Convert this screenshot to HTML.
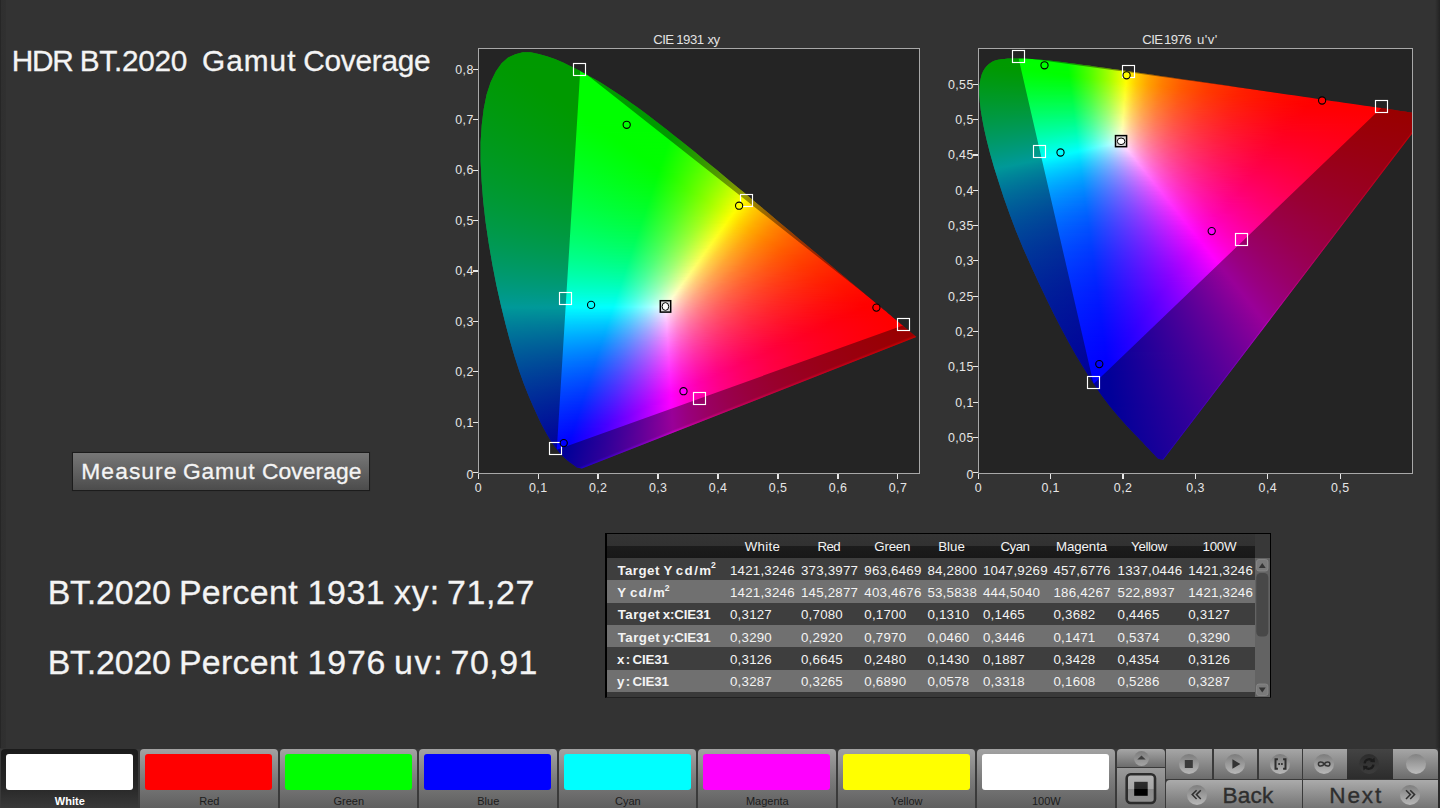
<!DOCTYPE html>
<html lang="en"><head><meta charset="utf-8"><title>HDR BT.2020 Gamut Coverage</title>
<style>
*{box-sizing:border-box;margin:0;padding:0}
html,body{width:1440px;height:808px;overflow:hidden;background:#333;font-family:"Liberation Sans",sans-serif;color:#f2f2f2}
.abs{position:absolute}
#edge{left:0;top:0;width:6.5px;height:748.5px;background:linear-gradient(90deg,#262626 1px,#2f2f2f 1px,#303030 6px,#333 6.5px)}
.w{line-height:1;white-space:nowrap;color:#f4f4f4;-webkit-text-stroke:.3px #f4f4f4}
#btn{left:72px;top:452px;width:298px;height:39px;border:1px solid #1c1c1c;background:linear-gradient(#777,#4c4c4c);box-shadow:0 0 1px #2a2a2a}
/* charts */
.plot{background:#242424;border:1px solid #a8a8a8;overflow:hidden}
.ct{font-size:12px;line-height:14px;color:#ddd;text-align:center;white-space:nowrap}
.tl{font-size:12.4px;line-height:14px;color:#e6e6e6;white-space:nowrap;letter-spacing:.45px}
.yl{text-align:right;width:40px}
.xl{text-align:center;width:40px}
.tk{background:#e8e8e8}
.cie{position:absolute;left:0;top:0}
.cie i{display:block;height:1px}
.dk{position:absolute;left:0;top:0;background:rgba(0,0,0,.4)}
svg.mk{position:absolute;left:0;top:0;overflow:visible}
/* table */
#tbl{left:605px;top:533px;width:666px;height:165px;border:1px solid #000;border-left-width:2px;border-bottom-color:#212121;background:#3a3a3a}
#tbl .hd{position:absolute;left:0;top:0;width:648px;height:24px;background:linear-gradient(#343434 0,#313131 50%,#1c1c1c 52%,#181818 100%)}
#tbl .r{position:absolute;left:0;width:648px}
#tbl .r.d{background:#3e3e3e}
#tbl .r.l{background:#707070}
#tbl span,#tbl b{position:absolute;font-size:13.3px;line-height:1;white-space:nowrap;color:#f3f3f3}
#sb{position:absolute;left:648px;top:0;width:15px;height:163px;background:#383838}
/* bottom bar */
#bar{left:0;top:748px;width:1440px;height:60px;background:linear-gradient(#333 0,#333 1px,#3a3a3a 1px)}
.tab{position:absolute;top:1px;width:137.6px;height:60px;border-radius:4px 4px 0 0;background:linear-gradient(#a2a2a2,#7c7c7c 50%,#5e5e5e);font-size:11px;text-align:center;color:#1c1c1c}
.tab.sel{background:linear-gradient(#1b1b1b,#262626 60%,#3a3a3a);color:#fff;font-weight:bold}
.tab u{position:absolute;left:5px;top:5px;width:127.2px;height:36px;border-radius:3px;text-decoration:none}
.tab s{position:absolute;left:0;width:138px;top:45px;line-height:14px;text-decoration:none}

.cb{position:absolute;background:linear-gradient(#a6a6a6,#6c6c6c)}
.cb .c{position:absolute;width:20px;height:20px;border-radius:10px;background:linear-gradient(#7c7c7c,#9a9a9a 50%,#b8b8b8)}
.nav{position:absolute;top:32px;height:28px;background:linear-gradient(#ababab,#747474);font-size:22.6px;line-height:26px;color:#2e2e2e;-webkit-text-stroke:.35px #2e2e2e}
.nav .c{position:absolute;top:5px;width:20px;height:20px;border-radius:10px;background:linear-gradient(#7e7e7e,#9c9c9c 50%,#b8b8b8)}

</style></head><body>
<div class="abs" id="edge"></div><div class="abs" style="left:1435px;top:0;width:5px;height:748px;background:linear-gradient(90deg,#333,#2b2b2b 50%,#222)"></div>
<div class="abs" id="title"><span class="abs w" style="left:11.8px;top:46.3px;font-size:29.8px;letter-spacing:-1.34px;">HDR</span> <span class="abs w" style="left:79.7px;top:46.3px;font-size:29.8px;letter-spacing:-0.27px;">BT.2020</span> <span class="abs w" style="left:202.1px;top:46.3px;font-size:29.8px;letter-spacing:0.98px;">Gamut</span> <span class="abs w" style="left:303.3px;top:46.3px;font-size:29.8px;letter-spacing:-0.28px;">Coverage</span></div>
<div class="abs" id="btn"></div>
<div><span class="abs w" style="left:81.3px;top:460.3px;font-size:22.8px;letter-spacing:1.08px;">Measure</span> <span class="abs w" style="left:183.1px;top:460.3px;font-size:22.8px;letter-spacing:0.75px;">Gamut</span> <span class="abs w" style="left:261.9px;top:460.3px;font-size:22.8px;letter-spacing:0.11px;">Coverage</span></div>
<div><span class="abs w" style="left:47.7px;top:575.6px;font-size:33.9px;letter-spacing:-0.19px;">BT.2020</span> <span class="abs w" style="left:178.9px;top:575.6px;font-size:33.9px;letter-spacing:0.31px;">Percent</span> <span class="abs w" style="left:307.5px;top:575.6px;font-size:33.9px;letter-spacing:0.60px;">1931</span> <span class="abs w" style="left:394.0px;top:575.6px;font-size:33.9px;letter-spacing:0.88px;">xy:</span> <span class="abs w" style="left:446.9px;top:575.6px;font-size:33.9px;letter-spacing:0.69px;">71,27</span></div>
<div><span class="abs w" style="left:47.7px;top:645.6px;font-size:33.9px;letter-spacing:-0.19px;">BT.2020</span> <span class="abs w" style="left:178.9px;top:645.6px;font-size:33.9px;letter-spacing:0.31px;">Percent</span> <span class="abs w" style="left:307.5px;top:645.6px;font-size:33.9px;letter-spacing:0.85px;">1976</span> <span class="abs w" style="left:394.0px;top:645.6px;font-size:33.9px;letter-spacing:1.69px;">uv:</span> <span class="abs w" style="left:450.5px;top:645.6px;font-size:33.9px;letter-spacing:0.54px;">70,91</span></div>

<div class="abs plot" style="left:478px;top:48px;width:442px;height:426px">
<div class="cie" style="padding-top:3px;width:440px;height:424px;clip-path:polygon(102.9px 419.6px,97.9px 418.4px,97.3px 418px,96.6px 417.5px,95.9px 416.9px,95.1px 416.3px,94.2px 415.7px,93.2px 415px,92.2px 414.2px,91px 413.4px,89.8px 412.5px,88.5px 411.4px,87.1px 410.3px,85.6px 408.9px,84.1px 407.5px,82.4px 405.8px,80.5px 403.8px,78.5px 401.3px,76.2px 398.3px,73.7px 394.7px,71px 390.6px,68.2px 385.8px,65px 380.1px,61.6px 373.4px,58px 365.8px,54px 357px,49.7px 346.9px,45.1px 335.5px,40.5px 322.7px,35.8px 308.2px,31.1px 292.3px,26.5px 275.1px,21.9px 256.3px,17.4px 236.3px,13.4px 215.7px,9.8px 194.7px,6.6px 173.3px,4.2px 152.3px,2.6px 132px,1.6px 112.2px,1.6px 93.6px,2.7px 76.2px,4.7px 59.9px,7.6px 45.5px,11.7px 33.1px,16.8px 22.6px,22.6px 14.3px,29.1px 8.6px,36.3px 5.2px,43.9px 3.3px,51.6px 3.3px,59.7px 4.9px,67.8px 7.2px,75.9px 10px,84.1px 13.6px,92.1px 17.4px,99.8px 21.3px,107.4px 25.4px,115px 29.7px,122.4px 34.1px,129.7px 38.7px,137px 43.4px,144.2px 48.3px,151.5px 53.4px,158.7px 58.6px,165.8px 63.8px,173px 69.2px,180.1px 74.7px,187.3px 80.2px,194.4px 85.9px,201.5px 91.6px,208.7px 97.3px,215.9px 103.1px,223px 108.9px,230.1px 114.8px,237.3px 120.6px,244.4px 126.5px,251.5px 132.4px,258.5px 138.3px,265.6px 144.1px,272.6px 149.9px,279.5px 155.8px,286.4px 161.5px,293.2px 167.2px,299.9px 172.9px,306.6px 178.5px,313.2px 184px,319.6px 189.4px,326px 194.7px,332.2px 199.9px,338.3px 205px,344.2px 209.9px,349.9px 214.8px,355.5px 219.4px,360.8px 223.9px,365.8px 228.1px,370.6px 232.2px,375.2px 236px,379.7px 239.7px,383.9px 243.3px,388px 246.7px,391.7px 249.8px,395.2px 252.7px,398.5px 255.4px,401.6px 258px,404.4px 260.4px,407.1px 262.6px,409.5px 264.7px,411.8px 266.6px,413.9px 268.4px,415.9px 270px,417.7px 271.5px,419.4px 272.9px,420.9px 274.2px,422.4px 275.5px,423.8px 276.6px,425.1px 277.7px,426.3px 278.7px,427.4px 279.7px,428.5px 280.6px,429.5px 281.4px,430.4px 282.2px,431.3px 282.9px,432.1px 283.6px,432.8px 284.2px,433.5px 284.7px,434.1px 285.2px,434.6px 285.7px,435.1px 286.1px,435.6px 286.5px,436px 286.9px,436.4px 287.2px,436.7px 287.5px,437px 287.7px,437.3px 287.9px,437.9px 287.8px)">
<i style="background:linear-gradient(90deg,#0f0 40px,#0f0 57px)"></i>
<i style="background:linear-gradient(90deg,#0f0 35px,#0f0 62px)"></i>
<i style="background:linear-gradient(90deg,#0f0 33px,#0f0 65px)"></i>
<i style="background:linear-gradient(90deg,#0f0 31px,#0f0 69px)"></i>
<i style="background:linear-gradient(90deg,#0f0 29px,#0f0 72px)"></i>
<i style="background:linear-gradient(90deg,#0f0 27px,#0f0 74px)"></i>
<i style="background:linear-gradient(90deg,#0f0 26px,#0f0 77px)"></i>
<i style="background:linear-gradient(90deg,#0f0 25px,#0f0 80px)"></i>
<i style="background:linear-gradient(90deg,#0f0 24px,#0f0 82px)"></i>
<i style="background:linear-gradient(90deg,#0f0 23px,#0f0 84px)"></i>
<i style="background:linear-gradient(90deg,#0f0 21px,#0f0 86px)"></i>
<i style="background:linear-gradient(90deg,#0f0 21px,#0f0 88px)"></i>
<i style="background:linear-gradient(90deg,#0f0 20px,#0f0 91px)"></i>
<i style="background:linear-gradient(90deg,#00ff01 19px,#0f0 93px)"></i>
<i style="background:linear-gradient(90deg,#00ff01 19px,#0f0 95px)"></i>
<i style="background:linear-gradient(90deg,#00ff02 18px,#0f0 97px)"></i>
<i style="background:linear-gradient(90deg,#00ff03 17px,#0f0 44px,#0f0 99px)"></i>
<i style="background:linear-gradient(90deg,#00ff04 16px,#0f0 38px,#0f0 101px)"></i>
<i style="background:linear-gradient(90deg,#00ff04 16px,#0f0 42px,#0f0 103px)"></i>
<i style="background:linear-gradient(90deg,#00ff05 15px,#0f0 40px,#0f0 105px)"></i>
<i style="background:linear-gradient(90deg,#00ff05 15px,#0f0 43px,#0f0 106px)"></i>
<i style="background:linear-gradient(90deg,#00ff06 14px,#0f0 42px,#0f0 108px)"></i>
<i style="background:linear-gradient(90deg,#00ff06 14px,#0f0 45px,#0f0 110px)"></i>
<i style="background:linear-gradient(90deg,#00ff07 13px,#0f0 45px,#0f0 112px)"></i>
<i style="background:linear-gradient(90deg,#00ff08 13px,#0f0 46px,#0f0 114px)"></i>
<i style="background:linear-gradient(90deg,#00ff08 12px,#0f0 48px,#0f0 115px)"></i>
<i style="background:linear-gradient(90deg,#00ff09 12px,#0f0 49px,#0f0 117px)"></i>
<i style="background:linear-gradient(90deg,#00ff09 11px,#0f0 50px,#0f0 119px)"></i>
<i style="background:linear-gradient(90deg,#00ff0a 11px,#0f0 52px,#0f0 120px)"></i>
<i style="background:linear-gradient(90deg,#00ff0b 10px,#0f0 52px,#0f0 122px)"></i>
<i style="background:linear-gradient(90deg,#00ff0b 10px,#0f0 55px,#0f0 124px)"></i>
<i style="background:linear-gradient(90deg,#00ff0c 10px,#0f0 55px,#0f0 125px)"></i>
<i style="background:linear-gradient(90deg,#00ff0c 9px,#0f0 58px,#0f0 127px)"></i>
<i style="background:linear-gradient(90deg,#00ff0d 9px,#0f0 58px,#0f0 129px)"></i>
<i style="background:linear-gradient(90deg,#00ff0d 9px,#0f0 61px,#0f0 130px)"></i>
<i style="background:linear-gradient(90deg,#00ff0e 8px,#0f0 61px,#0f0 132px)"></i>
<i style="background:linear-gradient(90deg,#00ff0f 8px,#0f0 63px,#0f0 133px)"></i>
<i style="background:linear-gradient(90deg,#00ff0f 8px,#0f0 64px,#0f0 135px)"></i>
<i style="background:linear-gradient(90deg,#00ff10 7px,#0f0 66px,#0f0 136px)"></i>
<i style="background:linear-gradient(90deg,#00ff10 7px,#0f0 67px,#0f0 138px)"></i>
<i style="background:linear-gradient(90deg,#0f1 7px,#0f0 69px,#0f0 139px)"></i>
<i style="background:linear-gradient(90deg,#00ff12 6px,#0f0 70px,#0f0 141px)"></i>
<i style="background:linear-gradient(90deg,#00ff12 6px,#0f0 72px,#0f0 142px)"></i>
<i style="background:linear-gradient(90deg,#00ff13 6px,#0f0 73px,#0f0 144px)"></i>
<i style="background:linear-gradient(90deg,#00ff13 6px,#0f0 75px,#0f0 145px)"></i>
<i style="background:linear-gradient(90deg,#00ff14 5px,#0f0 76px,#0f0 147px)"></i>
<i style="background:linear-gradient(90deg,#00ff14 5px,#0f0 78px,#0f0 148px)"></i>
<i style="background:linear-gradient(90deg,#00ff15 5px,#0f0 79px,#0f0 150px)"></i>
<i style="background:linear-gradient(90deg,#00ff15 5px,#0f0 81px,#0f0 151px)"></i>
<i style="background:linear-gradient(90deg,#00ff16 5px,#0f0 81px,#0f0 152px)"></i>
<i style="background:linear-gradient(90deg,#00ff17 4px,#0f0 83px,#0f0 154px)"></i>
<i style="background:linear-gradient(90deg,#00ff17 4px,#0f0 85px,#0f0 155px)"></i>
<i style="background:linear-gradient(90deg,#00ff18 4px,#0f0 86px,#0f0 157px)"></i>
<i style="background:linear-gradient(90deg,#00ff18 4px,#0f0 87px,#0f0 158px)"></i>
<i style="background:linear-gradient(90deg,#00ff19 4px,#0f0 89px,#0f0 159px)"></i>
<i style="background:linear-gradient(90deg,#00ff1a 3px,#0f0 90px,#0f0 161px)"></i>
<i style="background:linear-gradient(90deg,#00ff1a 3px,#0f0 92px,#0f0 162px)"></i>
<i style="background:linear-gradient(90deg,#00ff1b 3px,#0f0 93px,#0f0 163px)"></i>
<i style="background:linear-gradient(90deg,#00ff1b 3px,#0f0 95px,#0f0 165px)"></i>
<i style="background:linear-gradient(90deg,#00ff1c 3px,#0f0 96px,#0f0 166px)"></i>
<i style="background:linear-gradient(90deg,#00ff1c 3px,#0f0 98px,#0f0 168px)"></i>
<i style="background:linear-gradient(90deg,#00ff1d 3px,#0f0 99px,#0f0 169px)"></i>
<i style="background:linear-gradient(90deg,#00ff1e 2px,#0f0 101px,#0f0 170px)"></i>
<i style="background:linear-gradient(90deg,#00ff1e 2px,#0f0 102px,#0f0 172px)"></i>
<i style="background:linear-gradient(90deg,#00ff1f 2px,#0f0 104px,#0f0 173px)"></i>
<i style="background:linear-gradient(90deg,#00ff1f 2px,#0f0 105px,#0f0 174px)"></i>
<i style="background:linear-gradient(90deg,#00ff20 2px,#0f0 107px,#0f0 175px)"></i>
<i style="background:linear-gradient(90deg,#00ff21 2px,#0f0 108px,#0f0 177px)"></i>
<i style="background:linear-gradient(90deg,#00ff21 2px,#0f0 110px,#0f0 178px)"></i>
<i style="background:linear-gradient(90deg,#0f2 2px,#0f0 111px,#0f0 179px)"></i>
<i style="background:linear-gradient(90deg,#00ff23 1px,#0f0 113px,#0f0 181px)"></i>
<i style="background:linear-gradient(90deg,#00ff23 1px,#00ff01 107px,#0f0 182px)"></i>
<i style="background:linear-gradient(90deg,#00ff24 1px,#0f0 116px,#0f0 183px)"></i>
<i style="background:linear-gradient(90deg,#00ff24 1px,#00ff01 110px,#0f0 185px)"></i>
<i style="background:linear-gradient(90deg,#00ff25 1px,#0f0 119px,#0f0 186px)"></i>
<i style="background:linear-gradient(90deg,#00ff26 1px,#0f0 120px,#0f0 187px)"></i>
<i style="background:linear-gradient(90deg,#00ff26 1px,#00ff04 107px,#0f0 125px,#0f0 188px)"></i>
<i style="background:linear-gradient(90deg,#00ff27 1px,#00ff03 111px,#0f0 129px,#0f0 190px)"></i>
<i style="background:linear-gradient(90deg,#00ff27 1px,#00ff04 110px,#0f0 128px,#0f0 191px)"></i>
<i style="background:linear-gradient(90deg,#00ff28 1px,#00ff03 114px,#0f0 132px,#0f0 192px)"></i>
<i style="background:linear-gradient(90deg,#00ff29 1px,#00ff02 118px,#02ff00 193px,#04ff00 194px)"></i>
<i style="background:linear-gradient(90deg,#00ff29 1px,#00ff08 104px,#0f0 129px,#01ff00 192px,#06ff00 195px)"></i>
<i style="background:linear-gradient(90deg,#00ff2a 1px,#00ff06 111px,#0f0 132px,#02ff00 192px,#08ff00 196px)"></i>
<i style="background:linear-gradient(90deg,#00ff2a 1px,#00ff0a 102px,#0f0 132px,#02ff00 192px,#0bff00 197px)"></i>
<i style="background:linear-gradient(90deg,#00ff2b 0px,#00ff08 109px,#0f0 134px,#01ff00 191px,#0fff00 199px)"></i>
<i style="background:linear-gradient(90deg,#00ff2c 0px,#00ff07 113px,#0f0 135px,#02ff00 191px,#1f0 200px)"></i>
<i style="background:linear-gradient(90deg,#00ff2d 0px,#00ff06 117px,#0f0 138px,#02ff00 191px,#14ff00 201px)"></i>
<i style="background:linear-gradient(90deg,#00ff2d 0px,#00ff0b 106px,#0f0 137px,#01ff00 190px,#16ff00 202px)"></i>
<i style="background:linear-gradient(90deg,#00ff2e 0px,#00ff0a 110px,#0f0 140px,#02ff00 190px,#1aff00 204px)"></i>
<i style="background:linear-gradient(90deg,#00ff2f 0px,#00ff08 117px,#0f0 141px,#02ff00 190px,#1dff00 205px)"></i>
<i style="background:linear-gradient(90deg,#00ff2f 0px,#00ff0e 103px,#0f0 142px,#01ff00 189px,#1fff00 206px)"></i>
<i style="background:linear-gradient(90deg,#00ff30 0px,#00ff0c 110px,#0f0 143px,#02ff00 189px,#2f0 207px)"></i>
<i style="background:linear-gradient(90deg,#00ff31 0px,#00ff0b 114px,#0f0 145px,#02ff00 189px,#26ff00 209px)"></i>
<i style="background:linear-gradient(90deg,#00ff31 0px,#00ff10 103px,#0f0 146px,#01ff00 188px,#29ff00 210px)"></i>
<i style="background:linear-gradient(90deg,#00ff32 0px,#00ff0d 113px,#0f0 148px,#02ff00 188px,#2cff00 211px)"></i>
<i style="background:linear-gradient(90deg,#0f3 0px,#00ff0d 114px,#0f0 149px,#02ff00 188px,#2eff00 212px)"></i>
<i style="background:linear-gradient(90deg,#0f3 0px,#00ff12 103px,#0f0 151px,#01ff00 187px,#3f0 214px)"></i>
<i style="background:linear-gradient(90deg,#00ff34 0px,#00ff10 110px,#0f0 152px,#02ff00 187px,#36ff00 215px)"></i>
<i style="background:linear-gradient(90deg,#00ff35 0px,#00ff0f 114px,#0f0 154px,#02ff00 187px,#39ff00 216px)"></i>
<i style="background:linear-gradient(90deg,#00ff35 0px,#00ff14 103px,#0f0 155px,#01ff00 186px,#3cff00 217px)"></i>
<i style="background:linear-gradient(90deg,#00ff36 0px,#0f1 113px,#0f0 157px,#02ff00 186px,#3fff00 218px)"></i>
<i style="background:linear-gradient(90deg,#00ff37 0px,#00ff10 117px,#0f0 158px,#02ff00 186px,#4f0 220px)"></i>
<i style="background:linear-gradient(90deg,#00ff37 0px,#00ff16 103px,#0f0 160px,#01ff00 185px,#47ff00 221px)"></i>
<i style="background:linear-gradient(90deg,#00ff38 0px,#00ff14 110px,#0f0 161px,#02ff00 185px,#47ff00 221px,#4aff00 222px)"></i>
<i style="background:linear-gradient(90deg,#00ff39 0px,#00ff14 112px,#0f0 163px,#02ff00 185px,#4dff00 223px)"></i>
<i style="background:linear-gradient(90deg,#00ff39 0px,#00ff1a 98px,#0f0 164px,#01ff00 184px,#52ff00 225px)"></i>
<i style="background:linear-gradient(90deg,#00ff3a 0px,#00ff1a 100px,#0f0 166px,#02ff00 184px,#5f0 226px)"></i>
<i style="background:linear-gradient(90deg,#00ff3b 0px,#00ff17 110px,#0f0 167px,#02ff00 184px,#4dff00 222px,#58ff00 227px)"></i>
<i style="background:linear-gradient(90deg,#00ff3c 0px,#00ff16 114px,#0f0 168px,#01ff00 183px,#4eff00 222px,#5cff00 228px)"></i>
<i style="background:linear-gradient(90deg,#00ff3c 0px,#00ff1a 106px,#0f0 170px,#02ff00 183px,#4fff00 222px,#61ff00 230px)"></i>
<i style="background:linear-gradient(90deg,#00ff3d 0px,#00ff1b 105px,#0f0 171px,#02ff00 183px,#5bff00 227px,#64ff00 231px)"></i>
<i style="background:linear-gradient(90deg,#00ff3e 0px,#00ff19 112px,#0f0 173px,#01ff00 182px,#5aff00 226px,#68ff00 232px)"></i>
<i style="background:linear-gradient(90deg,#00ff3f 0px,#00ff19 114px,#0f0 174px,#02ff00 182px,#4aff00 218px,#6bff00 233px)"></i>
<i style="background:linear-gradient(90deg,#00ff3f 0px,#00ff1e 103px,#0f0 176px,#02ff00 182px,#51ff00 221px,#6fff00 234px)"></i>
<i style="background:linear-gradient(90deg,#00ff40 0px,#00ff1e 105px,#0f0 177px,#03ff00 182px,#52ff00 221px,#75ff00 236px)"></i>
<i style="background:linear-gradient(90deg,#00ff41 0px,#00ff1b 115px,#0f0 179px,#15ff00 191px,#63ff00 228px,#78ff00 237px)"></i>
<i style="background:linear-gradient(90deg,#00ff42 0px,#00ff1c 114px,#0f0 180px,#52ff00 220px,#7cff00 238px)"></i>
<i style="background:linear-gradient(90deg,#00ff42 0px,#00ff23 98px,#01ff00 180px,#48ff00 215px,#80ff00 239px)"></i>
<i style="background:linear-gradient(90deg,#00ff43 1px,#00ff1f 111px,#02ff00 180px,#49ff00 215px,#84ff00 240px)"></i>
<i style="background:linear-gradient(90deg,#0f4 1px,#00ff1e 115px,#02ff01 180px,#53ff00 219px,#8aff00 242px)"></i>
<i style="background:linear-gradient(90deg,#0f4 1px,#00ff25 99px,#01ff02 179px,#54ff00 219px,#8eff00 243px)"></i>
<i style="background:linear-gradient(90deg,#00ff45 1px,#00ff25 101px,#02ff03 179px,#1fff00 194px,#6fff00 230px,#92ff00 244px)"></i>
<i style="background:linear-gradient(90deg,#00ff46 1px,#00ff24 106px,#02ff03 179px,#27ff00 197px,#6eff00 229px,#96ff00 245px)"></i>
<i style="background:linear-gradient(90deg,#00ff47 1px,#00ff23 111px,#01ff05 178px,#1fff00 193px,#6fff00 229px,#9aff00 246px)"></i>
<i style="background:linear-gradient(90deg,#00ff48 1px,#0f2 115px,#02ff05 178px,#2f0 194px,#6eff00 228px,#a1ff00 248px)"></i>
<i style="background:linear-gradient(90deg,#00ff48 1px,#00ff2a 97px,#02ff06 178px,#27ff00 196px,#74ff00 230px,#a5ff00 249px)"></i>
<i style="background:linear-gradient(90deg,#00ff49 1px,#00ff28 104px,#01ff08 177px,#26ff00 195px,#6eff00 227px,#af0 250px)"></i>
<i style="background:linear-gradient(90deg,#00ff4a 1px,#00ff2a 101px,#02ff08 177px,#2dff00 198px,#7cff00 232px,#aeff00 251px)"></i>
<i style="background:linear-gradient(90deg,#00ff4b 1px,#00ff26 114px,#02ff09 177px,#2eff00 198px,#7dff00 232px,#b2ff00 252px)"></i>
<i style="background:linear-gradient(90deg,#00ff4c 1px,#00ff27 113px,#01ff0b 176px,#3f0 200px,#89ff00 236px,#baff00 254px)"></i>
<i style="background:linear-gradient(90deg,#00ff4c 1px,#00ff2d 100px,#02ff0b 176px,#36ff00 201px,#8f0 235px,#beff00 255px)"></i>
<i style="background:linear-gradient(90deg,#00ff4d 1px,#00ff2f 97px,#02ff0c 176px,#3cff00 203px,#84ff00 233px,#c3ff00 256px)"></i>
<i style="background:linear-gradient(90deg,#00ff4e 1px,#00ff2f 99px,#01ff0e 175px,#3fff00 204px,#90ff00 237px,#c8ff00 257px)"></i>
<i style="background:linear-gradient(90deg,#00ff4f 1px,#00ff2e 104px,#02ff0f 175px,#45ff00 206px,#8fff00 236px,#d0ff00 259px)"></i>
<i style="background:linear-gradient(90deg,#00ff50 1px,#00ff2f 104px,#02ff0f 175px,#48ff00 207px,#96ff00 238px,#d5ff00 260px)"></i>
<i style="background:linear-gradient(90deg,#00ff50 2px,#00ff32 99px,#01ff11 174px,#4eff00 209px,#9dff00 240px,#daff00 261px)"></i>
<i style="background:linear-gradient(90deg,#00ff51 2px,#0f3 98px,#02ff12 174px,#4aff00 207px,#9cff00 239px,#dfff00 262px)"></i>
<i style="background:linear-gradient(90deg,#00ff52 2px,#00ff34 98px,#02ff13 174px,#52ff00 210px,#a6ff00 242px,#e4ff00 263px)"></i>
<i style="background:linear-gradient(90deg,#00ff53 2px,#0f3 103px,#01ff14 173px,#4cff01 207px,#a2ff00 240px,#edff00 265px)"></i>
<i style="background:linear-gradient(90deg,#00ff54 2px,#00ff32 108px,#02ff15 173px,#4dff02 207px,#a1ff00 239px,#f2ff00 266px)"></i>
<i style="background:linear-gradient(90deg,#0f5 2px,#00ff34 105px,#02ff16 173px,#58ff01 211px,#aeff00 243px,#f8ff00 267px)"></i>
<i style="background:linear-gradient(90deg,#00ff56 2px,#00ff35 105px,#01ff17 172px,#4dff05 206px,#6eff00 219px,#bcff00 247px,#feff00 268px)"></i>
<i style="background:linear-gradient(90deg,#00ff57 2px,#00ff35 108px,#02ff18 172px,#4eff06 206px,#6fff00 219px,#c3ff00 249px,#fffe00 268px,#fffb00 269px)"></i>
<i style="background:linear-gradient(90deg,#00ff58 2px,#00ff35 110px,#02ff19 172px,#52ff06 207px,#79ff00 222px,#c8ff00 250px,#ff0 267px,#fff200 271px)"></i>
<i style="background:linear-gradient(90deg,#00ff58 2px,#00ff3c 94px,#01ff1b 171px,#4eff08 205px,#7aff00 222px,#caff00 250px,#feff00 266px,#ffed00 272px)"></i>
<i style="background:linear-gradient(90deg,#00ff59 2px,#00ff3d 94px,#02ff1c 171px,#48ff0b 202px,#81ff00 224px,#c9ff00 249px,#fffd00 266px,#ffe700 273px)"></i>
<i style="background:linear-gradient(90deg,#00ff5a 2px,#00ff3c 99px,#02ff1d 171px,#53ff0a 206px,#82ff00 224px,#e2ff00 256px,#fffe00 265px,#ffe200 274px)"></i>
<i style="background:linear-gradient(90deg,#00ff5b 3px,#00ff3d 99px,#01ff1e 170px,#4fff0c 204px,#89ff00 226px,#e7ff00 257px,#ff0 264px,#fd0 275px)"></i>
<i style="background:linear-gradient(90deg,#00ff5c 3px,#00ff3c 105px,#02ff1f 170px,#49ff0e 201px,#8eff00 227px,#e6ff00 256px,#feff00 263px,#ffd600 277px)"></i>
<i style="background:linear-gradient(90deg,#00ff5d 3px,#00ff3d 105px,#02ff20 170px,#54ff0d 205px,#95ff00 229px,#efff00 258px,#fffe00 263px,#ffd100 278px)"></i>
<i style="background:linear-gradient(90deg,#00ff5e 3px,#00ff3e 105px,#01ff22 169px,#50ff0f 203px,#9aff00 230px,#e4ff00 254px,#ff0 262px,#ffd500 276px,#ffcd00 279px)"></i>
<i style="background:linear-gradient(90deg,#00ff5f 3px,#00ff3f 105px,#02ff23 169px,#4aff12 200px,#9eff00 231px,#f7ff00 259px,#fffc00 262px,#ffcd00 278px,#ffc800 280px)"></i>
<i style="background:linear-gradient(90deg,#00ff60 3px,#00ff40 105px,#02ff24 169px,#58ff10 205px,#a6ff00 233px,#fffd00 261px,#ffcb00 278px,#ffc400 281px)"></i>
<i style="background:linear-gradient(90deg,#00ff61 3px,#00ff41 105px,#01ff25 168px,#51ff13 202px,#a8ff00 233px,#fffe00 260px,#ffce00 276px,#ffbe00 283px)"></i>
<i style="background:linear-gradient(90deg,#00ff62 3px,#00ff42 105px,#02ff26 168px,#4bff16 199px,#98ff04 227px,#bcff00 239px,#ff0 259px,#ffd400 273px,#ffba00 284px)"></i>
<i style="background:linear-gradient(90deg,#00ff63 3px,#00ff43 105px,#02ff27 168px,#54ff15 202px,#a5ff03 231px,#cbff00 243px,#feff00 258px,#ffca00 276px,#ffb600 285px)"></i>
<i style="background:linear-gradient(90deg,#00ff64 3px,#0f4 105px,#01ff29 167px,#50ff17 200px,#a4ff04 230px,#caff00 242px,#fffe00 258px,#ffcb00 275px,#ffb200 286px)"></i>
<i style="background:linear-gradient(90deg,#00ff64 4px,#00ff48 98px,#02ff2a 167px,#4cff1a 198px,#a0ff07 228px,#cf0 242px,#ff0 257px,#ffd900 269px,#ffb000 286px,#ffae00 287px)"></i>
<i style="background:linear-gradient(90deg,#00ff65 4px,#00ff4b 92px,#02ff2b 167px,#55ff19 201px,#abff06 231px,#d2ff00 243px,#feff00 256px,#fc0 273px,#ffab00 288px)"></i>
<i style="background:linear-gradient(90deg,#00ff67 4px,#00ff45 111px,#01ff2d 166px,#51ff1b 199px,#a1ff0a 227px,#d7ff00 244px,#fffd00 256px,#ffca00 273px,#ffa500 290px)"></i>
<i style="background:linear-gradient(90deg,#00ff68 4px,#00ff48 106px,#02ff2e 166px,#4dff1e 197px,#a2ff0b 227px,#df0 245px,#fffe00 255px,#ffc800 273px,#ffa300 290px,#ffa200 291px)"></i>
<i style="background:linear-gradient(90deg,#00ff69 4px,#00ff48 109px,#02ff2f 166px,#59ff1c 201px,#a7ff0b 228px,#e6ff00 247px,#ff0 254px,#ffd300 268px,#ffa700 287px,#ff9e00 292px)"></i>
<i style="background:linear-gradient(90deg,#00ff6a 4px,#00ff4b 104px,#01ff31 165px,#4dff20 196px,#9dff0f 224px,#ecff00 248px,#feff00 253px,#fc0 270px,#ffa800 286px,#ff9b00 293px)"></i>
<i style="background:linear-gradient(90deg,#00ff6b 4px,#00ff4b 107px,#02ff32 165px,#49ff23 194px,#98ff12 222px,#f2ff00 249px,#fffd00 253px,#ffc700 271px,#ffa000 289px,#ff9800 294px)"></i>
<i style="background:linear-gradient(90deg,#00ff6c 4px,#00ff4e 102px,#02ff33 165px,#5f2 198px,#9dff12 223px,#f1ff00 248px,#fffe00 252px,#ffcf00 267px,#ffa200 287px,#ff9300 296px)"></i>
<i style="background:linear-gradient(90deg,#00ff6d 5px,#00ff4d 108px,#01ff35 164px,#53ff23 197px,#bcff0d 232px,#ff0 251px,#ffd300 265px,#ffad00 281px,#ff9000 297px)"></i>
<i style="background:linear-gradient(90deg,#00ff6e 5px,#00ff4f 106px,#02ff36 164px,#4aff27 193px,#98ff16 220px,#ebff05 245px,#feff01 250px,#ffcb00 267px,#ffa300 285px,#ff8d00 298px)"></i>
<i style="background:linear-gradient(90deg,#00ff6f 5px,#00ff50 107px,#00ff38 163px,#4eff28 194px,#96ff18 219px,#f1ff05 246px,#fffe02 250px,#ffce00 265px,#ffa100 285px,#ff8a00 299px)"></i>
<i style="background:linear-gradient(90deg,#00ff70 5px,#00ff52 104px,#01ff39 163px,#4fff29 194px,#b5ff14 228px,#ffff04 249px,#fd0 259px,#ffb000 277px,#ff8b00 297px,#ff8700 300px)"></i>
<i style="background:linear-gradient(90deg,#00ff71 5px,#0f5 99px,#02ff3a 163px,#4bff2b 192px,#a0ff1a 221px,#feff06 248px,#ffd800 260px,#ffb000 276px,#ff8b00 296px,#ff8200 302px)"></i>
<i style="background:linear-gradient(90deg,#00ff72 5px,#00ff56 100px,#00ff3c 162px,#4fff2c 193px,#afff18 225px,#fffd07 248px,#ffd600 260px,#ffae00 276px,#f80 297px,#ff8000 303px)"></i>
<i style="background:linear-gradient(90deg,#00ff73 5px,#00ff56 103px,#01ff3d 162px,#4bff2e 191px,#b1ff19 225px,#fffe09 247px,#ffd400 260px,#ffac00 276px,#ff8500 298px,#ff7d00 304px)"></i>
<i style="background:linear-gradient(90deg,#00ff74 5px,#00ff59 98px,#02ff3e 162px,#4cff30 191px,#a6ff1d 221px,#ffff0c 246px,#ffd100 260px,#ffa600 278px,#ff7e00 302px,#ff7a00 305px)"></i>
<i style="background:linear-gradient(90deg,#00ff75 6px,#00ff59 102px,#00ff40 161px,#50ff30 192px,#a8ff1f 221px,#faff0e 244px,#fffd0d 246px,#ffd503 258px,#ffb600 270px,#ff8d00 291px,#ff7800 306px)"></i>
<i style="background:linear-gradient(90deg,#00ff76 6px,#00ff5c 97px,#01ff42 161px,#4cff33 190px,#a0ff22 218px,#fffe0f 245px,#ffd605 257px,#fb0 267px,#ff8d00 290px,#ff7400 308px)"></i>
<i style="background:linear-gradient(90deg,#0f7 6px,#00ff5e 95px,#02ff43 161px,#50ff34 191px,#a2ff23 218px,#ff1 244px,#ffd606 256px,#ffb400 269px,#ff8f00 288px,#ff7100 309px)"></i>
<i style="background:linear-gradient(90deg,#00ff79 6px,#00ff5b 107px,#00ff45 160px,#54ff34 192px,#aeff23 221px,#feff13 243px,#ffcb05 259px,#ffb000 270px,#ff8700 292px,#ff6f00 310px)"></i>
<i style="background:linear-gradient(90deg,#00ff7a 6px,#00ff5c 108px,#01ff46 160px,#4dff37 189px,#9cff28 215px,#f5ff17 240px,#fffd14 243px,#ffd509 255px,#ffae00 270px,#ff8700 291px,#ff6c00 311px)"></i>
<i style="background:linear-gradient(90deg,#00ff7b 6px,#00ff60 100px,#02ff47 160px,#51ff38 190px,#a8ff27 218px,#fffe17 242px,#ffcf09 256px,#ffa800 272px,#ff8100 294px,#ff6a00 312px)"></i>
<i style="background:linear-gradient(90deg,#00ff7c 6px,#00ff62 98px,#00ff49 159px,#50ff3a 189px,#96ff2d 212px,#efff1c 237px,#ffff19 241px,#ffd30c 254px,#ffa600 272px,#ff8000 294px,#ff6700 314px)"></i>
<i style="background:linear-gradient(90deg,#00ff7d 7px,#00ff62 102px,#01ff4b 159px,#51ff3c 189px,#a2ff2c 215px,#faff1c 239px,#fffc1a 241px,#ffce0c 255px,#ffa901 270px,#ff8600 289px,#ff6400 315px)"></i>
<i style="background:linear-gradient(90deg,#00ff7e 7px,#00ff64 100px,#02ff4c 159px,#4aff3f 186px,#90ff31 209px,#e9ff21 234px,#fffd1c 240px,#ffcb0d 255px,#ffa101 273px,#ff7d00 294px,#ff6200 316px)"></i>
<i style="background:linear-gradient(90deg,#00ff80 7px,#00ff61 112px,#00ff4e 158px,#4eff40 187px,#9cff31 212px,#ffff1f 239px,#ffd813 250px,#ffb007 265px,#ff9400 279px,#ff7000 303px,#ff6000 317px)"></i>
<i style="background:linear-gradient(90deg,#00ff81 7px,#00ff65 105px,#01ff4f 158px,#52ff40 188px,#a5ff31 214px,#feff21 238px,#ffd313 251px,#ffae08 265px,#ff9200 279px,#ff7000 302px,#ff5e00 318px)"></i>
<i style="background:linear-gradient(90deg,#00ff82 7px,#00ff68 100px,#02ff51 158px,#4bff44 185px,#99ff35 210px,#f5ff25 235px,#fffd22 238px,#ffcd13 252px,#ffa807 267px,#ff8b00 282px,#ff6a00 306px,#ff5c00 319px)"></i>
<i style="background:linear-gradient(90deg,#00ff83 7px,#00ff6a 99px,#00ff53 157px,#52ff44 187px,#a9ff34 214px,#fffe25 237px,#ffd417 249px,#ffaa09 265px,#f80 283px,#ff6400 310px,#ff5900 321px)"></i>
<i style="background:linear-gradient(90deg,#00ff85 7px,#00ff68 109px,#01ff54 157px,#48ff48 183px,#93ff3a 207px,#ebff2b 231px,#ffff27 236px,#ffce17 250px,#ffa409 267px,#ff8500 284px,#ff6400 309px,#ff5700 322px)"></i>
<i style="background:linear-gradient(90deg,#00ff86 8px,#00ff69 110px,#02ff56 157px,#4fff48 185px,#a6ff39 212px,#feff29 235px,#ffc917 251px,#ffa009 268px,#ff8000 286px,#ff5c00 315px,#f50 323px)"></i>
<i style="background:linear-gradient(90deg,#00ff87 8px,#00ff6d 102px,#00ff58 156px,#53ff49 186px,#acff3a 213px,#fffd2b 235px,#ffd01b 248px,#ffa90e 263px,#ff8501 282px,#ff6400 307px,#ff5300 324px)"></i>
<i style="background:linear-gradient(90deg,#0f8 8px,#00ff6e 104px,#01ff59 156px,#4fff4c 184px,#a0ff3e 209px,#fffe2d 234px,#ffcd1c 248px,#ffa30d 265px,#ff7d00 286px,#ff5900 316px,#ff5100 325px)"></i>
<i style="background:linear-gradient(90deg,#00ff8a 8px,#00ff6d 111px,#02ff5b 156px,#50ff4d 184px,#a9ff3e 211px,#feff30 233px,#ffce1e 247px,#ffa50f 263px,#ff8203 282px,#ff6d00 297px,#ff4e00 327px)"></i>
<i style="background:linear-gradient(90deg,#00ff8b 8px,#00ff6f 110px,#00ff5d 155px,#49ff51 181px,#96ff43 205px,#edff35 228px,#fffd31 233px,#ffd522 244px,#ffac14 259px,#ff8505 279px,#ff7000 294px,#ff4f00 324px,#ff4c00 328px)"></i>
<i style="background:linear-gradient(90deg,#00ff8c 8px,#00ff74 99px,#01ff5f 155px,#4dff52 182px,#9fff44 207px,#fffe34 232px,#ffcf22 245px,#ffa814 260px,#ff8507 278px,#ff6e00 294px,#ff4a00 329px)"></i>
<i style="background:linear-gradient(90deg,#00ff8d 9px,#00ff75 101px,#02ff60 155px,#4eff53 182px,#9eff46 206px,#f2ff38 228px,#ffff36 231px,#ffd326 243px,#ffa815 259px,#ff8207 279px,#ff6c00 295px,#ff4800 330px)"></i>
<i style="background:linear-gradient(90deg,#00ff8f 9px,#00ff74 108px,#00ff62 154px,#4aff56 180px,#95ff4a 203px,#f1ff3b 227px,#feff39 230px,#ffce25 244px,#ffab18 257px,#ff8208 278px,#ff6700 298px,#ff4700 330px,#ff4700 331px)"></i>
<i style="background:linear-gradient(90deg,#00ff90 9px,#0f7 104px,#01ff64 154px,#51ff57 182px,#a6ff49 207px,#fffd3a 230px,#ffce28 243px,#ffa216 260px,#ff7c07 281px,#ff6400 299px,#ff4600 330px,#f40 333px)"></i>
<i style="background:linear-gradient(90deg,#00ff91 9px,#00ff7a 100px,#02ff66 154px,#46ff5b 178px,#96ff4e 202px,#e6ff41 223px,#fffe3d 229px,#ffd22b 241px,#ffa91b 256px,#ff820b 276px,#ff6200 300px,#ff4500 330px,#ff4200 334px)"></i>
<i style="background:linear-gradient(90deg,#00ff93 9px,#00ff78 111px,#00ff68 153px,#54ff5a 182px,#aeff4c 208px,#ffff3f 228px,#ffd32d 240px,#ffac1e 254px,#ff820d 275px,#ff5f00 301px,#ff4100 335px)"></i>
<i style="background:linear-gradient(90deg,#00ff94 9px,#00ff7d 100px,#01ff69 153px,#4cff5e 179px,#a5ff50 205px,#fdff42 227px,#ffc72b 243px,#ff9f1a 259px,#ff7c0c 278px,#ff5c00 303px,#ff3f00 336px)"></i>
<i style="background:linear-gradient(90deg,#00ff95 10px,#00ff7f 99px,#02ff6b 153px,#48ff60 177px,#95ff54 200px,#e3ff48 220px,#fffe44 227px,#ffd432 238px,#ffaa20 253px,#ff7f0e 275px,#ff5c00 302px,#ff3d00 337px)"></i>
<i style="background:linear-gradient(90deg,#00ff97 10px,#00ff7e 107px,#00ff6d 152px,#4fff61 179px,#aaff53 205px,#ffff46 226px,#ffd534 237px,#ffb226 249px,#ff8b15 267px,#ff6605 292px,#f50 308px,#ff3b00 339px)"></i>
<i style="background:linear-gradient(90deg,#00ff98 10px,#00ff81 103px,#01ff6f 152px,#57ff62 181px,#b0ff55 206px,#feff49 225px,#ffcf34 238px,#ffa622 253px,#ff7f11 273px,#ff5d02 299px,#ff3e00 333px,#ff3a00 340px)"></i>
<i style="background:linear-gradient(90deg,#00ff9a 10px,#00ff81 108px,#02ff71 152px,#52ff65 179px,#a3ff59 202px,#f8ff4c 223px,#fffd4a 225px,#ffd338 236px,#ffa925 251px,#ff7f13 272px,#ff5e04 297px,#ff4e00 313px,#ff3800 341px)"></i>
<i style="background:linear-gradient(90deg,#00ff9b 10px,#00ff84 104px,#00ff73 151px,#51ff67 178px,#a5ff5b 202px,#fffe4d 224px,#ffd039 236px,#ffa726 251px,#ff8115 270px,#ff6006 294px,#ff4d00 312px,#ff3600 342px)"></i>
<i style="background:linear-gradient(90deg,#00ff9d 10px,#00ff83 113px,#01ff75 151px,#49ff6b 175px,#91ff60 196px,#f1ff52 220px,#ffff50 223px,#ffd13b 235px,#ffa728 250px,#ff7c14 272px,#ff5804 300px,#ff4900 316px,#ff3500 343px)"></i>
<i style="background:linear-gradient(90deg,#00ff9e 11px,#00ff85 112px,#02ff77 151px,#57ff6b 179px,#aaff5f 202px,#fdff53 222px,#ffc839 237px,#ffa328 251px,#ff7c16 271px,#ff5805 299px,#ff4900 315px,#f30 345px)"></i>
<i style="background:linear-gradient(90deg,#00ffa0 11px,#00ff86 114px,#00ff79 150px,#55ff6d 178px,#b0ff61 203px,#fffd55 222px,#ffcf3f 234px,#ffa32a 250px,#ff7c18 270px,#ff5907 297px,#ff4700 316px,#ff3100 346px)"></i>
<i style="background:linear-gradient(90deg,#00ffa1 11px,#00ff8a 107px,#01ff7b 150px,#50ff70 176px,#a3ff65 199px,#f6ff59 219px,#ffff58 221px,#ffd343 232px,#ffa82e 247px,#ff7c19 269px,#ff5a08 295px,#ff4500 317px,#ff3000 347px)"></i>
<i style="background:linear-gradient(90deg,#00ffa3 11px,#00ff89 116px,#02ff7d 150px,#4bff73 174px,#9aff68 196px,#e3ff5e 214px,#feff5b 220px,#ffcd42 233px,#ffa62f 247px,#ff7c1b 268px,#ff5b0a 293px,#ff4300 318px,#ff2f00 348px)"></i>
<i style="background:linear-gradient(90deg,#00ffa4 11px,#00ff8e 106px,#00ff7f 149px,#46ff76 172px,#9cff6b 196px,#efff5f 216px,#fffd5c 220px,#ffd147 231px,#ffa631 246px,#ff7e1d 266px,#ff5d0c 290px,#ff4100 319px,#ff2d00 349px)"></i>
<i style="background:linear-gradient(90deg,#00ffa6 11px,#00ff8e 112px,#01ff81 149px,#4eff77 174px,#a6ff6c 198px,#fffe60 219px,#ffd249 230px,#ffa935 244px,#ff791c 268px,#ff550a 296px,#ff3f00 321px,#ff2b00 351px)"></i>
<i style="background:linear-gradient(90deg,#00ffa7 12px,#00ff91 109px,#02ff83 149px,#53ff79 175px,#a5ff6e 197px,#f1ff65 215px,#ffff63 218px,#ffd34c 229px,#ffa735 244px,#ff7b1f 266px,#ff580d 292px,#ff3d00 322px,#ff2a00 352px)"></i>
<i style="background:linear-gradient(90deg,#00ffa9 12px,#00ff91 115px,#00ff86 148px,#4eff7c 173px,#9fff72 195px,#f4ff67 215px,#fffc64 218px,#ffd04d 229px,#ffa738 243px,#ff791f 266px,#ff570d 292px,#ff3b00 323px,#ff2900 353px)"></i>
<i style="background:linear-gradient(90deg,#0fa 12px,#00ff96 104px,#01ff88 148px,#4cff7e 172px,#a5ff73 196px,#fffd67 217px,#ffd150 228px,#ffa538 243px,#ff7921 265px,#ff580f 290px,#ff3a00 323px,#ff2700 354px)"></i>
<i style="background:linear-gradient(90deg,#00ffac 12px,#00ff96 111px,#02ff8a 148px,#47ff81 170px,#98ff78 192px,#e8ff6e 211px,#fffe6b 216px,#ffce51 228px,#ffa83c 241px,#ff8529 257px,#ff6015 282px,#ff3f03 315px,#ff3100 336px,#ff2600 355px)"></i>
<i style="background:linear-gradient(90deg,#00ffae 12px,#00ff96 118px,#00ff8c 147px,#4cff83 171px,#a6ff78 195px,#feff6e 215px,#ffcf54 227px,#ffa33c 242px,#ff7924 263px,#ff5410 291px,#ff3600 326px,#ff2500 356px)"></i>
<i style="background:linear-gradient(90deg,#00ffaf 13px,#0f9 115px,#01ff8e 147px,#4aff86 170px,#a0ff7c 193px,#f8ff72 213px,#fffc6f 215px,#ffcc54 227px,#ffa13c 242px,#ff7926 262px,#ff5512 289px,#ff3802 322px,#ff2300 358px)"></i>
<i style="background:linear-gradient(90deg,#00ffb1 13px,#00ff9a 118px,#02ff91 147px,#45ff89 168px,#97ff80 190px,#e4ff77 208px,#fffe73 214px,#ffd45b 224px,#ffa440 240px,#ff7626 263px,#ff5413 289px,#ff3702 322px,#f20 359px)"></i>
<i style="background:linear-gradient(90deg,#00ffb3 13px,#00ff9b 122px,#00ff93 146px,#4aff8b 169px,#a1ff81 192px,#faff77 212px,#ff7 213px,#ffd15c 224px,#ffa442 239px,#ff7628 262px,#ff5514 287px,#ff3804 319px,#ff2d00 337px,#ff2000 360px)"></i>
<i style="background:linear-gradient(90deg,#00ffb4 13px,#00ffa0 112px,#01ff95 146px,#48ff8e 168px,#9bff84 190px,#f4ff7b 210px,#feff7a 212px,#ffcb5b 225px,#ffa243 239px,#ff7428 262px,#ff5415 287px,#ff3705 319px,#ff2c00 337px,#ff1f00 361px)"></i>
<i style="background:linear-gradient(90deg,#00ffb6 13px,#00ffa1 116px,#02ff98 146px,#4dff90 169px,#aaff86 193px,#fffd7b 212px,#ffd362 222px,#ffaa4a 235px,#ff8232 253px,#ff5e1d 277px,#ff410c 305px,#ff2c00 336px,#ff1e00 362px)"></i>
<i style="background:linear-gradient(90deg,#00ffb8 14px,#00ffa1 124px,#00ff9a 145px,#48ff93 167px,#9cff8a 189px,#f6ff81 209px,#fffe7f 211px,#ffd063 222px,#ffa549 236px,#ff8033 253px,#ff5e1e 276px,#ff3f0c 306px,#ff2900 338px,#ff1c00 364px)"></i>
<i style="background:linear-gradient(90deg,#00ffb9 14px,#00ffa5 117px,#01ff9d 145px,#46ff96 166px,#96ff8d 187px,#f0ff84 207px,#feff83 210px,#ffcd64 222px,#ffa34a 236px,#ff8135 252px,#ff6323 271px,#ff430f 300px,#ff2900 338px,#ff1b00 365px)"></i>
<i style="background:linear-gradient(90deg,#0fb 14px,#00ffa6 121px,#02ff9f 145px,#4bff98 167px,#a1ff8f 189px,#f8ff86 208px,#fffc84 210px,#ffd26a 220px,#ffab52 232px,#ff8238 250px,#ff5b20 276px,#ff390b 311px,#ff2700 340px,#ff1a00 366px)"></i>
<i style="background:linear-gradient(90deg,#00ffbd 14px,#00ffa8 122px,#00ffa2 144px,#49ff9a 166px,#b5ff90 193px,#fffd88 209px,#ffd26d 219px,#ffa651 233px,#ff7f38 251px,#ff5b21 275px,#ff3c0e 306px,#ff2500 341px,#ff1900 367px)"></i>
<i style="background:linear-gradient(90deg,#00ffbf 14px,#0fa 124px,#01ffa4 144px,#4bff9d 166px,#b3ff93 192px,#ffff8c 208px,#ffd370 218px,#ffac57 230px,#ff8940 245px,#ff6b2d 262px,#ff4917 290px,#ff2d05 326px,#ff2100 347px,#ff1800 368px)"></i>
<i style="background:linear-gradient(90deg,#00ffc0 15px,#00ffae 117px,#02ffa6 144px,#49ffa0 165px,#adff97 190px,#feff8f 207px,#ffcd6e 219px,#ffa756 231px,#ff833e 247px,#ff6229 267px,#ff4315 295px,#ff2803 333px,#ff1d00 354px,#ff1600 370px)"></i>
<i style="background:linear-gradient(90deg,#00ffc2 15px,#00ffb0 118px,#00ffa9 143px,#47ffa3 164px,#a7ff9a 188px,#fffd91 207px,#ffd174 217px,#ffaa5a 229px,#ff8542 245px,#ff652c 264px,#ff4517 292px,#ff2a05 328px,#ff1e00 351px,#ff1500 371px)"></i>
<i style="background:linear-gradient(90deg,#00ffc4 15px,#00ffb2 120px,#01ffac 143px,#50ffa5 166px,#a1ff9e 186px,#f6ff97 204px,#fffe95 206px,#ffd278 216px,#ffa85b 229px,#ff8342 245px,#ff652e 263px,#ff471a 289px,#ff2c08 323px,#ff1e00 349px,#ff1400 372px)"></i>
<i style="background:linear-gradient(90deg,#00ffc6 15px,#00ffb4 122px,#02ffae 143px,#52ffa8 166px,#9fffa1 185px,#feff99 205px,#ffcb76 217px,#ff9b55 233px,#ff6f37 255px,#ff5021 279px,#ff330e 311px,#ff1d00 349px,#ff1300 373px)"></i>
<i style="background:linear-gradient(90deg,#00ffc8 15px,#00ffb6 124px,#00ffb1 142px,#4cffab 164px,#99ffa5 183px,#eeff9e 201px,#fdff9d 204px,#ffc877 217px,#ff9b58 232px,#ff733b 252px,#ff5426 274px,#ff3813 303px,#ff1e00 346px,#ff1200 374px)"></i>
<i style="background:linear-gradient(90deg,#00ffca 15px,#00ffb8 126px,#01ffb4 142px,#4effae 164px,#a0ffa7 184px,#f6ffa1 202px,#fffd9f 204px,#ffd17f 214px,#ffa964 226px,#ff8349 242px,#ff5f2f 264px,#ff411a 291px,#ff2607 329px,#ff1900 355px,#f10 376px)"></i>
<i style="background:linear-gradient(90deg,#0fc 16px,#00ffba 128px,#02ffb6 142px,#4cffb1 163px,#9effab 183px,#faffa4 202px,#ffffa3 203px,#ffd183 213px,#ffa966 225px,#ff7f48 243px,#ff5f31 263px,#ff3f1a 292px,#ff2105 336px,#ff1700 357px,#ff1000 377px)"></i>
<i style="background:linear-gradient(90deg,#00ffce 16px,#00ffbc 131px,#00ffb9 141px,#4affb4 162px,#98ffae 181px,#eeffa8 199px,#feffa7 202px,#ffce84 213px,#ffa465 226px,#ff7d49 243px,#ff5b30 265px,#ff3917 298px,#ff1f04 339px,#ff1400 363px,#ff0f00 378px)"></i>
<i style="background:linear-gradient(90deg,#00ffd0 16px,#00ffbf 129px,#01ffbc 141px,#48ffb7 161px,#96ffb2 180px,#e7ffac 197px,#fcffab 201px,#fff2a1 204px,#ffc882 214px,#ffa266 226px,#ff7b4a 243px,#ff5930 265px,#ff3717 299px,#ff1b03 345px,#ff1200 366px,#ff0e00 379px)"></i>
<i style="background:linear-gradient(90deg,#00ffd2 16px,#00ffc1 133px,#02ffbf 141px,#4affba 161px,#94ffb5 179px,#f5ffaf 199px,#fffead 201px,#ffd08b 211px,#ffa86d 223px,#ff8150 239px,#ff6037 259px,#ff4020 287px,#ff250b 325px,#ff1400 360px,#ff0d00 380px)"></i>
<i style="background:linear-gradient(90deg,#00ffd4 17px,#00ffc3 136px,#00ffc2 140px,#44ffbe 159px,#8effb9 177px,#e4ffb4 195px,#ffffb2 200px,#ffd18f 210px,#ffa870 222px,#ff7f51 239px,#ff5d37 260px,#ff3d1f 289px,#ff2009 332px,#ff1300 361px,#ff0b00 382px)"></i>
<i style="background:linear-gradient(90deg,#00ffd6 17px,#01ffc5 140px,#4dffc0 161px,#a7ffbb 182px,#fdffb6 199px,#ffce90 210px,#ffa671 222px,#ff8456 236px,#ff643e 254px,#ff4627 279px,#ff2c13 310px,#ff1300 360px,#ff0a00 383px)"></i>
<i style="background:linear-gradient(90deg,#00ffd8 17px,#00ffc9 135px,#02ffc8 140px,#4fffc3 161px,#a1ffbf 180px,#f6ffba 197px,#fffdb8 199px,#ffcf94 209px,#ffa976 220px,#ff8459 235px,#ff623f 254px,#ff4326 280px,#ff2610 318px,#f10 362px,#ff0900 384px)"></i>
<i style="background:linear-gradient(90deg,#00ffda 17px,#0fc 134px,#00ffcb 139px,#4dffc7 160px,#9fffc2 179px,#ffffbd 198px,#ffd89e 206px,#ffb381 216px,#ff8f64 229px,#ff6845 249px,#ff4529 277px,#ff2913 312px,#ff1000 363px,#ff0800 385px)"></i>
<i style="background:linear-gradient(90deg,#00ffdc 17px,#01ffce 139px,#4bffca 159px,#9dffc6 178px,#f8ffc1 196px,#feffc1 197px,#ffcc98 208px,#ff9e73 222px,#ff7a56 238px,#ff5b3d 257px,#ff3c24 285px,#ff200d 326px,#ff0e00 367px,#ff0800 386px)"></i>
<i style="background:linear-gradient(90deg,#00ffde 18px,#02ffd1 139px,#4dffcd 159px,#9bffca 177px,#f1ffc6 194px,#fffcc3 197px,#ffcd9c 207px,#ffa47b 219px,#ff7e5b 235px,#ff5f42 253px,#ff4129 279px,#ff2714 312px,#ff0e00 365px,#ff0700 387px)"></i>
<i style="background:linear-gradient(90deg,#00ffe0 18px,#00ffd4 138px,#3fffd1 155px,#8bffce 173px,#eaffca 192px,#fffec8 196px,#ffd2a4 205px,#ffab83 216px,#ff8665 230px,#ff6549 248px,#ff4931 270px,#ff2e1c 300px,#ff1809 339px,#ff0b00 371px,#ff0500 389px)"></i>
<i style="background:linear-gradient(90deg,#00ffe3 18px,#01ffd7 138px,#48ffd4 157px,#9cffd1 176px,#eeffce 192px,#ffffcd 195px,#ffd3a8 204px,#ffab86 215px,#ff8465 230px,#ff634a 248px,#ff412d 276px,#ff2515 312px,#ff0c00 367px,#ff0500 390px)"></i>
<i style="background:linear-gradient(90deg,#00ffe5 18px,#02ffda 138px,#4effd7 158px,#a4ffd4 177px,#f2ffd1 192px,#fdffd1 194px,#ffcca5 205px,#ffa987 215px,#ff866a 228px,#ff654d 246px,#ff4734 269px,#ff2d1d 299px,#ff1609 340px,#ff0900 374px,#ff0400 391px)"></i>
<i style="background:linear-gradient(90deg,#00ffe7 19px,#00ffde 137px,#4cffdb 157px,#a2ffd8 176px,#f6ffd5 192px,#fffdd3 194px,#ffd1ad 203px,#ffa98a 214px,#ff8269 229px,#ff604b 248px,#ff4231 273px,#ff291b 303px,#ff0f05 354px,#ff0700 377px,#ff0300 392px)"></i>
<i style="background:linear-gradient(90deg,#00ffe9 19px,#01ffe1 137px,#52ffde 158px,#a5ffdc 176px,#f4ffda 191px,#fffed9 193px,#ffd2b1 202px,#ffa68b 214px,#ff7e67 230px,#ff5b49 250px,#ff3d2e 277px,#ff2318 311px,#ff0c03 361px,#ff0300 388px,#ff0200 393px)"></i>
<i style="background:linear-gradient(90deg,#00ffec 19px,#02ffe4 137px,#50ffe2 157px,#a3ffe0 175px,#f8ffde 191px,#feffde 192px,#ffceb2 202px,#ffa48c 214px,#ff806c 228px,#ff5e4e 247px,#ff4335 269px,#ff271d 303px,#ff1008 348px,#ff0600 378px,#ff0100 395px)"></i>
<i style="background:linear-gradient(90deg,#0fe 19px,#00ffe8 136px,#41ffe6 153px,#97ffe4 172px,#e0ffe3 186px,#fcffe2 191px,#fff1d5 194px,#ffc7af 203px,#ff9e8a 215px,#ff7867 231px,#ff584a 250px,#ff382e 279px,#ff2017 314px,#ff0a03 363px,#ff0100 393px,#f00 396px)"></i>
<i style="background:linear-gradient(90deg,#00fff0 19px,#01ffeb 136px,#54ffe9 157px,#a9ffe8 175px,#fffde5 191px,#ffd0bb 200px,#ffab99 210px,#ff8778 223px,#ff6457 241px,#ff463c 264px,#ff2b23 294px,#ff100a 345px,#ff0400 381px,#f00 397px)"></i>
<i style="background:linear-gradient(90deg,#00fff3 20px,#02ffee 136px,#49ffed 154px,#9dffec 172px,#f3ffeb 188px,#ffffeb 190px,#ffd6c4 198px,#ffab9c 209px,#ff8578 223px,#ff6258 241px,#ff4038 268px,#ff231d 305px,#ff0b07 355px,#ff0200 384px,#f00 398px)"></i>
<i style="background:linear-gradient(90deg,#00fff5 20px,#00fff2 135px,#54fff1 156px,#aafff0 174px,#fdffef 189px,#ffc9bc 200px,#ff9c91 213px,#ff766d 229px,#ff564f 248px,#ff3833 275px,#ff201b 309px,#ff0a07 357px,#ff0100 385px,#f00 399px)"></i>
<i style="background:linear-gradient(90deg,#00fff8 20px,#01fff6 135px,#4dfff5 154px,#a3fff4 172px,#f0fff4 186px,#fffcf1 189px,#ffcfc5 198px,#ffa9a1 208px,#ff857e 221px,#ff625d 239px,#ff4743 259px,#ff2c28 289px,#ff1311 332px,#ff0100 383px,#f00 401px)"></i>
<i style="background:linear-gradient(90deg,#00fffa 20px,#02fff9 135px,#4ffff9 154px,#abfff9 173px,#fffef7 188px,#ffd4ce 196px,#ffada8 206px,#ff8a86 218px,#ff6764 235px,#ff4a48 255px,#ff2f2d 283px,#ff1514 326px,#ff0100 383px,#f00 402px)"></i>
<i style="background:linear-gradient(90deg,#00fffd 21px,#00fffd 134px,#4dfffd 153px,#99fffd 169px,#f8fffd 186px,#fefffd 187px,#ffc8c6 198px,#ffa09f 209px,#ff7877 225px,#ff5a59 242px,#ff3b3b 268px,#f22 300px,#ff0b0b 349px,#f00 388px,#f00 403px)"></i>
<i style="background:linear-gradient(90deg,#0ff 21px,#01fdff 134px,#4afdff 152px,#a5fdff 171px,#fffbfe 187px,#ffd1d4 195px,#ffa7a9 206px,#ff8385 219px,#ff6062 237px,#ff4446 258px,#ff2b2c 286px,#ff1213 329px,#f00 384px,#f00 404px)"></i>
<i style="background:linear-gradient(90deg,#00fcff 21px,#02faff 134px,#4ff9ff 153px,#a6f8ff 171px,#f4f8ff 185px,#fff7fe 187px,#ffc5cc 197px,#ffa4aa 206px,#ff8388 218px,#ff6064 236px,#ff4346 258px,#ff282b 288px,#ff1012 333px,#ff0001 382px,#f00 405px)"></i>
<i style="background:linear-gradient(90deg,#00faff 21px,#00f6ff 133px,#50f5ff 153px,#abf4ff 172px,#fff3ff 187px,#ffcad5 195px,#ffa1aa 206px,#ff7c84 220px,#ff5d63 237px,#ff4046 259px,#ff272b 289px,#ff1014 330px,#ff0002 380px,#f00 407px)"></i>
<i style="background:linear-gradient(90deg,#00f7ff 22px,#00f2ff 133px,#51f1ff 153px,#a6f0ff 171px,#fef 187px,#ffc3d1 196px,#ff9fab 206px,#ff7c87 219px,#ff5962 238px,#ff3b42 263px,#ff2026 297px,#ff080d 348px,#ff0002 381px,#f00 408px)"></i>
<i style="background:linear-gradient(90deg,#00f4ff 22px,#02efff 133px,#49eeff 151px,#9decff 169px,#edeaff 184px,#ffeaff 187px,#ffbbcd 197px,#ff96a5 208px,#ff7481 222px,#ff5661 239px,#ff3942 264px,#ff2128 295px,#ff0a10 342px,#ff0004 378px,#f00 400px,#f00 409px)"></i>
<i style="background:linear-gradient(90deg,#00f2ff 22px,#00ebff 132px,#3eeaff 148px,#80e9ff 163px,#d6e7ff 180px,#fee6ff 187px,#ffb8ce 197px,#ff96a9 207px,#ff7686 220px,#ff5765 237px,#ff3c48 259px,#ff252e 287px,#ff0e15 330px,#ff0005 374px,#f00 402px,#f00 410px)"></i>
<i style="background:linear-gradient(90deg,#00f0ff 22px,#00e8ff 132px,#5ce6ff 155px,#b1e3ff 173px,#fee1ff 187px,#ffb5ce 197px,#ff8ea4 209px,#ff7082 222px,#ff5261 240px,#ff3643 264px,#ff1d27 298px,#ff070f 346px,#ff0005 375px,#f00 403px,#f00 411px)"></i>
<i style="background:linear-gradient(90deg,#00edff 23px,#02e5ff 132px,#48e2ff 150px,#99e0ff 168px,#e7deff 183px,#feddff 187px,#ffb2cf 197px,#ff8ea7 208px,#ff6e83 222px,#ff5163 239px,#ff3645 263px,#ff1f2b 293px,#ff0812 340px,#ff0007 372px,#f00 402px,#f00 413px)"></i>
<i style="background:linear-gradient(90deg,#00ebff 23px,#00e1ff 131px,#48dfff 150px,#9edcff 169px,#f2d9ff 185px,#fdd9ff 187px,#ffabcb 198px,#ff89a5 209px,#ff687f 224px,#ff4a5e 243px,#ff2e3e 270px,#ff1622 308px,#ff010b 360px,#f00 402px,#f00 414px)"></i>
<i style="background:linear-gradient(90deg,#00e8ff 23px,#00deff 131px,#4ddbff 151px,#a3d8ff 170px,#fdd5ff 187px,#ffa8cc 198px,#ff86a5 209px,#ff6680 224px,#ff495e 243px,#ff2c3e 271px,#ff1725 304px,#ff030e 352px,#ff0006 376px,#f00 407px,#f00 415px)"></i>
<i style="background:linear-gradient(90deg,#00e6ff 23px,#02dbff 131px,#4ed8ff 151px,#9fd4ff 169px,#f1d1ff 185px,#fdd0ff 187px,#ffa1c8 199px,#ff7d9d 212px,#ff5b76 229px,#ff3d53 252px,#ff2234 283px,#ff0c1a 325px,#ff000a 364px,#f00 406px,#f00 416px)"></i>
<i style="background:linear-gradient(90deg,#00e3ff 24px,#00d8ff 130px,#3fd5ff 147px,#8cd1ff 165px,#e6cdff 183px,#fcccff 187px,#ffc1f1 190px,#ff9bc5 200px,#ff7a9e 212px,#ff5d7b 227px,#ff435d 245px,#ff2a3f 271px,#ff1526 304px,#ff010e 355px,#f00 406px,#f00 417px)"></i>
<i style="background:linear-gradient(90deg,#00e1ff 24px,#00d4ff 130px,#54d0ff 152px,#aeccff 172px,#fcc8ff 187px,#ffbdf2 190px,#ff98c5 200px,#ff789f 212px,#ff5e80 225px,#ff4460 243px,#ff2b42 269px,#ff1629 300px,#ff0110 351px,#f00 407px,#f00 419px)"></i>
<i style="background:linear-gradient(90deg,#00dfff 24px,#01d1ff 130px,#55cdff 152px,#a9c9ff 171px,#fcc4ff 187px,#ffbef7 189px,#ff99ca 199px,#ff78a2 211px,#ff597c 227px,#ff3d5a 248px,#ff263e 273px,#ff0e21 314px,#ff000e 357px,#f00 409px,#f00 420px)"></i>
<i style="background:linear-gradient(90deg,#00dcff 24px,#00ceff 129px,#4dcaff 150px,#a0c6ff 169px,#f6c1ff 186px,#ffbffd 188px,#ff9cd2 197px,#ff78a5 210px,#ff597f 226px,#ff4060 244px,#ff2742 270px,#ff1328 303px,#ff0010 352px,#f00 410px,#f00 421px)"></i>
<i style="background:linear-gradient(90deg,#00daff 25px,#00cbff 129px,#5ac6ff 153px,#b3c1ff 173px,#ffbbfd 188px,#ff96cf 198px,#ff78a9 209px,#ff5c86 223px,#ff4265 241px,#ff2743 269px,#ff1026 307px,#f01 351px,#f00 411px,#f00 422px)"></i>
<i style="background:linear-gradient(90deg,#00d8ff 25px,#01c8ff 129px,#53c3ff 151px,#a5beff 170px,#ffb8fe 188px,#ff96d3 197px,#ff78ad 208px,#ff5f8d 220px,#ff446a 238px,#ff2a49 264px,#ff142d 297px,#ff0013 347px,#f00 411px,#f00 423px)"></i>
<i style="background:linear-gradient(90deg,#00d5ff 25px,#00c5ff 128px,#40c1ff 146px,#93bcff 166px,#e0b7ff 182px,#ffb4fe 188px,#ff94d4 197px,#ff73aa 209px,#ff5685 224px,#ff3d63 243px,#ff2443 270px,#ff0d26 309px,#ff0013 349px,#f00 412px,#f00 425px)"></i>
<i style="background:linear-gradient(90deg,#00d3ff 25px,#00c2ff 128px,#58bcff 152px,#afb7ff 172px,#ffb1fe 188px,#ff8ed0 198px,#ff6fa8 210px,#ff5383 225px,#ff375e 247px,#ff1f3f 275px,#ff0a23 315px,#ff0014 347px,#f00 413px,#f00 426px)"></i>
<i style="background:linear-gradient(90deg,#00d1ff 26px,#01bfff 128px,#59b9ff 152px,#a6b4ff 170px,#ffadfe 188px,#ff8bd1 198px,#ff6da8 210px,#ff5082 226px,#ff365f 247px,#ff1e40 275px,#ff0a25 312px,#ff0015 345px,#f00 415px,#f00 427px)"></i>
<i style="background:linear-gradient(90deg,#00ceff 26px,#00beff 122px,#02bcff 128px,#52b7ff 150px,#9db1ff 168px,#efabff 185px,#faf 188px,#ff88d1 198px,#ff6aa9 210px,#ff4e82 226px,#ff335e 248px,#ff1e41 274px,#ff0824 315px,#ff0016 344px,#f00 415px,#f00 428px)"></i>
<i style="background:linear-gradient(90deg,#0cf 26px,#0bf 123px,#00baff 127px,#4bb4ff 148px,#99aeff 167px,#f4a7ff 186px,#ffa6ff 188px,#ff85d2 198px,#ff68a9 210px,#ff497f 228px,#ff305c 250px,#ff173a 283px,#ff031e 327px,#ff0015 348px,#f00 417px,#f00 429px)"></i>
<i style="background:linear-gradient(90deg,#00caff 26px,#01b7ff 127px,#57b0ff 151px,#aba9ff 171px,#ffa3ff 188px,#ff80ce 199px,#ff62a4 212px,#ff4880 228px,#ff305f 248px,#ff1a41 276px,#ff0826 313px,#ff001a 338px,#ff0005 398px,#f00 428px,#f00 430px)"></i>
<i style="background:linear-gradient(90deg,#00c8ff 27px,#02b4ff 127px,#54adff 150px,#a7a7ff 170px,#fe9fff 188px,#ff80d2 198px,#ff62a8 211px,#ff4782 227px,#ff2f60 248px,#ff183f 278px,#ff0422 321px,#ff001a 339px,#ff0006 396px,#f00 427px,#f00 432px)"></i>
<i style="background:linear-gradient(90deg,#00c5ff 27px,#00b5ff 113px,#00b1ff 126px,#51abff 149px,#9aa4ff 167px,#ef9dff 185px,#fe9cff 188px,#ff78cb 200px,#ff569b 216px,#ff386f 238px,#ff2250 262px,#ff1036 290px,#ff001d 332px,#ff0006 397px,#f00 430px,#f00 433px)"></i>
<i style="background:linear-gradient(90deg,#00c3ff 27px,#00b1ff 119px,#01afff 126px,#59a7ff 151px,#aca0ff 171px,#fe99ff 188px,#ff7bd3 198px,#ff5ea9 211px,#ff4483 227px,#ff2c61 248px,#ff1741 277px,#ff0324 319px,#ff001a 340px,#ff0003 410px,#f00 434px)"></i>
<i style="background:linear-gradient(90deg,#00c1ff 27px,#00aeff 120px,#02acff 126px,#52a5ff 149px,#9f9eff 168px,#fd95ff 188px,#ff73cc 200px,#ff56a1 214px,#ff3d7c 231px,#ff265a 254px,#ff113a 286px,#ff0021 326px,#ff000a 386px,#f00 431px,#f00 435px)"></i>
<i style="background:linear-gradient(90deg,#00bfff 28px,#0af 124px,#03a9ff 126px,#57a1ff 150px,#a89aff 170px,#fd92ff 188px,#ff6ec9 201px,#ff4f9a 217px,#ff326f 239px,#ff1b4c 267px,#ff082f 302px,#ff0021 328px,#ff000b 384px,#f00 431px,#f00 436px)"></i>
<i style="background:linear-gradient(90deg,#00bdff 28px,#00a8ff 122px,#04a6ff 126px,#5b9eff 151px,#b196ff 172px,#fd8fff 188px,#ff69c6 202px,#ff4f9d 216px,#ff3373 237px,#ff1e53 261px,#ff0b35 294px,#ff0023 324px,#ff000c 382px,#f00 433px,#f00 438px)"></i>
<i style="background:linear-gradient(90deg,#0bf 28px,#00a5ff 123px,#05a4ff 126px,#589cff 150px,#b193ff 172px,#fd8cff 188px,#ff67c7 202px,#ff4b9b 217px,#ff3172 238px,#ff1b50 264px,#ff0832 299px,#ff0024 323px,#ff000d 380px,#f00 434px,#f00 439px)"></i>
<i style="background:linear-gradient(90deg,#00b9ff 28px,#00a2ff 124px,#4a9aff 146px,#a092ff 168px,#ff87fd 189px,#ff6ed6 198px,#ff55ae 210px,#ff3a84 228px,#ff2360 251px,#ff0d3d 285px,#ff0026 320px,#ff000f 375px,#f00 434px,#f00 439px)"></i>
<i style="background:linear-gradient(90deg,#00b6ff 29px,#00a2ff 116px,#019fff 124px,#5297ff 148px,#b68dff 173px,#ff84fd 189px,#ff69d2 199px,#ff499f 216px,#ff2e73 238px,#ff174f 266px,#ff0531 302px,#ff0027 320px,#f01 370px,#f00 435px,#f00 436px)"></i>
<i style="background:linear-gradient(90deg,#00b4ff 29px,#00a0ff 114px,#029dff 124px,#4f94ff 147px,#9d8cff 167px,#f783ff 187px,#ff81fd 189px,#ff67d3 199px,#ff51af 210px,#ff3785 228px,#ff2161 251px,#ff0b3e 285px,#ff0029 316px,#ff0010 374px,#f00 434px)"></i>
<i style="background:linear-gradient(90deg,#00b2ff 29px,#009cff 119px,#009aff 123px,#5391ff 148px,#b687ff 173px,#ff7efd 189px,#ff5cc5 203px,#ff429b 218px,#ff2b74 238px,#ff1550 266px,#ff0332 302px,#ff0026 323px,#ff000f 378px,#ff0001 431px)"></i>
<i style="background:linear-gradient(90deg,#00b0ff 30px,#09f 121px,#0498ff 124px,#548fff 148px,#a186ff 168px,#ff7bfe 189px,#ff64d7 198px,#ff4db0 210px,#ff3588 227px,#ff1e62 251px,#ff0a3f 285px,#ff002d 311px,#ff0015 362px,#ff0001 429px)"></i>
<i style="background:linear-gradient(90deg,#00aeff 30px,#0098ff 116px,#0295ff 123px,#4a8dff 145px,#9984ff 166px,#ed7bff 185px,#ff78fe 189px,#ff5dd0 200px,#ff42a1 216px,#ff2875 238px,#ff1351 266px,#ff0133 302px,#ff0018 355px,#ff0002 426px)"></i>
<i style="background:linear-gradient(90deg,#00acff 30px,#0095ff 118px,#0093ff 122px,#4e8aff 146px,#a281ff 168px,#f677ff 187px,#ff75fe 189px,#ff57ca 202px,#ff41a4 215px,#ff2674 239px,#ff1253 265px,#ff0237 297px,#ff001e 342px,#ff0008 406px,#ff0003 424px)"></i>
<i style="background:linear-gradient(90deg,#0af 30px,#0092ff 120px,#0490ff 123px,#5287ff 147px,#aa7dff 170px,#ff73ff 189px,#ff5fdc 197px,#ff47b2 210px,#ff328c 226px,#ff1e69 247px,#ff0c49 275px,#ff0032 305px,#ff0017 360px,#ff0004 421px)"></i>
<i style="background:linear-gradient(90deg,#00a8ff 31px,#0090ff 118px,#028eff 122px,#5385ff 147px,#a27bff 168px,#ff70ff 189px,#ff51c7 203px,#ff3a9e 218px,#ff2477 238px,#f15 264px,#ff0037 298px,#ff001d 346px,#ff0006 416px,#ff0005 419px)"></i>
<i style="background:linear-gradient(90deg,#00a6ff 31px,#008eff 117px,#008cff 121px,#5083ff 146px,#9f79ff 167px,#ec6fff 185px,#ff6dff 189px,#ff54d2 200px,#ff3da8 214px,#ff2a85 230px,#ff1661 254px,#ff043f 288px,#ff0034 304px,#ff001b 351px,#ff0006 416px)"></i>
<i style="background:linear-gradient(90deg,#00a4ff 31px,#008cff 116px,#018aff 121px,#5480ff 147px,#ab75ff 170px,#fa6bff 188px,#ff6aff 189px,#ff52d2 200px,#ff3aa6 215px,#ff2178 238px,#ff0f56 264px,#ff0039 297px,#ff001f 343px,#ff0008 411px,#ff0007 413px)"></i>
<i style="background:linear-gradient(90deg,#00a2ff 32px,#0089ff 118px,#0288ff 121px,#517eff 146px,#af72ff 171px,#fe67ff 189px,#ff4ccc 202px,#ff37a4 216px,#ff217a 237px,#ff0f59 262px,#ff003d 292px,#ff0020 341px,#ff0008 411px)"></i>
<i style="background:linear-gradient(90deg,#00a0ff 32px,#0087ff 117px,#0086ff 120px,#4b7cff 144px,#9c72ff 166px,#e768ff 184px,#fe65ff 189px,#ff4acc 202px,#ff33a0 218px,#ff1e79 238px,#ff0d57 264px,#ff003d 293px,#f02 338px,#ff000a 406px,#ff0009 408px)"></i>
<i style="background:linear-gradient(90deg,#009eff 32px,#0085ff 117px,#0483ff 121px,#4f79ff 145px,#a06eff 167px,#f064ff 186px,#fe62ff 189px,#ff4ad0 201px,#ff36aa 214px,#ff2284 232px,#ff1162 255px,#ff0042 287px,#ff0027 329px,#ff0010 387px,#ff000a 406px)"></i>
<i style="background:linear-gradient(90deg,#009cff 32px,#0084ff 113px,#0281ff 120px,#5376ff 146px,#ac6aff 170px,#fe5fff 189px,#ff44ca 203px,#ff31a3 217px,#ff1c7a 238px,#ff0a58 264px,#ff0040 290px,#ff0026 332px,#ff000f 391px,#ff000b 403px)"></i>
<i style="background:linear-gradient(90deg,#009aff 33px,#0081ff 115px,#007fff 119px,#4d75ff 144px,#a469ff 168px,#fd5dff 189px,#ff42ca 203px,#ff2d9f 219px,#ff1b7c 237px,#ff0a5b 262px,#ff0042 288px,#ff0025 334px,#ff000c 401px)"></i>
<i style="background:linear-gradient(90deg,#0098ff 33px,#0080ff 112px,#017dff 119px,#4773ff 142px,#9968ff 165px,#eb5dff 185px,#fd5aff 189px,#ff40cb 203px,#ff2da4 217px,#ff197b 238px,#ff0858 265px,#f04 286px,#ff0027 331px,#ff000e 396px,#ff000e 398px)"></i>
<i style="background:linear-gradient(90deg,#0096ff 33px,#007dff 114px,#027bff 119px,#4b71ff 143px,#9d65ff 166px,#f858ff 188px,#ff56fd 190px,#ff41d2 201px,#ff2fac 214px,#ff1d86 232px,#ff0c64 255px,#ff0047 283px,#ff0029 328px,#f01 388px,#ff000f 396px)"></i>
<i style="background:linear-gradient(90deg,#0094ff 34px,#007cff 111px,#0079ff 118px,#526dff 145px,#a961ff 169px,#f856ff 188px,#ff54fd 190px,#ff3fd2 201px,#ff2caa 215px,#ff177c 238px,#ff0659 265px,#ff0048 283px,#ff002e 320px,#ff0016 374px,#ff0010 393px)"></i>
<i style="background:linear-gradient(90deg,#0092ff 34px,#0078ff 116px,#0476ff 119px,#566aff 146px,#ad5eff 170px,#ff51fd 190px,#ff3fd6 200px,#ff2cad 214px,#ff1a87 232px,#ff0a65 255px,#ff004d 278px,#ff0031 315px,#ff0017 372px,#f01 391px)"></i>
<i style="background:linear-gradient(90deg,#0091ff 34px,#0275ff 118px,#5a68ff 147px,#b15bff 171px,#ff4ffd 190px,#ff3ad0 202px,#ff29ab 215px,#ff147d 238px,#ff045a 265px,#ff004c 279px,#ff002e 321px,#ff0015 379px,#ff0012 388px)"></i>
<i style="background:linear-gradient(90deg,#008eff 35px,#0076ff 110px,#0073ff 117px,#4768ff 141px,#a25bff 167px,#f34fff 187px,#ff4cfe 190px,#ff39d3 201px,#ff26a9 216px,#ff1481 236px,#ff0560 260px,#ff004f 276px,#ff0031 317px,#ff0017 374px,#ff0013 386px)"></i>
<i style="background:linear-gradient(90deg,#008dff 35px,#0171ff 117px,#4e65ff 143px,#a658ff 168px,#f74cff 188px,#ff4afe 190px,#ff37d4 201px,#ff26ac 215px,#ff117e 238px,#ff025b 265px,#ff003d 299px,#f02 347px,#ff0014 383px)"></i>
<i style="background:linear-gradient(90deg,#008bff 35px,#026fff 117px,#5562ff 145px,#ae54ff 170px,#ff48fe 190px,#ff34d1 202px,#ff23aa 216px,#ff1282 236px,#ff0361 260px,#ff004f 278px,#f03 315px,#ff001a 368px,#ff0016 380px)"></i>
<i style="background:linear-gradient(90deg,#0089ff 36px,#006dff 116px,#595fff 146px,#aa53ff 169px,#ff45fe 190px,#ff32d1 202px,#ff20a8 217px,#ff0f7f 238px,#ff005c 265px,#ff003d 300px,#f02 349px,#ff0017 378px)"></i>
<i style="background:linear-gradient(90deg,#0087ff 36px,#006dff 112px,#016bff 116px,#4d5fff 142px,#9f52ff 166px,#ff43ff 190px,#ff33d8 200px,#ff21ad 215px,#ff0e81 237px,#ff0060 262px,#ff0045 290px,#ff002a 333px,#ff0018 375px)"></i>
<i style="background:linear-gradient(90deg,#0085ff 36px,#006bff 112px,#0269ff 116px,#475eff 140px,#9f50ff 166px,#ff41ff 190px,#ff2fd5 201px,#ff1da9 217px,#ff0c80 238px,#ff005f 263px,#ff0040 297px,#ff0023 348px,#ff0019 373px)"></i>
<i style="background:linear-gradient(90deg,#0083ff 37px,#0069ff 112px,#0068ff 115px,#515aff 143px,#a74dff 168px,#ff3eff 190px,#ff2cd2 202px,#ff1ba7 218px,#ff0c82 237px,#ff0062 261px,#ff0045 291px,#ff0027 341px,#ff001b 370px)"></i>
<i style="background:linear-gradient(90deg,#0082ff 37px,#0166ff 115px,#495aff 140px,#954dff 163px,#e540ff 184px,#ff3cff 190px,#ff2ad3 202px,#ff1bac 216px,#ff0a81 238px,#ff0065 259px,#f04 293px,#ff0027 341px,#ff001c 368px)"></i>
<i style="background:linear-gradient(90deg,#0080ff 37px,#0264ff 115px,#4f57ff 142px,#a748ff 168px,#fe3aff 190px,#ff27d0 203px,#ff17a6 219px,#ff0983 237px,#ff0067 257px,#ff0046 291px,#ff0029 338px,#ff001d 365px)"></i>
<i style="background:linear-gradient(90deg,#007eff 37px,#0063ff 112px,#0362ff 115px,#4756ff 139px,#924aff 162px,#ed3aff 186px,#fe37ff 190px,#ff24cd 204px,#ff14a4 220px,#ff067f 240px,#ff0069 256px,#f04 294px,#ff0027 343px,#ff001f 363px)"></i>
<i style="background:linear-gradient(90deg,#007cff 38px,#0160ff 114px,#4a54ff 140px,#9d46ff 165px,#f137ff 187px,#fe35ff 190px,#ff22ce 204px,#ff15a9 218px,#ff0784 237px,#ff006d 253px,#ff0046 292px,#ff002a 338px,#ff0020 360px)"></i>
<i style="background:linear-gradient(90deg,#007aff 38px,#0061ff 108px,#025eff 114px,#4e51ff 141px,#a842ff 168px,#f534ff 188px,#fe33ff 190px,#ff20cb 205px,#ff11a3 221px,#ff0480 240px,#ff006d 254px,#ff004d 284px,#ff0030 327px,#ff0021 358px)"></i>
<i style="background:linear-gradient(90deg,#0079ff 38px,#025cff 114px,#584eff 144px,#a840ff 168px,#fd31ff 190px,#ff20d2 203px,#ff12ac 217px,#ff0485 237px,#ff0071 251px,#ff0051 280px,#f03 322px,#ff0023 355px)"></i>
<i style="background:linear-gradient(90deg,#07f 39px,#015bff 113px,#4f4dff 141px,#a83eff 168px,#ff2efd 191px,#ff1fd5 202px,#ff10aa 218px,#ff0384 238px,#ff0073 250px,#ff0056 275px,#ff0037 316px,#ff0025 352px)"></i>
<i style="background:linear-gradient(90deg,#0075ff 39px,#0259ff 113px,#4a4cff 139px,#973fff 163px,#e930ff 185px,#ff2bfd 191px,#ff1acc 205px,#ff0ca2 222px,#ff007d 243px,#ff005d 269px,#ff003f 304px,#ff0026 350px)"></i>
<i style="background:linear-gradient(90deg,#0073ff 39px,#0059ff 109px,#0257ff 113px,#5648ff 143px,#b038ff 170px,#ff29fd 191px,#ff1bd3 203px,#ff0dab 218px,#ff0188 236px,#ff0064 263px,#ff0046 295px,#ff002a 342px,#ff0028 347px)"></i>
<i style="background:linear-gradient(90deg,#0072ff 40px,#0156ff 112px,#4e48ff 140px,#a538ff 167px,#ff27fd 191px,#ff17cd 205px,#ff0aa5 221px,#ff0084 239px,#ff0062 265px,#ff0045 297px,#ff0029 345px)"></i>
<i style="background:linear-gradient(90deg,#0070ff 40px,#0254ff 112px,#4647ff 137px,#9439ff 162px,#f428ff 188px,#ff25fe 191px,#ff15cd 205px,#ff07a1 223px,#ff0086 238px,#ff0065 263px,#ff004a 291px,#ff002d 337px,#ff002b 342px)"></i>
<i style="background:linear-gradient(90deg,#006eff 41px,#0252ff 112px,#5842ff 143px,#a933ff 168px,#ff23fe 191px,#ff16d4 203px,#ff08aa 219px,#ff008a 236px,#ff006b 258px,#ff0048 294px,#ff002c 340px)"></i>
<i style="background:linear-gradient(90deg,#006cff 41px,#0151ff 111px,#4744ff 137px,#9835ff 163px,#f424ff 188px,#ff21fe 191px,#ff13d1 204px,#ff05a4 222px,#ff008f 233px,#ff006a 259px,#ff004a 292px,#ff002f 335px,#ff002e 337px)"></i>
<i style="background:linear-gradient(90deg,#006bff 41px,#014fff 111px,#593fff 143px,#ad2fff 169px,#ff1ffe 191px,#ff10ce 205px,#ff03a5 222px,#ff0089 237px,#ff0065 264px,#ff0046 298px,#ff002f 335px)"></i>
<i style="background:linear-gradient(90deg,#0069ff 42px,#024dff 111px,#543eff 141px,#a62eff 167px,#ff1dfe 191px,#ff10d2 204px,#ff04ab 219px,#ff0094 231px,#ff0070 255px,#ff004d 290px,#ff0031 332px)"></i>
<i style="background:linear-gradient(90deg,#0067ff 42px,#014cff 110px,#493eff 137px,#8f31ff 160px,#e820ff 185px,#ff1bff 191px,#ff0fd5 203px,#ff03ae 218px,#ff0091 233px,#ff006f 256px,#ff004c 291px,#f03 330px)"></i>
<i style="background:linear-gradient(90deg,#06f 42px,#014aff 110px,#523bff 140px,#a32bff 166px,#ff19ff 191px,#ff0cd2 204px,#ff00a8 221px,#ff0084 241px,#ff0061 269px,#ff0042 305px,#ff0035 327px)"></i>
<i style="background:linear-gradient(90deg,#0064ff 43px,#0248ff 110px,#4d3aff 138px,#962cff 162px,#ef1bff 187px,#ff18ff 191px,#ff0bd3 204px,#ff00a8 221px,#ff0083 242px,#ff0060 270px,#ff0042 306px,#ff0036 325px)"></i>
<i style="background:linear-gradient(90deg,#0062ff 43px,#0147ff 109px,#453aff 135px,#9d29ff 164px,#f717ff 189px,#ff16ff 191px,#ff08cd 206px,#ff00ab 220px,#ff0086 240px,#ff0063 268px,#ff0045 302px,#ff0039 322px)"></i>
<i style="background:linear-gradient(90deg,#0061ff 43px,#0146ff 109px,#5934ff 142px,#ae24ff 169px,#fe14ff 191px,#ff07d1 205px,#ff00b2 217px,#ff008d 236px,#ff0069 263px,#ff004d 292px,#ff003b 319px)"></i>
<i style="background:linear-gradient(90deg,#005fff 44px,#0244ff 109px,#5134ff 139px,#a424ff 166px,#fe12ff 191px,#ff04cb 207px,#ff00b2 217px,#ff0087 240px,#ff0064 268px,#ff0046 302px,#ff003c 317px)"></i>
<i style="background:linear-gradient(90deg,#005dff 44px,#0143ff 108px,#4934ff 136px,#a123ff 165px,#fa11ff 190px,#ff0ffc 192px,#ff03ce 206px,#ff00b1 218px,#ff008e 236px,#ff006c 261px,#ff004d 293px,#ff003f 314px)"></i>
<i style="background:linear-gradient(90deg,#005bff 45px,#0141ff 108px,#5530ff 140px,#a121ff 165px,#fa0fff 190px,#ff0dfc 192px,#ff02cf 206px,#ff00a6 223px,#ff007e 247px,#ff005e 274px,#ff0040 312px)"></i>
<i style="background:linear-gradient(90deg,#005aff 45px,#023fff 108px,#5030ff 138px,#a81eff 167px,#fa0dff 190px,#ff0bfd 192px,#ff01d5 204px,#ff00ad 220px,#ff0087 241px,#ff0064 269px,#ff0045 305px,#ff0043 309px)"></i>
<i style="background:linear-gradient(90deg,#0058ff 45px,#013eff 107px,#4830ff 135px,#a81cff 167px,#ff0afd 192px,#ff00cf 206px,#ff00a1 226px,#ff007c 249px,#ff005c 277px,#f04 307px)"></i>
<i style="background:linear-gradient(90deg,#0057ff 46px,#013dff 107px,#512cff 138px,#a51bff 166px,#ff08fd 192px,#ff00d5 204px,#ff00ac 221px,#ff008b 239px,#ff0067 267px,#ff0048 302px,#ff0047 304px)"></i>
<i style="background:linear-gradient(90deg,#05f 46px,#023bff 107px,#4c2cff 136px,#af17ff 169px,#ff06fd 192px,#ff00dc 202px,#ff00b5 217px,#ff0090 236px,#ff006c 263px,#ff004f 293px,#ff0049 302px)"></i>
<i style="background:linear-gradient(90deg,#0053ff 47px,#003aff 106px,#5229ff 138px,#af15ff 169px,#ff04fd 192px,#ff00dc 202px,#ff00b5 217px,#ff008d 238px,#ff0069 266px,#ff004b 299px)"></i>
<i style="background:linear-gradient(90deg,#0052ff 47px,#0138ff 106px,#5028ff 137px,#b612ff 171px,#ff03fe 192px,#ff00df 201px,#ff00b3 218px,#ff008c 239px,#ff0067 268px,#ff004d 297px)"></i>
<i style="background:linear-gradient(90deg,#0050ff 47px,#0237ff 106px,#4b27ff 135px,#9917ff 162px,#f104ff 188px,#ff01fe 192px,#ff00ce 207px,#ff00a1 227px,#ff007d 250px,#ff005e 278px,#ff0050 294px)"></i>
<i style="background:linear-gradient(90deg,#004fff 48px,#0036ff 105px,#5125ff 137px,#9d14ff 163px,#ea04ff 186px,#ff00fe 192px,#ff00d1 206px,#ff00a8 224px,#ff0087 243px,#ff0065 271px,#ff0053 291px)"></i>
<i style="background:linear-gradient(90deg,#004dff 48px,#0134ff 105px,#5422ff 138px,#b30eff 170px,#fc00ff 191px,#ff00f7 194px,#ff00c7 210px,#ff009e 229px,#ff0076 256px,#f05 289px)"></i>
<i style="background:linear-gradient(90deg,#004bff 49px,#0233ff 105px,#5221ff 137px,#a310ff 165px,#f500ff 189px,#f0f 192px,#ff00db 203px,#ff00b0 220px,#ff0086 244px,#ff0063 274px,#ff0058 286px)"></i>
<i style="background:linear-gradient(90deg,#004aff 49px,#0032ff 104px,#551fff 138px,#a10fff 164px,#ed00ff 187px,#f0f 192px,#ff00d2 206px,#ff00a9 224px,#ff0084 246px,#ff0061 276px,#ff005a 284px)"></i>
<i style="background:linear-gradient(90deg,#0048ff 50px,#0130ff 104px,#581dff 139px,#ad0aff 168px,#e600ff 185px,#f0f 192px,#ff00d8 204px,#ff00ad 222px,#ff0087 244px,#ff0063 274px,#ff005d 281px)"></i>
<i style="background:linear-gradient(90deg,#0047ff 50px,#022fff 104px,#4e1eff 135px,#9e0cff 163px,#df00ff 183px,#f0f 192px,#ff00d0 207px,#ff00a8 225px,#ff0083 247px,#ff005f 279px)"></i>
<i style="background:linear-gradient(90deg,#0045ff 50px,#002eff 103px,#511cff 136px,#aa08ff 167px,#d800ff 181px,#f0f 192px,#f0c 209px,#ff00a8 225px,#ff0082 248px,#ff0062 276px)"></i>
<i style="background:linear-gradient(90deg,#04f 51px,#012cff 103px,#4f1bff 135px,#a408ff 165px,#d100ff 179px,#fe00ff 192px,#f0c 209px,#ff00a4 227px,#ff007f 251px,#ff0065 274px)"></i>
<i style="background:linear-gradient(90deg,#0042ff 51px,#022bff 103px,#4f19ff 135px,#a506ff 165px,#cb00ff 177px,#fe00ff 192px,#f0c 209px,#ff00a1 229px,#ff007a 255px,#ff0068 271px)"></i>
<i style="background:linear-gradient(90deg,#0040ff 52px,#002aff 102px,#5018ff 135px,#9f06ff 163px,#c400ff 175px,#fe00ff 192px,#f0c 209px,#ff00a3 228px,#ff007c 254px,#ff006b 269px)"></i>
<i style="background:linear-gradient(90deg,#003fff 52px,#0128ff 102px,#5316ff 136px,#a802ff 166px,#fe00ff 192px,#ff00ca 210px,#ff00a0 230px,#ff007b 255px,#ff006e 266px)"></i>
<i style="background:linear-gradient(90deg,#003dff 53px,#0227ff 102px,#4e15ff 134px,#a801ff 166px,#fe00ff 192px,#ff00cd 209px,#ff00a2 229px,#ff007a 256px,#ff0071 264px)"></i>
<i style="background:linear-gradient(90deg,#003cff 53px,#0026ff 101px,#5413ff 136px,#ab00ff 167px,#fe00ff 192px,#ff00cd 209px,#ff00a6 227px,#ff0081 251px,#ff0075 261px)"></i>
<i style="background:linear-gradient(90deg,#003bff 53px,#0125ff 101px,#4f12ff 134px,#a300ff 164px,#f600ff 190px,#ff00fd 193px,#ff00cb 210px,#ff00a1 230px,#ff007c 255px,#ff0078 258px)"></i>
<i style="background:linear-gradient(90deg,#0039ff 54px,#0223ff 101px,#4813ff 131px,#9a00ff 161px,#e500ff 185px,#ff00fd 193px,#ff00ce 209px,#ff00a3 229px,#ff007e 254px,#ff007b 256px)"></i>
<i style="background:linear-gradient(90deg,#0038ff 54px,#0222ff 101px,#580eff 137px,#9a00ff 161px,#ef00ff 188px,#ff00fe 193px,#ff00ce 209px,#ff00a8 227px,#ff0086 248px,#ff007f 253px)"></i>
<i style="background:linear-gradient(90deg,#0036ff 55px,#0121ff 100px,#4e0fff 133px,#9400ff 159px,#f200ff 189px,#ff00fe 193px,#ff00d1 208px,#ff00a4 229px,#ff0082 251px)"></i>
<i style="background:linear-gradient(90deg,#0034ff 55px,#0220ff 100px,#510dff 134px,#8f00ff 157px,#de00ff 183px,#ff00fe 193px,#ff00cf 209px,#ff00a6 228px,#ff0087 248px)"></i>
<i style="background:linear-gradient(90deg,#03f 56px,#021eff 100px,#540bff 135px,#8a00ff 155px,#de00ff 183px,#ff00fe 193px,#ff00cf 209px,#ff00a5 229px,#ff008a 246px)"></i>
<i style="background:linear-gradient(90deg,#0031ff 56px,#011dff 99px,#4d0bff 132px,#8700ff 154px,#eb00ff 187px,#ff00fe 193px,#ff00d2 208px,#ff00a7 228px,#ff008f 243px)"></i>
<i style="background:linear-gradient(90deg,#0030ff 57px,#021cff 99px,#4b0aff 131px,#8200ff 152px,#e100ff 184px,#f0f 193px,#ff00d5 207px,#ff00a9 227px,#ff0092 241px)"></i>
<i style="background:linear-gradient(90deg,#002eff 57px,#021bff 99px,#5307ff 134px,#7a00ff 149px,#d100ff 179px,#f0f 193px,#ff00d0 209px,#ff00a6 229px,#ff0097 238px)"></i>
<i style="background:linear-gradient(90deg,#002dff 58px,#011aff 98px,#4c08ff 131px,#7500ff 147px,#cb00ff 177px,#f0f 193px,#ff00d3 208px,#ff00a6 229px,#ff009b 236px)"></i>
<i style="background:linear-gradient(90deg,#002cff 58px,#0219ff 98px,#4a07ff 130px,#7000ff 145px,#c800ff 176px,#f0f 193px,#ff00d3 208px,#f0a 227px,#ff00a0 233px)"></i>
<i style="background:linear-gradient(90deg,#002aff 58px,#0217ff 98px,#5403ff 134px,#7b00ff 149px,#d100ff 179px,#f0f 193px,#ff00d6 207px,#ff00ae 225px,#ff00a5 230px)"></i>
<i style="background:linear-gradient(90deg,#0029ff 59px,#0117ff 97px,#4b04ff 130px,#6e00ff 144px,#c800ff 176px,#fe00ff 193px,#ff00cf 210px,#ff00a9 228px)"></i>
<i style="background:linear-gradient(90deg,#0027ff 59px,#0215ff 97px,#4904ff 129px,#6700ff 141px,#bf00ff 173px,#fe00ff 193px,#ff00cf 210px,#ff00af 225px)"></i>
<i style="background:linear-gradient(90deg,#0026ff 60px,#0214ff 97px,#4c02ff 130px,#9a00ff 160px,#f400ff 190px,#ff00fd 194px,#ff00d4 208px,#ff00b3 223px)"></i>
<i style="background:linear-gradient(90deg,#0024ff 60px,#0113ff 96px,#4a01ff 129px,#9a00ff 160px,#f700ff 191px,#ff00fd 194px,#ff00d2 209px,#ff00ba 220px)"></i>
<i style="background:linear-gradient(90deg,#0023ff 61px,#0212ff 96px,#4800ff 128px,#9d00ff 161px,#fa00ff 192px,#ff00fd 194px,#ff00d0 210px,#ff00be 218px)"></i>
<i style="background:linear-gradient(90deg,#02f 61px,#0211ff 96px,#4b00ff 129px,#9d00ff 161px,#fa00ff 192px,#ff00fd 194px,#ff00d0 210px,#ff00c5 215px)"></i>
<i style="background:linear-gradient(90deg,#0020ff 62px,#0110ff 95px,#4900ff 128px,#9800ff 159px,#ed00ff 188px,#ff00fd 194px,#ff00ce 211px,#ff00ca 213px)"></i>
<i style="background:linear-gradient(90deg,#001fff 62px,#020fff 95px,#4500ff 126px,#9800ff 159px,#f000ff 189px,#ff00fe 194px,#ff00d3 209px,#ff00d1 210px)"></i>
<i style="background:linear-gradient(90deg,#001dff 63px,#020eff 95px,#3c00ff 122px,#9b00ff 160px,#f300ff 190px,#ff00fe 194px,#ff00d6 208px)"></i>
<i style="background:linear-gradient(90deg,#001cff 63px,#010dff 94px,#3a00ff 121px,#9300ff 157px,#ea00ff 187px,#ff00fe 194px,#ff00de 205px)"></i>
<i style="background:linear-gradient(90deg,#001aff 64px,#020cff 94px,#3700ff 119px,#7e00ff 149px,#d0f 183px,#ff00fe 194px,#ff00e4 203px)"></i>
<i style="background:linear-gradient(90deg,#0019ff 65px,#020aff 94px,#30f 117px,#7c00ff 148px,#da00ff 182px,#ff00fe 194px,#ff00ec 200px)"></i>
<i style="background:linear-gradient(90deg,#0017ff 65px,#010aff 93px,#2f00ff 115px,#7c00ff 148px,#c0f 177px,#ff00fe 194px,#ff00f5 197px)"></i>
<i style="background:linear-gradient(90deg,#0016ff 66px,#0109ff 93px,#2b00ff 113px,#7a00ff 147px,#c0f 177px,#f0f 194px,#ff00fb 195px)"></i>
<i style="background:linear-gradient(90deg,#0015ff 66px,#0207ff 93px,#2700ff 111px,#7300ff 144px,#c600ff 175px,#f900ff 192px)"></i>
<i style="background:linear-gradient(90deg,#0013ff 67px,#0107ff 92px,#2100ff 108px,#7300ff 144px,#c600ff 175px,#f300ff 190px)"></i>
<i style="background:linear-gradient(90deg,#0012ff 67px,#0106ff 92px,#2000ff 107px,#6c00ff 141px,#c600ff 175px,#e900ff 187px)"></i>
<i style="background:linear-gradient(90deg,#0010ff 68px,#0204ff 92px,#20f 108px,#7400ff 144px,#c600ff 175px,#e300ff 185px)"></i>
<i style="background:linear-gradient(90deg,#000fff 69px,#0104ff 91px,#1d00ff 105px,#6800ff 139px,#b0f 171px,#da00ff 182px)"></i>
<i style="background:linear-gradient(90deg,#000eff 69px,#0103ff 91px,#1f00ff 106px,#7200ff 143px,#c600ff 175px,#d400ff 180px)"></i>
<i style="background:linear-gradient(90deg,#000cff 70px,#0201ff 91px,#4f00ff 128px,#a500ff 163px,#c0f 177px)"></i>
<i style="background:linear-gradient(90deg,#000bff 70px,#0101ff 90px,#4b00ff 126px,#a500ff 163px,#c600ff 175px)"></i>
<i style="background:linear-gradient(90deg,#0009ff 71px,#0100ff 90px,#5000ff 128px,#a300ff 162px,#be00ff 172px)"></i>
<i style="background:linear-gradient(90deg,#0008ff 72px,#0200ff 90px,#4c00ff 126px,#9e00ff 160px,#b600ff 169px)"></i>
<i style="background:linear-gradient(90deg,#0007ff 72px,#0100ff 89px,#4800ff 124px,#90f 158px,#b100ff 167px)"></i>
<i style="background:linear-gradient(90deg,#0005ff 73px,#0100ff 89px,#5800ff 131px,#a900ff 164px)"></i>
<i style="background:linear-gradient(90deg,#0003ff 74px,#0200ff 89px,#4b00ff 125px,#a100ff 161px,#a400ff 162px)"></i>
<i style="background:linear-gradient(90deg,#0002ff 74px,#0100ff 88px,#5200ff 128px,#9c00ff 159px)"></i>
<i style="background:linear-gradient(90deg,#0001ff 75px,#0100ff 88px,#4e00ff 126px,#9700ff 157px)"></i>
<i style="background:linear-gradient(90deg,#00f 76px,#0200ff 88px,#50f 129px,#9000ff 154px)"></i>
<i style="background:linear-gradient(90deg,#00f 77px,#0100ff 87px,#40f 121px,#8b00ff 152px)"></i>
<i style="background:linear-gradient(90deg,#00f 78px,#0100ff 87px,#5800ff 130px,#8400ff 149px)"></i>
<i style="background:linear-gradient(90deg,#00f 78px,#0200ff 87px,#4700ff 122px,#8000ff 147px)"></i>
<i style="background:linear-gradient(90deg,#00f 79px,#0200ff 87px,#5b00ff 131px,#7900ff 144px)"></i>
<i style="background:linear-gradient(90deg,#00f 80px,#0100ff 86px,#4d00ff 124px,#7500ff 142px)"></i>
<i style="background:linear-gradient(90deg,#00f 81px,#0200ff 86px,#5300ff 127px,#6e00ff 139px)"></i>
<i style="background:linear-gradient(90deg,#00f 82px,#0600ff 88px,#4d00ff 124px,#6800ff 136px)"></i>
<i style="background:linear-gradient(90deg,#00f 83px,#0c00ff 91px,#6100ff 133px,#6400ff 134px)"></i>
<i style="background:linear-gradient(90deg,#00f 84px,#5200ff 126px,#5d00ff 131px)"></i>
<i style="background:linear-gradient(90deg,#0200ff 85px,#5900ff 129px)"></i>
<i style="background:linear-gradient(90deg,#0700ff 87px,#5100ff 125px,#5300ff 126px)"></i>
<i style="background:linear-gradient(90deg,#0900ff 88px,#4f00ff 124px)"></i>
<i style="background:linear-gradient(90deg,#0b00ff 89px,#4a00ff 121px)"></i>
<i style="background:linear-gradient(90deg,#0e00ff 90px,#4600ff 119px)"></i>
<i style="background:linear-gradient(90deg,#1200ff 92px,#4000ff 116px)"></i>
<i style="background:linear-gradient(90deg,#1400ff 93px,#3d00ff 114px)"></i>
<i style="background:linear-gradient(90deg,#1700ff 94px,#3700ff 111px)"></i>
<i style="background:linear-gradient(90deg,#1b00ff 96px,#3200ff 108px)"></i>
<i style="background:linear-gradient(90deg,#2100ff 99px,#2e00ff 106px)"></i>
<div class="dk" style="width:440px;height:424px;background:linear-gradient(158.524deg,rgba(0,0,0,.4) 425.3px,rgba(0,0,0,0.2) 428.1px);clip-path:polygon(evenodd,0px 0px,440px 0px,440px 424px,0px 424px,0px 0px,425.2px 276.1px,101.3px 20.4px,77.8px 400.7px,425.2px 276.1px,0px 0px)"></div>

</div>
<svg class="mk" width="10" height="10"><rect x="418.5" y="269.5" width="12" height="12" fill="none" stroke="#fff" stroke-width="1.15"/><rect x="94.5" y="14.5" width="12" height="12" fill="none" stroke="#fff" stroke-width="1.15"/><rect x="70.5" y="393.5" width="12" height="12" fill="none" stroke="#fff" stroke-width="1.15"/><rect x="80.5" y="243.5" width="12" height="12" fill="none" stroke="#fff" stroke-width="1.15"/><rect x="214.5" y="343.5" width="12" height="12" fill="none" stroke="#fff" stroke-width="1.15"/><rect x="261.5" y="145.5" width="12" height="12" fill="none" stroke="#fff" stroke-width="1.15"/><circle cx="397.4" cy="258.6" r="3.6" fill="#f00" stroke="#000" stroke-width="1.1"/><circle cx="147.7" cy="75.8" r="3.6" fill="#0f0" stroke="#000" stroke-width="1.1"/><circle cx="84.7" cy="394.1" r="3.6" fill="#00f" stroke="#000" stroke-width="1.1"/><circle cx="112.1" cy="255.9" r="3.6" fill="#0ff" stroke="#000" stroke-width="1.1"/><circle cx="204.5" cy="342.2" r="3.6" fill="#f0f" stroke="#000" stroke-width="1.1"/><circle cx="260.1" cy="156.7" r="3.6" fill="#ff0" stroke="#000" stroke-width="1.1"/><rect x="181.3" y="251.7" width="10.4" height="11.4" fill="#dcdcdc" stroke="#000" stroke-width="1.5"/><ellipse cx="186.4" cy="257.5" rx="3.3" ry="3.9" fill="#fff" stroke="#000" stroke-width="1"/></svg>
</div>
<span class="abs w" style="left:653.3px;top:32.9px;font-size:13.2px;letter-spacing:-0.59px;color:#e2e2e2;-webkit-text-stroke:0">CIE</span> <span class="abs w" style="left:676.2px;top:32.9px;font-size:13.2px;letter-spacing:-0.44px;color:#e2e2e2;-webkit-text-stroke:0">1931</span> <span class="abs w" style="left:707.5px;top:32.9px;font-size:13.2px;letter-spacing:-0.59px;color:#e2e2e2;-webkit-text-stroke:0">xy</span>
<div class="abs tk" style="left:473px;top:472.1px;width:5px;height:1.3px"></div>
<div class="abs tl yl" style="left:433.8px;top:467.8px">0</div>
<div class="abs tk" style="left:473px;top:421.7px;width:5px;height:1.3px"></div>
<div class="abs tl yl" style="left:433.8px;top:415.6px">0,1</div>
<div class="abs tk" style="left:473px;top:371.2px;width:5px;height:1.3px"></div>
<div class="abs tl yl" style="left:433.8px;top:365.1px">0,2</div>
<div class="abs tk" style="left:473px;top:320.8px;width:5px;height:1.3px"></div>
<div class="abs tl yl" style="left:433.8px;top:314.7px">0,3</div>
<div class="abs tk" style="left:473px;top:270.3px;width:5px;height:1.3px"></div>
<div class="abs tl yl" style="left:433.8px;top:264.2px">0,4</div>
<div class="abs tk" style="left:473px;top:219.9px;width:5px;height:1.3px"></div>
<div class="abs tl yl" style="left:433.8px;top:213.8px">0,5</div>
<div class="abs tk" style="left:473px;top:169.5px;width:5px;height:1.3px"></div>
<div class="abs tl yl" style="left:433.8px;top:163.4px">0,6</div>
<div class="abs tk" style="left:473px;top:119.0px;width:5px;height:1.3px"></div>
<div class="abs tl yl" style="left:433.8px;top:112.9px">0,7</div>
<div class="abs tk" style="left:473px;top:68.6px;width:5px;height:1.3px"></div>
<div class="abs tl yl" style="left:433.8px;top:62.5px">0,8</div>
<div class="abs tk" style="left:477.5px;top:474px;width:1.3px;height:5px"></div>
<div class="abs tl xl" style="left:458.3px;top:481px">0</div>
<div class="abs tk" style="left:537.5px;top:474px;width:1.3px;height:5px"></div>
<div class="abs tl xl" style="left:518.3px;top:481px">0,1</div>
<div class="abs tk" style="left:597.4px;top:474px;width:1.3px;height:5px"></div>
<div class="abs tl xl" style="left:578.2px;top:481px">0,2</div>
<div class="abs tk" style="left:657.4px;top:474px;width:1.3px;height:5px"></div>
<div class="abs tl xl" style="left:638.2px;top:481px">0,3</div>
<div class="abs tk" style="left:717.3px;top:474px;width:1.3px;height:5px"></div>
<div class="abs tl xl" style="left:698.1px;top:481px">0,4</div>
<div class="abs tk" style="left:777.3px;top:474px;width:1.3px;height:5px"></div>
<div class="abs tl xl" style="left:758.1px;top:481px">0,5</div>
<div class="abs tk" style="left:837.3px;top:474px;width:1.3px;height:5px"></div>
<div class="abs tl xl" style="left:818.1px;top:481px">0,6</div>
<div class="abs tk" style="left:897.2px;top:474px;width:1.3px;height:5px"></div>
<div class="abs tl xl" style="left:878.0px;top:481px">0,7</div>
<div class="abs plot" style="left:978px;top:48px;width:435px;height:426px">
<div class="cie" style="padding-top:9px;width:433px;height:424px;clip-path:polygon(184.2px 410.8px,179.3px 409.8px,178.4px 409px,177.5px 408px,176.4px 406.9px,175.2px 405.6px,173.8px 404.3px,172.4px 402.7px,170.9px 401.1px,169.2px 399.3px,167.4px 397.4px,165.5px 395.4px,163.4px 393.1px,161px 390.7px,158.5px 388px,155.7px 385.2px,152.9px 382.2px,149.8px 379px,146.5px 375.4px,143px 371.5px,139.2px 367.3px,135.2px 362.5px,131px 357.4px,126.6px 351.8px,121.6px 344.9px,116.1px 336.8px,110.1px 327.8px,103.6px 317.3px,96.8px 305.9px,89.8px 293.5px,82.3px 279.6px,74.7px 264.7px,67px 249.1px,59.3px 232.7px,51.5px 215.8px,44px 198.9px,37px 181.9px,30.6px 165px,24.8px 148.7px,19.7px 133.1px,15.1px 118.4px,11.1px 104.5px,7.9px 92.1px,5.3px 80.8px,3.3px 70.5px,1.8px 61.5px,0.9px 53.6px,0.4px 46.5px,0.3px 40.3px,0.7px 34.8px,1.5px 29.9px,2.7px 25.6px,4.2px 22px,6.1px 18.9px,8.2px 16.4px,10.6px 14.4px,13.2px 12.8px,16px 11.6px,19px 10.8px,22.1px 10.3px,25.4px 9.9px,28.7px 9.6px,32.1px 9.5px,35.5px 9.5px,39px 9.5px,42.4px 9.5px,45.9px 9.6px,49.4px 9.8px,53px 10px,56.7px 10.3px,60.4px 10.6px,64.3px 10.9px,68.3px 11.3px,72.4px 11.8px,76.6px 12.2px,80.9px 12.8px,85.4px 13.3px,90px 13.9px,94.8px 14.5px,99.7px 15.2px,104.8px 15.9px,110.1px 16.6px,115.6px 17.4px,121.3px 18.2px,127.1px 19px,133.2px 19.9px,139.5px 20.8px,146px 21.7px,152.7px 22.7px,159.6px 23.7px,166.7px 24.8px,174px 25.8px,181.5px 26.9px,189.2px 28px,197.2px 29.2px,205.3px 30.4px,213.6px 31.6px,222px 32.8px,230.6px 34.1px,239.3px 35.3px,248.1px 36.6px,257px 37.9px,265.8px 39.2px,274.4px 40.5px,282.9px 41.7px,291.4px 43px,299.9px 44.2px,308.2px 45.4px,316.4px 46.6px,324.2px 47.7px,331.7px 48.8px,339px 49.9px,346px 50.9px,352.6px 51.9px,359px 52.8px,365px 53.7px,370.6px 54.5px,376px 55.3px,381px 56px,385.7px 56.7px,390.2px 57.3px,394.4px 58px,398.4px 58.5px,402.2px 59.1px,405.9px 59.6px,409.3px 60.1px,412.6px 60.6px,415.7px 61.1px,418.7px 61.5px,421.4px 61.9px,424px 62.3px,426.3px 62.6px,428.5px 62.9px,430.5px 63.2px,432.4px 63.5px,434.1px 63.7px,434.1px 83.2px)">
<i style="background:linear-gradient(90deg,#0f0 23px,#0f0 54px)"></i>
<i style="background:linear-gradient(90deg,#0f0 17px,#0f0 67px)"></i>
<i style="background:linear-gradient(90deg,#0f0 14px,#0f0 76px)"></i>
<i style="background:linear-gradient(90deg,#0f0 11px,#0f0 84px)"></i>
<i style="background:linear-gradient(90deg,#0f0 10px,#0f0 88px,#0dff00 92px)"></i>
<i style="background:linear-gradient(90deg,#0f0 8px,#02ff00 89px,#28ff00 100px)"></i>
<i style="background:linear-gradient(90deg,#0f0 7px,#02ff00 89px,#42ff00 107px)"></i>
<i style="background:linear-gradient(90deg,#0f0 6px,#02ff00 89px,#46ff00 108px,#5dff00 114px)"></i>
<i style="background:linear-gradient(90deg,#00ff02 5px,#01ff00 89px,#51ff00 111px,#7bff00 121px)"></i>
<i style="background:linear-gradient(90deg,#00ff04 5px,#0f0 35px,#01ff00 89px,#49ff00 109px,#95ff00 127px,#9aff00 128px)"></i>
<i style="background:linear-gradient(90deg,#00ff06 4px,#0f0 40px,#0f0 89px,#4dff00 110px,#95ff00 127px,#bf0 135px)"></i>
<i style="background:linear-gradient(90deg,#00ff08 3px,#0f0 48px,#0f0 89px,#4dff00 110px,#95ff00 127px,#dfff00 142px)"></i>
<i style="background:linear-gradient(90deg,#00ff0a 3px,#0f0 55px,#0f0 89px,#4cff00 110px,#a3ff00 130px,#fffe00 148px,#fff900 149px)"></i>
<i style="background:linear-gradient(90deg,#00ff0c 2px,#0f0 64px,#02ff00 90px,#5cff00 114px,#b2ff00 133px,#fffe00 148px,#ffd600 156px)"></i>
<i style="background:linear-gradient(90deg,#00ff0e 2px,#0f0 71px,#02ff00 90px,#54ff00 112px,#a3ff00 130px,#fffd00 148px,#ffd200 157px,#fb0 163px)"></i>
<i style="background:linear-gradient(90deg,#00ff10 1px,#0f0 81px,#02ff00 90px,#4f0 108px,#8cff00 125px,#f0ff00 145px,#fffd00 148px,#ffd100 157px,#ffa700 169px,#ffa400 170px)"></i>
<i style="background:linear-gradient(90deg,#00ff12 1px,#0f0 88px,#01ff00 90px,#4bff00 110px,#9aff00 128px,#ebff00 144px,#fcff00 147px,#fff200 150px,#ffcd00 158px,#ffa300 170px,#ff9000 177px)"></i>
<i style="background:linear-gradient(90deg,#00ff14 1px,#01ff00 90px,#4bff00 110px,#9aff00 128px,#e6ff00 143px,#fcff00 147px,#fff100 150px,#ffc400 160px,#ff9700 174px,#ff8000 184px)"></i>
<i style="background:linear-gradient(90deg,#00ff15 1px,#00ff05 81px,#00ff02 90px,#4fff00 111px,#9fff00 129px,#ecff00 144px,#fdff00 147px,#ffc800 159px,#ff9f00 171px,#ff7900 187px,#ff7300 190px)"></i>
<i style="background:linear-gradient(90deg,#00ff18 0px,#00ff05 90px,#4bff00 110px,#95ff00 127px,#ecff00 144px,#fdff00 147px,#ffc700 159px,#ff9f00 171px,#ff7d00 185px,#f60 197px)"></i>
<i style="background:linear-gradient(90deg,#00ff19 0px,#00ff0a 81px,#00ff07 90px,#46ff02 109px,#9aff00 128px,#e7ff00 143px,#feff00 147px,#ffcb00 158px,#ffa100 170px,#ff7a00 186px,#ff5b00 204px)"></i>
<i style="background:linear-gradient(90deg,#00ff1b 0px,#00ff0b 87px,#02ff0a 91px,#4eff04 111px,#a4ff00 130px,#edff00 144px,#feff00 147px,#ffd300 156px,#ffad00 166px,#ff8400 181px,#ff5f00 201px,#ff5100 211px)"></i>
<i style="background:linear-gradient(90deg,#00ff1d 0px,#00ff0e 85px,#02ff0c 91px,#52ff06 112px,#a4ff00 130px,#f3ff00 145px,#feff00 147px,#ffce00 157px,#ffa300 169px,#ff7b00 185px,#ff5900 205px,#ff4800 218px)"></i>
<i style="background:linear-gradient(90deg,#00ff1f 0px,#02ff0f 91px,#46ff0a 109px,#8cff05 125px,#df0 141px,#ff0 147px,#ffd200 156px,#ffa600 168px,#ff7f00 183px,#ff5b00 203px,#ff4000 225px)"></i>
<i style="background:linear-gradient(90deg,#00ff21 0px,#00ff12 90px,#0fff11 95px,#5aff0b 114px,#aeff06 132px,#ff0 147px,#ffcd00 157px,#ff9f00 170px,#ff7600 187px,#ff5400 208px,#ff3900 232px)"></i>
<i style="background:linear-gradient(90deg,#00ff23 0px,#01ff14 91px,#49ff0f 110px,#9fff0a 129px,#f4ff04 145px,#fffe04 147px,#ffd100 156px,#ffa500 168px,#ff7e00 183px,#ff5c00 202px,#ff3e00 227px,#ff3400 238px)"></i>
<i style="background:linear-gradient(90deg,#00ff25 0px,#00ff17 91px,#51ff12 112px,#a9ff0c 131px,#fffe07 147px,#ffcc03 157px,#ffa500 168px,#ff8200 181px,#ff5d00 201px,#ff3b00 229px,#ff2e00 245px)"></i>
<i style="background:linear-gradient(90deg,#00ff27 0px,#00ff19 91px,#51ff15 112px,#a4ff10 130px,#f5ff0b 145px,#fffd0a 147px,#ffcc05 157px,#ffa402 168px,#ff7d00 183px,#ff5800 204px,#ff3800 232px,#ff2800 252px)"></i>
<i style="background:linear-gradient(90deg,#00ff29 0px,#00ff1c 91px,#44ff18 109px,#9aff14 128px,#eaff0f 143px,#fffd0e 147px,#ffcb08 157px,#ffa104 169px,#ff7f00 182px,#ff5c00 201px,#ff3e00 226px,#ff2400 257px,#ff2300 259px)"></i>
<i style="background:linear-gradient(90deg,#00ff2b 0px,#02ff1f 92px,#59ff1a 114px,#aeff16 132px,#fcff12 146px,#fff110 149px,#ffc30a 159px,#ff9a05 171px,#ff7401 187px,#ff5200 208px,#ff3600 234px,#ff1e00 266px)"></i>
<i style="background:linear-gradient(90deg,#00ff2d 0px,#02ff21 92px,#59ff1d 114px,#a9ff19 131px,#fcff15 146px,#fff113 149px,#ffc60e 158px,#ffa008 169px,#ff7c04 183px,#ff5a00 202px,#ff3c00 227px,#f20 259px,#ff1a00 273px)"></i>
<i style="background:linear-gradient(90deg,#00ff2f 0px,#02ff24 92px,#40ff21 108px,#82ff1e 123px,#d4ff1a 139px,#fcff19 146px,#fff016 149px,#ffc210 159px,#ff990a 171px,#ff6f04 189px,#ff4c00 212px,#ff2d00 243px,#ff1700 279px)"></i>
<i style="background:linear-gradient(90deg,#00ff31 0px,#01ff27 92px,#54ff23 113px,#a4ff20 130px,#f7ff1c 145px,#fffb1b 147px,#ffc914 157px,#ff9f0d 169px,#ff7b08 183px,#ff5903 202px,#ff3900 229px,#ff1d00 266px,#ff1300 286px)"></i>
<i style="background:linear-gradient(90deg,#0f3 0px,#01ff2a 92px,#54ff26 113px,#9fff23 129px,#fdff20 146px,#ffc917 157px,#ffa110 168px,#ff7d0a 182px,#ff5a05 201px,#ff3c00 226px,#ff2100 259px,#ff0f00 293px)"></i>
<i style="background:linear-gradient(90deg,#00ff35 0px,#00ff2d 92px,#58ff29 114px,#afff26 132px,#feff23 146px,#ffc81a 157px,#ff9e12 169px,#ff760b 185px,#ff5706 203px,#ff3801 229px,#ff1c00 267px,#ff0c00 300px)"></i>
<i style="background:linear-gradient(90deg,#00ff38 0px,#00ff2f 92px,#58ff2c 114px,#afff2a 132px,#feff27 146px,#ffc81d 157px,#ffa015 168px,#ff780e 184px,#ff5808 202px,#ff3902 228px,#ff1e00 263px,#ff0900 307px)"></i>
<i style="background:linear-gradient(90deg,#00ff3a 0px,#00ff32 92px,#42ff30 109px,#95ff2e 127px,#edff2b 143px,#ffff2b 146px,#ffd021 155px,#ffa619 166px,#ff8011 180px,#ff5f0b 197px,#ff4005 221px,#ff2700 249px,#ff0f00 292px,#ff0600 314px)"></i>
<i style="background:linear-gradient(90deg,#00ff3c 0px,#02ff35 93px,#53ff33 113px,#aaff30 131px,#ffff2e 146px,#ffd425 154px,#ffa91c 165px,#ff8415 178px,#ff5d0d 198px,#ff3d06 223px,#ff2000 259px,#ff0900 306px,#ff0300 321px)"></i>
<i style="background:linear-gradient(90deg,#00ff3e 0px,#02ff38 93px,#53ff36 113px,#aaff34 131px,#fffe32 146px,#ffcf27 155px,#ffa51e 166px,#ff7f16 180px,#ff5e0f 197px,#ff3e08 222px,#ff2201 255px,#ff0800 308px,#ff0100 328px)"></i>
<i style="background:linear-gradient(90deg,#00ff40 0px,#01ff3b 93px,#4aff39 111px,#96ff38 127px,#e2ff36 141px,#fffe35 146px,#ffd32c 154px,#ffa822 165px,#ff8319 178px,#ff5c10 198px,#ff3e09 222px,#ff2303 253px,#ff0800 306px,#f00 335px)"></i>
<i style="background:linear-gradient(90deg,#00ff42 0px,#01ff3e 93px,#4eff3c 112px,#a5ff3b 130px,#fffe39 146px,#ffd830 153px,#ffae26 163px,#ff851c 177px,#ff6113 195px,#ff440c 216px,#ff2a06 243px,#f10 285px,#f00 332px,#f00 341px)"></i>
<i style="background:linear-gradient(90deg,#0f4 0px,#01ff41 93px,#4eff40 112px,#9bff3f 128px,#e3ff3e 141px,#fffd3d 146px,#ffd232 154px,#ffa727 165px,#ff821e 178px,#ff5d14 197px,#ff3e0c 221px,#ff2305 252px,#ff0800 305px,#f00 335px,#f00 348px)"></i>
<i style="background:linear-gradient(90deg,#00ff46 0px,#0f4 93px,#49ff43 111px,#96ff42 127px,#e3ff41 141px,#fffd40 146px,#ffd736 153px,#ffad2b 163px,#ff8420 177px,#ff6017 195px,#ff420f 217px,#ff2708 246px,#ff0d01 292px,#f00 333px,#f00 355px)"></i>
<i style="background:linear-gradient(90deg,#00ff48 0px,#00ff47 93px,#49ff46 111px,#96ff46 127px,#e3ff45 141px,#fcff45 145px,#fff041 148px,#ffc435 157px,#ff9c2a 168px,#ff741e 184px,#ff5616 201px,#ff370d 227px,#ff1b06 264px,#ff0400 315px,#f00 337px,#f00 362px)"></i>
<i style="background:linear-gradient(90deg,#00ff4b 0px,#00ff4a 93px,#44ff49 110px,#90ff49 126px,#e4ff49 141px,#fcff49 145px,#fff044 148px,#ffc839 156px,#ffa22e 166px,#ff7a22 181px,#ff5718 200px,#ff390f 225px,#ff2109 254px,#ff0902 301px,#f00 331px,#f00 369px)"></i>
<i style="background:linear-gradient(90deg,#00ff4d 0px,#02ff4d 94px,#4dff4d 112px,#9bff4d 128px,#f0ff4d 143px,#fdff4d 145px,#ffc33b 157px,#ff9b2f 168px,#ff7323 184px,#ff5118 204px,#ff3410 229px,#ff1807 268px,#ff0200 320px,#f00 376px)"></i>
<i style="background:linear-gradient(90deg,#00ff4f 0px,#02ff50 94px,#51ff50 113px,#b0ff50 132px,#fdff51 145px,#ffcb40 155px,#ffa133 166px,#ff7927 181px,#ff561c 200px,#ff3712 226px,#ff1d0a 259px,#ff0502 310px,#f00 333px,#f00 382px)"></i>
<i style="background:linear-gradient(90deg,#00ff51 0px,#01ff53 94px,#51ff53 113px,#abff54 131px,#fdff55 145px,#ffcb44 155px,#ffa437 165px,#ff7f2b 178px,#ff5a1f 197px,#ff3c15 221px,#ff220d 251px,#ff0905 298px,#ff0001 330px,#f00 389px)"></i>
<i style="background:linear-gradient(90deg,#00ff53 0px,#01ff56 94px,#4cff57 112px,#abff58 131px,#feff59 145px,#ffca47 155px,#ffa039 166px,#ff782b 181px,#ff551f 200px,#ff3214 230px,#ff160a 270px,#ff0002 325px,#f00 396px)"></i>
<i style="background:linear-gradient(90deg,#00ff56 0px,#00ff59 94px,#4cff5a 112px,#abff5b 131px,#feff5d 145px,#ffce4c 154px,#ffa33c 165px,#ff7c2f 179px,#ff5b23 196px,#ff3c18 220px,#ff220f 250px,#ff0b07 293px,#ff0003 328px,#f00 403px)"></i>
<i style="background:linear-gradient(90deg,#00ff58 0px,#00ff5c 94px,#50ff5e 113px,#abff5f 131px,#ffff61 145px,#ffd351 153px,#ffa942 163px,#ff8033 177px,#ff5925 197px,#ff3919 222px,#ff1f10 254px,#ff0506 307px,#ff0003 330px,#f00 410px)"></i>
<i style="background:linear-gradient(90deg,#00ff5a 0px,#00ff5f 94px,#42ff61 110px,#abff63 131px,#ffff65 145px,#ffd756 152px,#ffac46 162px,#ff8236 176px,#ff5f29 193px,#ff3e1d 217px,#ff2212 249px,#ff0a09 294px,#ff0005 326px,#f00 399px,#f00 417px)"></i>
<i style="background:linear-gradient(90deg,#00ff5c 0px,#00ff63 94px,#39ff64 108px,#90ff66 126px,#e6ff68 141px,#fffe69 145px,#ffd257 153px,#ffb04a 161px,#ff8c3d 172px,#ff682e 188px,#ff4a23 207px,#ff2816 241px,#ff0f0c 281px,#ff0006 324px,#f00 405px,#f00 424px)"></i>
<i style="background:linear-gradient(90deg,#00ff5f 0px,#02ff66 95px,#54ff68 114px,#a6ff6b 130px,#fffe6d 145px,#ffd65d 152px,#ffab4c 162px,#ff813b 176px,#ff5e2d 193px,#ff3a1e 220px,#ff1e13 254px,#ff0509 305px,#ff0006 326px,#f00 416px,#f00 431px)"></i>
<i style="background:linear-gradient(90deg,#00ff61 1px,#02ff69 95px,#4fff6c 113px,#9bff6e 128px,#fffd71 145px,#ffd15e 153px,#ffaf50 161px,#ff8b42 172px,#ff6733 188px,#ff4926 207px,#ff2618 242px,#ff0d0e 285px,#ff0007 324px,#f00 423px,#f00 433px)"></i>
<i style="background:linear-gradient(90deg,#00ff63 1px,#01ff6c 95px,#4fff6f 113px,#9bff72 128px,#fffd75 145px,#ffd564 152px,#ffaa52 162px,#ff8040 176px,#ff5a2f 195px,#ff3d23 217px,#ff2218 247px,#ff080c 296px,#ff0008 324px,#f00 429px,#f00 433px)"></i>
<i style="background:linear-gradient(90deg,#00ff65 1px,#01ff70 95px,#4fff73 113px,#9bff76 128px,#fbff7a 144px,#fff676 146px,#ffcf65 153px,#ffa351 164px,#ff7d41 177px,#ff5831 196px,#ff3923 220px,#ff1f18 251px,#ff060d 300px,#ff0009 324px,#f00 433px)"></i>
<i style="background:linear-gradient(90deg,#00ff68 1px,#00ff73 95px,#58ff77 115px,#acff7a 131px,#f5ff7e 143px,#fffc7d 145px,#ffd46b 152px,#ffa957 162px,#ff7f44 176px,#ff5933 195px,#ff3b26 218px,#ff221a 246px,#ff0a0f 290px,#ff000a 321px,#f00 433px)"></i>
<i style="background:linear-gradient(90deg,#00ff6a 1px,#00ff76 95px,#45ff7a 111px,#9bff7e 128px,#fcff82 144px,#ffef7b 147px,#ffc568 155px,#ff9e56 165px,#ff7543 180px,#ff5433 198px,#ff3424 224px,#ff1817 261px,#ff010c 313px,#f00 433px)"></i>
<i style="background:linear-gradient(90deg,#00ff6c 1px,#00ff7a 95px,#40ff7d 110px,#9bff82 128px,#f6ff86 143px,#fdff87 144px,#ffc96d 154px,#ff9e58 165px,#ff7c48 177px,#ff5837 195px,#ff3928 219px,#ff1d1b 252px,#ff050f 301px,#ff000c 322px,#ff0001 433px)"></i>
<i style="background:linear-gradient(90deg,#00ff6f 2px,#00ff7d 95px,#32ff80 107px,#80ff84 123px,#d6ff89 138px,#fdff8b 144px,#ffcd73 153px,#ff9d5b 165px,#ff7447 180px,#ff5337 198px,#ff3327 224px,#ff181a 260px,#ff010e 311px,#ff0001 433px)"></i>
<i style="background:linear-gradient(90deg,#00ff71 2px,#02ff81 96px,#57ff86 115px,#a7ff8a 130px,#f0ff8f 142px,#feff90 144px,#ffc874 154px,#ff9d5e 165px,#ff7b4d 177px,#ff593c 194px,#ff392c 218px,#ff1d1e 251px,#ff0411 302px,#ff000e 322px,#ff0002 432px,#ff0002 433px)"></i>
<i style="background:linear-gradient(90deg,#00ff74 2px,#00ff82 88px,#02ff84 96px,#4f8 111px,#90ff8d 126px,#eaff93 141px,#feff94 144px,#ffcc7a 153px,#ffa063 164px,#ff7a4f 177px,#ff553c 196px,#ff372c 220px,#ff1c1f 252px,#ff0512 299px,#ff000f 320px,#ff0003 429px,#ff0002 433px)"></i>
<i style="background:linear-gradient(90deg,#00ff76 2px,#00ff86 91px,#01ff88 96px,#52ff8d 114px,#a1ff92 129px,#f8ff98 143px,#ff9 144px,#ffd180 152px,#ffaa6b 161px,#ff8457 173px,#ff6345 188px,#ff4837 205px,#ff2e29 229px,#ff171d 260px,#f01 312px,#ff0004 422px,#ff0003 433px)"></i>
<i style="background:linear-gradient(90deg,#00ff78 2px,#00ff8a 93px,#01ff8b 96px,#48ff90 112px,#96ff96 127px,#ebff9c 141px,#ffff9d 144px,#ffd084 152px,#ffa96e 161px,#ff7954 177px,#ff5440 196px,#ff342e 222px,#ff1b21 253px,#ff0414 300px,#ff0010 320px,#ff0003 433px)"></i>
<i style="background:linear-gradient(90deg,#00ff7b 2px,#00ff8b 84px,#00ff8f 96px,#56ff95 115px,#a7ff9b 130px,#fffea1 144px,#ffd087 152px,#ffa971 161px,#ff885f 171px,#ff644b 187px,#ff473b 205px,#ff292a 233px,#ff0e1b 275px,#ff0012 314px,#ff0004 433px)"></i>
<i style="background:linear-gradient(90deg,#00ff7d 3px,#00ff90 90px,#00ff92 96px,#51ff99 114px,#a7ffa0 130px,#fffea6 144px,#ffcf8b 152px,#ffa875 161px,#ff7d5c 175px,#ff5545 195px,#ff3633 219px,#ff1a23 253px,#ff0215 304px,#ff0007 408px,#ff0005 433px)"></i>
<i style="background:linear-gradient(90deg,#00ff80 3px,#00ff91 82px,#00ff96 96px,#42ff9b 111px,#96ffa2 127px,#dfffa8 139px,#fffdaa 144px,#ffd492 151px,#ffab7a 160px,#ff8563 172px,#ff6450 186px,#ff453e 206px,#ff252b 237px,#ff0b1c 281px,#ff0014 314px,#ff0006 425px,#ff0005 433px)"></i>
<i style="background:linear-gradient(90deg,#00ff82 3px,#00ff96 87px,#00ff9a 96px,#38ff9f 109px,#85ffa5 124px,#dfffad 139px,#fffdaf 144px,#ffce92 152px,#ffa379 162px,#ff775e 177px,#ff5449 195px,#ff3436 220px,#ff1925 254px,#ff0117 305px,#ff0009 399px,#ff0006 433px)"></i>
<i style="background:linear-gradient(90deg,#00ff85 3px,#00ff96 76px,#02ff9e 97px,#55ffa5 115px,#b3ffae 132px,#fbffb4 143px,#fff6af 145px,#ffc893 153px,#ff9c77 164px,#ff7962 176px,#ff554c 194px,#ff3638 218px,#ff1b28 250px,#ff0319 299px,#ff0015 320px,#ff0008 417px,#ff0006 433px)"></i>
<i style="background:linear-gradient(90deg,#00ff87 3px,#00ff9a 78px,#02ffa1 97px,#4bffa8 113px,#9cffb0 128px,#f4ffb8 142px,#fffcb7 144px,#ffd29d 151px,#ffa681 161px,#ff7b66 175px,#ff534d 195px,#ff373b 217px,#ff1e2b 245px,#ff051c 292px,#ff0017 313px,#ff0009 412px,#ff0007 433px)"></i>
<i style="background:linear-gradient(90deg,#00ff8a 4px,#00ff9d 77px,#01ffa5 97px,#55ffad 115px,#a2ffb5 129px,#eeffbc 141px,#fcffbe 143px,#ffeeb3 146px,#ffc79a 153px,#ff977b 165px,#ff6f61 180px,#ff4e4c 198px,#ff2f38 224px,#ff1628 257px,#ff0019 306px,#ff000a 408px,#ff0007 433px)"></i>
<i style="background:linear-gradient(90deg,#00ff8c 4px,#00ffa1 79px,#01ffa9 97px,#4bffb0 113px,#96ffb8 127px,#e1ffc0 139px,#fcffc3 143px,#ffeeb8 146px,#ffc29b 154px,#ff977e 165px,#ff7366 178px,#ff5251 195px,#ff343d 219px,#ff1c2d 247px,#ff021c 298px,#ff000c 394px,#ff0008 433px)"></i>
<i style="background:linear-gradient(90deg,#00ff8f 4px,#00ffa2 72px,#00ffac 97px,#54ffb6 115px,#a8ffbf 130px,#f6ffc7 142px,#fdffc8 143px,#ffc6a2 153px,#ff9a83 164px,#ff776c 176px,#ff5354 194px,#ff333e 219px,#ff192d 251px,#ff011c 301px,#ff000c 399px,#ff0008 433px)"></i>
<i style="background:linear-gradient(90deg,#00ff91 4px,#00ffa8 79px,#00ffb0 97px,#4affb9 113px,#a2ffc2 129px,#fdffcd 143px,#ffd0ac 151px,#ffab93 159px,#ff8478 171px,#ff6160 186px,#ff434b 205px,#ff2436 235px,#ff0b24 276px,#ff001c 307px,#ff000d 397px,#ff0009 433px)"></i>
<i style="background:linear-gradient(90deg,#00ff94 5px,#0fa 75px,#00ffb4 97px,#40ffbc 111px,#90ffc5 126px,#e2ffcf 139px,#feffd2 143px,#ffcaad 152px,#ffa391 161px,#ff7671 176px,#ff5258 194px,#ff2f3f 222px,#ff162d 255px,#ff001e 303px,#ff000f 385px,#ff000a 433px)"></i>
<i style="background:linear-gradient(90deg,#00ff97 5px,#00ffac 72px,#00ffb8 97px,#3fffc0 111px,#90ffca 126px,#e9ffd4 140px,#feffd7 143px,#ffcfb4 151px,#ffa697 160px,#ff807b 172px,#ff5c62 188px,#ff3d4b 209px,#ff2137 238px,#ff0825 281px,#ff001e 307px,#ff000f 390px,#ff000a 433px)"></i>
<i style="background:linear-gradient(90deg,#0f9 5px,#00ffb2 78px,#02ffbc 98px,#53ffc7 115px,#aeffd2 131px,#ffffdc 143px,#ffceb8 151px,#ffa298 161px,#ff7878 175px,#ff5660 191px,#ff3648 215px,#ff1d36 243px,#ff0524 288px,#ff001e 308px,#ff000e 404px,#ff000b 433px)"></i>
<i style="background:linear-gradient(90deg,#00ff9c 5px,#00ffb3 72px,#02ffc0 98px,#4effca 114px,#9cffd4 128px,#f1ffdf 141px,#ffffe1 143px,#ffd8c4 149px,#ffada4 158px,#ff8787 169px,#ff656d 183px,#ff4555 202px,#ff2b41 226px,#ff1330 258px,#ff0021 302px,#ff0012 379px,#ff000b 433px)"></i>
<i style="background:linear-gradient(90deg,#00ff9f 5px,#00ffb4 67px,#01ffc4 98px,#4effcf 114px,#9cffd9 128px,#eaffe4 140px,#fffee6 143px,#ffcdc0 151px,#ffa9a4 159px,#ff878a 169px,#ff6470 183px,#ff4255 204px,#ff243e 233px,#ff0c2c 271px,#ff0021 304px,#f01 390px,#ff000c 432px)"></i>
<i style="background:linear-gradient(90deg,#00ffa1 6px,#00ffba 72px,#01ffc8 98px,#4dffd3 114px,#a2ffdf 129px,#fffeeb 143px,#ffd7cc 149px,#ffb0ae 157px,#ff868d 169px,#ff6472 183px,#ff4459 202px,#ff2742 229px,#ff0e2f 266px,#ff0023 302px,#ff0014 374px,#ff000d 431px)"></i>
<i style="background:linear-gradient(90deg,#00ffa4 6px,#00ffbc 69px,#0fc 98px,#52ffd8 115px,#a2ffe4 129px,#f2ffef 141px,#fffdef 143px,#ffd1cc 150px,#ffa7ab 159px,#ff808b 171px,#ff5d70 186px,#ff3f57 206px,#ff2341 233px,#ff092c 275px,#ff0023 303px,#ff0012 392px,#ff000d 430px)"></i>
<i style="background:linear-gradient(90deg,#00ffa7 6px,#00ffbd 64px,#00ffd0 98px,#42ffda 112px,#9cffe8 128px,#fafff6 142px,#fffcf4 143px,#ffcbcc 151px,#ff9fa8 161px,#ff7585 175px,#ff5269 192px,#ff3551 214px,#ff1b3c 243px,#ff0127 294px,#ff0016 370px,#ff000e 430px)"></i>
<i style="background:linear-gradient(90deg,#00ffa9 6px,#00ffc3 69px,#00ffd4 98px,#42ffdf 112px,#9cffed 128px,#f3fffa 141px,#fffcf9 143px,#ffd5d9 149px,#ffa6b2 159px,#ff8193 170px,#ff5c74 186px,#ff3b58 208px,#ff1f41 237px,#ff072d 279px,#ff0026 301px,#ff0016 375px,#ff000f 429px)"></i>
<i style="background:linear-gradient(90deg,#00ffac 7px,#00ffc7 70px,#00ffd8 98px,#24ffde 106px,#6dffea 120px,#bcfff7 133px,#fafeff 142px,#fffbfe 143px,#ffcad4 151px,#ffa2b2 160px,#ff7b91 172px,#ff5672 189px,#ff3656 212px,#ff1b40 242px,#ff042c 285px,#ff0025 305px,#ff0014 393px,#ff000f 428px)"></i>
<i style="background:linear-gradient(90deg,#00ffaf 7px,#00ffc8 65px,#02ffdd 99px,#57ffeb 116px,#9cfff6 128px,#ddfdff 138px,#fff4fd 144px,#ffc4d4 152px,#ff9db2 161px,#ff7892 173px,#ff5a77 187px,#ff395b 209px,#ff1f45 236px,#ff0730 277px,#ff0028 300px,#ff0017 376px,#ff0010 427px)"></i>
<i style="background:linear-gradient(90deg,#00ffb2 7px,#00ffcb 64px,#02ffe2 99px,#56fff0 116px,#bbfdff 133px,#fcf1ff 144px,#ffdff0 147px,#ffadc3 157px,#ff89a3 167px,#ff6786 180px,#ff4a6c 196px,#ff2e53 219px,#ff153e 250px,#ff002a 295px,#ff0017 380px,#ff0010 427px)"></i>
<i style="background:linear-gradient(90deg,#00ffb5 7px,#00ffcd 62px,#01ffe6 99px,#51fff4 115px,#9cfdff 128px,#feebff 145px,#ffb9d3 154px,#ff8eac 165px,#ff6b8c 178px,#ff4b70 195px,#ff2d55 219px,#ff133d 253px,#ff002b 295px,#ff0018 378px,#f01 426px)"></i>
<i style="background:linear-gradient(90deg,#00ffb8 8px,#00ffd2 64px,#01ffea 99px,#50fff8 115px,#83fdff 124px,#ffe5ff 146px,#ffb9d7 154px,#ff91b2 164px,#ff6a8f 178px,#ff4970 196px,#ff2b55 221px,#ff123e 254px,#ff002d 294px,#ff001b 366px,#ff0012 425px)"></i>
<i style="background:linear-gradient(90deg,#0fb 8px,#00ffd5 63px,#0fe 99px,#50fffd 115px,#d8e7ff 140px,#ffdefe 147px,#ffb8db 154px,#ff94b9 163px,#ff7198 175px,#ff4f78 192px,#ff335e 213px,#ff1a47 241px,#ff0331 284px,#ff002a 305px,#ff0018 387px,#ff0013 424px)"></i>
<i style="background:linear-gradient(90deg,#00ffbd 8px,#00ffdb 67px,#00fff3 99px,#4afdff 114px,#c9e4ff 138px,#fcdaff 147px,#ffd1f7 149px,#ffa6ce 158px,#ff80aa 169px,#ff5d88 184px,#ff416e 201px,#ff2755 224px,#ff0e3d 260px,#ff002f 294px,#ff001d 362px,#ff0013 423px)"></i>
<i style="background:linear-gradient(90deg,#00ffc0 8px,#00ffdb 61px,#00fff7 99px,#2ffeff 109px,#c5e0ff 138px,#fdd5ff 148px,#ffa1ce 159px,#ff7daa 170px,#ff5a89 185px,#ff3968 207px,#ff1c4d 237px,#ff0536 277px,#ff002f 297px,#ff001d 366px,#ff0014 423px)"></i>
<i style="background:linear-gradient(90deg,#00ffc3 9px,#00ffe1 65px,#00fffc 99px,#24fbff 107px,#b7ddff 136px,#fecfff 149px,#ffa1d1 159px,#ff7cad 170px,#ff5889 186px,#ff386a 207px,#ff1e50 234px,#ff0638 275px,#ff0030 296px,#ff001e 365px,#ff0015 422px)"></i>
<i style="background:linear-gradient(90deg,#00ffc6 9px,#00ffe4 64px,#02fdff 100px,#95dfff 130px,#ffcaff 150px,#ffa4d9 158px,#ff7fb3 169px,#ff5d91 183px,#ff3e72 202px,#ff1f53 232px,#ff083c 270px,#ff0032 294px,#ff0020 358px,#ff0015 421px)"></i>
<i style="background:linear-gradient(90deg,#00ffc9 9px,#00ffe7 63px,#00fdff 95px,#02f9ff 100px,#8df 128px,#ffc4fe 151px,#ffa0d9 159px,#ff7eb6 169px,#ff5f96 182px,#ff437a 198px,#ff2960 220px,#ff1247 251px,#ff0035 289px,#f02 352px,#ff0016 420px)"></i>
<i style="background:linear-gradient(90deg,#00ffcd 10px,#00ffe6 56px,#00feff 90px,#01f4ff 100px,#86d9ff 128px,#fcc1ff 151px,#ffb4f3 154px,#ff94d0 162px,#ff70ab 174px,#ff4f89 190px,#ff336c 210px,#ff1b52 237px,#ff063d 273px,#ff0034 292px,#ff0020 366px,#ff0017 420px)"></i>
<i style="background:linear-gradient(90deg,#00ffcf 10px,#00fff0 65px,#00fdff 86px,#01f0ff 100px,#88d4ff 129px,#fdbcff 152px,#ff90d0 163px,#ff6dab 175px,#ff4b88 192px,#ff326d 211px,#ff1952 239px,#ff033b 279px,#ff0034 297px,#ff0021 363px,#ff0017 419px)"></i>
<i style="background:linear-gradient(90deg,#00ffd2 10px,#00fff3 64px,#00fdff 81px,#00ecff 100px,#86d0ff 129px,#feb7ff 153px,#ff93d7 162px,#ff6fb1 174px,#ff4e8d 190px,#ff2f6c 213px,#ff1550 244px,#ff0039 286px,#ff0025 349px,#ff0018 418px)"></i>
<i style="background:linear-gradient(90deg,#00ffd5 10px,#00fff5 62px,#00fdff 77px,#00e8ff 100px,#7acfff 127px,#ffb3ff 154px,#ff8bd3 164px,#ff67ac 177px,#ff498a 193px,#ff2f6e 213px,#ff1855 239px,#ff033e 277px,#ff0035 298px,#ff0021 370px,#ff0019 417px)"></i>
<i style="background:linear-gradient(90deg,#00ffd9 11px,#00fff6 58px,#00fdff 72px,#00e5ff 100px,#6aceff 124px,#ffadfe 155px,#ff8ad7 164px,#ff6eb7 174px,#ff4f94 189px,#ff3476 208px,#ff1b5b 234px,#ff0642 271px,#ff003a 289px,#ff0027 347px,#ff0019 417px)"></i>
<i style="background:linear-gradient(90deg,#00ffdc 11px,#00fff9 57px,#00fdff 67px,#00e1ff 100px,#3bd4ff 114px,#c6b6ff 144px,#ffa8fd 156px,#ff87d6 165px,#ff68b4 176px,#ff4b92 191px,#ff2f73 212px,#ff1758 239px,#ff023f 279px,#ff002a 339px,#ff001a 416px)"></i>
<i style="background:linear-gradient(90deg,#00ffdf 11px,#00fffc 56px,#00faff 66px,#02dcff 101px,#86c0ff 131px,#fda7ff 156px,#ff7dcf 168px,#ff5fac 180px,#ff418a 197px,#ff256a 221px,#ff0e4f 253px,#ff003d 286px,#ff0028 350px,#ff001b 415px)"></i>
<i style="background:linear-gradient(90deg,#00ffe2 12px,#00fdff 58px,#01d9ff 101px,#91baff 134px,#fea2ff 157px,#ff7cd2 168px,#ff5eaf 180px,#ff3f8b 198px,#ff276e 219px,#ff1053 249px,#ff003f 285px,#ff002b 341px,#ff001c 414px)"></i>
<i style="background:linear-gradient(90deg,#00ffe6 12px,#00fdff 53px,#01d5ff 101px,#7dbaff 130px,#ff9eff 158px,#ff82dd 166px,#ff67bc 176px,#ff4695 193px,#ff2973 216px,#ff1358 244px,#ff0041 283px,#ff002d 337px,#ff001c 414px)"></i>
<i style="background:linear-gradient(90deg,#00ffe9 12px,#00fdff 49px,#00d2ff 101px,#91b2ff 135px,#ff99fe 159px,#ff75d2 170px,#ff59af 182px,#ff3a8a 201px,#ff226d 223px,#ff0d52 254px,#ff0042 283px,#ff002d 339px,#ff001d 413px)"></i>
<i style="background:linear-gradient(90deg,#00ffec 12px,#00fdff 44px,#00ceff 101px,#86b1ff 133px,#fd97ff 159px,#ff6fce 172px,#ff4fa6 187px,#ff3384 206px,#ff1b66 231px,#ff054a 269px,#ff0042 285px,#ff002d 342px,#ff001e 412px)"></i>
<i style="background:linear-gradient(90deg,#00ffef 13px,#00fdff 39px,#00cbff 101px,#7bb0ff 131px,#fe93ff 160px,#ff6fd1 172px,#ff50ab 186px,#ff388c 202px,#ff1f6d 226px,#ff0a52 258px,#f04 282px,#ff002e 342px,#ff001f 411px)"></i>
<i style="background:linear-gradient(90deg,#00fff3 13px,#00fdff 34px,#00c8ff 101px,#79adff 131px,#ff90ff 161px,#ff6ed4 172px,#ff50ad 186px,#ff358b 204px,#ff1d6d 228px,#ff0a54 257px,#ff0045 282px,#ff002e 344px,#ff001f 411px)"></i>
<i style="background:linear-gradient(90deg,#00fff6 13px,#00fdff 30px,#02c4ff 102px,#88a6ff 135px,#ff8cfe 162px,#ff6dd7 172px,#ff51b2 185px,#ff348d 204px,#ff1c6d 229px,#ff0651 263px,#ff0047 282px,#ff0032 334px,#ff0020 410px)"></i>
<i style="background:linear-gradient(90deg,#00fffa 14px,#00fcff 26px,#02c1ff 102px,#9b9fff 140px,#ff88fd 163px,#ff65d0 175px,#ff48a9 190px,#ff2d86 210px,#ff176a 234px,#ff0551 265px,#ff0047 283px,#ff0031 340px,#ff0021 409px)"></i>
<i style="background:linear-gradient(90deg,#00fffd 14px,#00f3ff 34px,#01beff 102px,#88a0ff 136px,#fd86ff 163px,#ff60cd 177px,#ff42a5 193px,#ff2a85 212px,#ff1466 239px,#ff004c 276px,#ff0035 329px,#f02 408px)"></i>
<i style="background:linear-gradient(90deg,#00feff 14px,#00c1ff 95px,#01bbff 102px,#8a9cff 137px,#fe82ff 164px,#ff62d3 176px,#ff47ae 190px,#ff2d8b 209px,#ff176d 234px,#ff0453 266px,#ff004a 282px,#ff0034 335px,#ff0023 407px)"></i>
<i style="background:linear-gradient(90deg,#00fbff 14px,#00beff 95px,#00b8ff 102px,#889aff 137px,#ff7fff 165px,#ff61d6 176px,#ff44ae 191px,#ff2d8d 209px,#ff166e 234px,#ff0151 271px,#ff003a 320px,#ff0027 389px,#ff0023 407px)"></i>
<i style="background:linear-gradient(90deg,#00f7ff 15px,#00b8ff 99px,#00b6ff 102px,#8a96ff 138px,#ff7bfe 166px,#ff5ed6 177px,#ff46b3 190px,#ff2e92 207px,#ff1873 231px,#ff0558 262px,#ff004e 278px,#ff0037 331px,#ff0024 406px)"></i>
<i style="background:linear-gradient(90deg,#00f4ff 15px,#00b3ff 102px,#7199ff 132px,#eb7dff 162px,#ff78fd 167px,#f5c 181px,#ff39a4 198px,#ff2384 218px,#ff0f68 244px,#ff0051 275px,#ff003a 325px,#ff0027 395px,#ff0025 405px)"></i>
<i style="background:linear-gradient(90deg,#00f1ff 15px,#00b5ff 96px,#02afff 103px,#9e8cff 144px,#fd76ff 167px,#ff53cc 182px,#ff37a4 199px,#ff1f82 221px,#ff0961 254px,#ff0052 275px,#ff003a 327px,#ff0026 403px,#ff0026 404px)"></i>
<i style="background:linear-gradient(90deg,#00edff 16px,#00b4ff 94px,#02adff 103px,#8190ff 137px,#fe73ff 168px,#ff54d2 181px,#ff3caf 195px,#ff258d 214px,#ff0f6b 243px,#ff0054 274px,#ff003c 324px,#ff0028 396px,#ff0026 404px)"></i>
<i style="background:linear-gradient(90deg,#00eaff 16px,#00b3ff 92px,#02aaff 103px,#7f8dff 137px,#ff70ff 169px,#ff56d8 180px,#ff3db3 194px,#ff2792 212px,#ff1374 236px,#ff0058 269px,#ff003e 321px,#ff0029 394px,#ff0027 403px)"></i>
<i style="background:linear-gradient(90deg,#00e8ff 16px,#01a8ff 103px,#818aff 138px,#ff6dfe 170px,#ff4fd1 183px,#ff36ab 199px,#ff218b 218px,#ff0d6c 245px,#ff0058 272px,#ff003e 323px,#ff0029 398px,#ff0028 402px)"></i>
<i style="background:linear-gradient(90deg,#00e4ff 17px,#0af 97px,#01a5ff 103px,#8387ff 139px,#ff69fd 171px,#ff4ed4 183px,#ff36af 198px,#ff1f8b 219px,#ff0969 250px,#ff0058 273px,#ff003e 326px,#ff002a 396px,#ff0029 401px)"></i>
<i style="background:linear-gradient(90deg,#00e1ff 17px,#00a9ff 95px,#00a3ff 103px,#8584ff 140px,#fd68ff 171px,#ff47cb 187px,#ff30a7 203px,#ff1780 229px,#ff0463 259px,#ff0058 275px,#ff003e 328px,#ff0029 401px)"></i>
<i style="background:linear-gradient(90deg,#00dfff 17px,#00a1ff 103px,#8382ff 140px,#fe65ff 172px,#ff4bd6 184px,#ff32ad 201px,#ff1b89 223px,#ff0465 258px,#ff005a 274px,#ff003f 328px,#ff002b 398px,#ff002a 400px)"></i>
<i style="background:linear-gradient(90deg,#00dbff 18px,#00a2ff 98px,#009eff 103px,#857fff 141px,#ff62ff 173px,#ff49d6 185px,#ff32b2 200px,#ff1f92 218px,#ff096f 248px,#ff005e 270px,#ff0046 313px,#ff0030 379px,#ff002b 399px)"></i>
<i style="background:linear-gradient(90deg,#00d9ff 18px,#029bff 104px,#9978ff 147px,#ff5ffe 174px,#ff47d6 186px,#ff32b4 200px,#ff1e94 218px,#ff0c76 243px,#ff0060 269px,#ff0049 308px,#ff0032 374px,#ff002c 398px)"></i>
<i style="background:linear-gradient(90deg,#00d6ff 18px,#009cff 100px,#0299ff 104px,#817bff 141px,#ff5cfd 175px,#ff43d3 188px,#ff2eb0 203px,#ff1a90 222px,#ff0770 250px,#ff0061 269px,#ff0048 312px,#ff0031 381px,#ff002d 398px)"></i>
<i style="background:linear-gradient(90deg,#00d4ff 18px,#0197ff 104px,#8e76ff 145px,#fe5bff 175px,#ff40d3 189px,#ff2cb0 204px,#ff188f 224px,#ff0671 251px,#ff0062 269px,#ff0049 312px,#ff0030 387px,#ff002e 397px)"></i>
<i style="background:linear-gradient(90deg,#00d1ff 19px,#0195ff 104px,#7e77ff 141px,#fb59ff 175px,#ff56fc 177px,#ff3ed2 190px,#ff27aa 208px,#ff1389 230px,#ff0068 263px,#ff004f 302px,#ff0038 361px,#ff002e 396px)"></i>
<i style="background:linear-gradient(90deg,#00ceff 19px,#0094ff 102px,#0492ff 105px,#8373ff 143px,#ff56ff 177px,#ff41db 188px,#ff2db8 202px,#ff1995 222px,#ff0673 251px,#f06 267px,#ff004d 308px,#ff0036 369px,#ff002f 395px)"></i>
<i style="background:linear-gradient(90deg,#0cf 19px,#0091ff 104px,#8571ff 144px,#ff53fe 178px,#ff3dd7 190px,#ff26ae 208px,#ff128c 230px,#ff006a 264px,#ff0052 300px,#ff003b 356px,#ff0030 395px)"></i>
<i style="background:linear-gradient(90deg,#00c9ff 20px,#008fff 104px,#7971ff 141px,#ff50fd 179px,#ff34ca 196px,#ff1da0 217px,#ff087c 245px,#ff006a 265px,#ff004f 307px,#ff0038 368px,#ff0031 394px)"></i>
<i style="background:linear-gradient(90deg,#00c7ff 20px,#028cff 105px,#9668ff 150px,#fe4fff 179px,#ff35cf 195px,#ff22ad 211px,#ff118e 231px,#ff006e 262px,#ff0051 305px,#ff0039 367px,#ff0032 393px)"></i>
<i style="background:linear-gradient(90deg,#00c4ff 20px,#028aff 105px,#806bff 144px,#ff4dff 180px,#ff31cc 197px,#ff1ca4 217px,#ff0880 244px,#ff006d 264px,#ff0051 307px,#ff0039 370px,#f03 392px)"></i>
<i style="background:linear-gradient(90deg,#00c1ff 21px,#008aff 102px,#0288ff 105px,#7b6bff 143px,#ff4aff 181px,#ff36d9 193px,#ff23b4 209px,#ff1091 231px,#ff0071 261px,#ff0056 300px,#ff003e 356px,#ff0034 391px)"></i>
<i style="background:linear-gradient(90deg,#00bfff 21px,#0186ff 105px,#8a65ff 148px,#ff48fe 182px,#ff30d1 197px,#ff1cab 215px,#ff0a89 239px,#ff0072 261px,#ff0054 305px,#ff003c 365px,#ff0034 391px)"></i>
<i style="background:linear-gradient(90deg,#00bdff 21px,#0184ff 105px,#8564ff 147px,#ff45fd 183px,#ff2dce 199px,#ff18a6 219px,#ff0786 243px,#ff0074 261px,#ff0059 298px,#ff0041 352px,#ff0035 390px)"></i>
<i style="background:linear-gradient(90deg,#00baff 22px,#0083ff 104px,#0681ff 107px,#975eff 153px,#fe45ff 183px,#ff2ed3 198px,#ff1bad 216px,#ff098c 239px,#ff0076 260px,#ff005a 298px,#ff0041 354px,#ff0036 389px)"></i>
<i style="background:linear-gradient(90deg,#00b8ff 22px,#0081ff 105px,#8560ff 148px,#ff42ff 184px,#ff2bd0 200px,#ff15a5 222px,#ff0483 248px,#ff0075 262px,#ff0057 305px,#ff003e 365px,#ff0037 388px)"></i>
<i style="background:linear-gradient(90deg,#00b6ff 22px,#007fff 105px,#7d60ff 146px,#ff40fe 185px,#ff2cd5 199px,#ff16aa 220px,#ff0689 244px,#ff0079 259px,#ff005c 298px,#ff0043 353px,#ff0038 388px)"></i>
<i style="background:linear-gradient(90deg,#00b4ff 23px,#027dff 106px,#9259ff 153px,#ff3efe 186px,#ff2ad5 200px,#ff15aa 221px,#ff0386 248px,#f07 263px,#ff005c 300px,#ff0043 355px,#ff0039 387px)"></i>
<i style="background:linear-gradient(90deg,#00b2ff 23px,#027bff 106px,#8d58ff 152px,#fe3dff 186px,#ff26d0 203px,#ff12a7 224px,#ff0285 250px,#ff0068 283px,#ff004d 332px,#ff003a 386px)"></i>
<i style="background:linear-gradient(90deg,#00b0ff 23px,#0179ff 106px,#9854ff 156px,#fe3bff 187px,#ff25d2 203px,#ff11a7 225px,#ff0288 249px,#ff006c 279px,#ff0051 325px,#ff003b 385px)"></i>
<i style="background:linear-gradient(90deg,#00adff 24px,#0178ff 106px,#8d55ff 153px,#ff39ff 188px,#ff25d4 203px,#ff10a9 225px,#ff0087 251px,#ff006b 282px,#ff0050 329px,#ff003c 385px)"></i>
<i style="background:linear-gradient(90deg,#00abff 24px,#0176ff 106px,#7f57ff 149px,#ff37fe 189px,#ff23d4 204px,#ff11ae 223px,#ff028d 247px,#ff006f 278px,#ff0052 326px,#ff003d 384px)"></i>
<i style="background:linear-gradient(90deg,#00a9ff 25px,#0074ff 106px,#9350ff 156px,#ff34fe 190px,#ff22d6 204px,#ff10ae 224px,#ff008c 249px,#ff006e 281px,#ff0052 328px,#ff003e 383px)"></i>
<i style="background:linear-gradient(90deg,#00a7ff 25px,#0073ff 106px,#8053ff 150px,#fe34ff 190px,#ff1ecf 208px,#ff0dab 227px,#ff0089 253px,#ff006c 285px,#ff0050 335px,#ff003f 382px)"></i>
<i style="background:linear-gradient(90deg,#00a5ff 25px,#0271ff 107px,#9c4aff 160px,#fe32ff 191px,#ff1fd6 206px,#ff10b4 223px,#ff0295 244px,#ff0071 280px,#f05 326px,#ff003f 382px)"></i>
<i style="background:linear-gradient(90deg,#00a3ff 26px,#026fff 107px,#864eff 153px,#ff30ff 192px,#ff1fd8 206px,#ff0db0 226px,#ff008f 250px,#ff006f 284px,#ff0054 330px,#ff0040 381px)"></i>
<i style="background:linear-gradient(90deg,#00a1ff 26px,#026eff 107px,#8a4bff 155px,#ff2efe 193px,#ff1bd3 209px,#ff0cb0 227px,#ff0092 249px,#ff0071 283px,#ff0054 331px,#ff0041 380px)"></i>
<i style="background:linear-gradient(90deg,#009fff 26px,#016cff 107px,#894aff 155px,#ff2cfe 194px,#ff1bd5 209px,#ff0bb0 228px,#ff0092 250px,#ff0073 282px,#ff0056 329px,#ff0042 379px)"></i>
<i style="background:linear-gradient(90deg,#009dff 27px,#016bff 107px,#8a48ff 156px,#ff2afd 195px,#ff19d5 210px,#ff0ab2 228px,#ff0095 249px,#ff0074 282px,#ff0057 329px,#ff0043 378px)"></i>
<i style="background:linear-gradient(90deg,#009bff 27px,#0169ff 107px,#8049ff 153px,#ff29ff 195px,#ff18d5 211px,#ff09b2 229px,#ff0097 248px,#ff0072 286px,#ff0056 333px,#f04 378px)"></i>
<i style="background:linear-gradient(90deg,#009aff 27px,#0068ff 107px,#8d44ff 158px,#ff27ff 196px,#ff17d7 211px,#ff08b2 230px,#ff009a 247px,#ff0074 285px,#ff0056 335px,#ff0045 377px)"></i>
<i style="background:linear-gradient(90deg,#0098ff 28px,#0067ff 107px,#8645ff 156px,#ff26fe 197px,#ff14d2 214px,#ff05ac 235px,#ff009a 248px,#ff0076 284px,#ff0059 330px,#ff0046 376px)"></i>
<i style="background:linear-gradient(90deg,#0096ff 28px,#0265ff 108px,#9041ff 160px,#ff24fe 198px,#ff16db 211px,#ff06b2 232px,#ff009d 247px,#ff0074 288px,#ff0058 334px,#ff0047 375px)"></i>
<i style="background:linear-gradient(90deg,#0094ff 28px,#0263ff 108px,#7b45ff 153px,#ff22fd 199px,#ff13d6 214px,#ff04af 235px,#ff009e 247px,#ff0075 288px,#ff0059 334px,#ff0048 375px)"></i>
<i style="background:linear-gradient(90deg,#0092ff 29px,#0162ff 108px,#8d3eff 160px,#ff21ff 199px,#ff11d4 216px,#ff03af 236px,#ff009f 248px,#ff0081 275px,#ff0064 315px,#ff004a 372px,#ff0049 374px)"></i>
<i style="background:linear-gradient(90deg,#0091ff 29px,#0161ff 108px,#863fff 158px,#ff20ff 200px,#ff11d8 215px,#ff02b1 236px,#ff0091 261px,#ff0075 291px,#ff0058 339px,#ff004a 373px)"></i>
<i style="background:linear-gradient(90deg,#008fff 30px,#015fff 108px,#823eff 157px,#ff1efe 201px,#ff0fd6 217px,#ff02b4 235px,#ff0091 262px,#ff0073 295px,#ff0056 346px,#ff004b 372px)"></i>
<i style="background:linear-gradient(90deg,#008dff 30px,#005eff 108px,#893bff 160px,#ff1cfe 202px,#ff0fda 216px,#ff01b4 236px,#ff0090 264px,#ff0070 301px,#f05 350px,#ff004c 372px)"></i>
<i style="background:linear-gradient(90deg,#008cff 30px,#005dff 108px,#823cff 158px,#ff1bfd 203px,#ff0cd3 220px,#ff00b0 240px,#ff008d 268px,#ff006f 304px,#f05 352px,#ff004d 371px)"></i>
<i style="background:linear-gradient(90deg,#008aff 31px,#025bff 109px,#8939ff 161px,#ff1aff 203px,#ff0bd5 220px,#ff00b3 239px,#ff0093 264px,#ff0074 298px,#ff0058 347px,#ff004e 370px)"></i>
<i style="background:linear-gradient(90deg,#08f 31px,#025aff 109px,#8a37ff 162px,#ff19ff 204px,#ff0bd7 220px,#ff00b6 238px,#ff0093 265px,#ff0076 297px,#ff0059 346px,#ff004f 369px)"></i>
<i style="background:linear-gradient(90deg,#0087ff 31px,#0259ff 109px,#793aff 156px,#ff17fe 205px,#ff09d7 221px,#ff00b8 238px,#ff0094 265px,#ff0074 301px,#ff0057 352px,#ff0050 369px)"></i>
<i style="background:linear-gradient(90deg,#0085ff 32px,#0158ff 109px,#9232ff 166px,#ff15fd 206px,#ff07d3 224px,#ff00b9 238px,#ff0097 264px,#ff007c 292px,#ff005d 341px,#ff0051 368px)"></i>
<i style="background:linear-gradient(90deg,#0084ff 32px,#0156ff 109px,#8135ff 160px,#fe15ff 206px,#ff04ce 227px,#ff00b9 239px,#ff0096 266px,#f07 300px,#ff005a 349px,#ff0053 367px)"></i>
<i style="background:linear-gradient(90deg,#0082ff 33px,#0155ff 109px,#8533ff 162px,#ff13ff 207px,#ff05d4 225px,#ff00bd 238px,#ff009d 261px,#ff007b 296px,#ff005e 343px,#ff0054 366px)"></i>
<i style="background:linear-gradient(90deg,#0080ff 33px,#0054ff 109px,#9b2cff 171px,#ff12ff 208px,#ff05d8 224px,#ff00c0 237px,#ff009d 262px,#ff007c 296px,#ff005f 343px,#f05 366px)"></i>
<i style="background:linear-gradient(90deg,#007fff 33px,#0253ff 110px,#942dff 169px,#ff10fe 209px,#ff03d4 227px,#ff00be 239px,#ff009a 266px,#ff007e 295px,#ff0060 342px,#ff0056 365px)"></i>
<i style="background:linear-gradient(90deg,#007dff 34px,#0251ff 110px,#8e2dff 167px,#ff0ffd 210px,#ff02d4 228px,#ff00af 250px,#ff008d 279px,#ff006e 319px,#ff0057 364px)"></i>
<i style="background:linear-gradient(90deg,#007cff 34px,#0250ff 110px,#852eff 164px,#fe0eff 210px,#ff01d6 228px,#ff00b5 247px,#ff0095 273px,#f07 307px,#ff005a 358px,#ff0058 363px)"></i>
<i style="background:linear-gradient(90deg,#007bff 34px,#024fff 110px,#7731ff 159px,#ff0dff 211px,#ff00d5 229px,#ff00af 252px,#ff008b 284px,#ff006c 325px,#ff0059 362px)"></i>
<i style="background:linear-gradient(90deg,#0079ff 35px,#014eff 110px,#8a2aff 167px,#ff0cfe 212px,#ff00d5 230px,#ff00af 253px,#ff008a 286px,#ff006a 330px,#ff005a 362px)"></i>
<i style="background:linear-gradient(90deg,#0078ff 35px,#014dff 110px,#862aff 166px,#ff0afe 213px,#ff00d7 230px,#ff00b2 252px,#ff008e 283px,#ff006e 325px,#ff005b 361px)"></i>
<i style="background:linear-gradient(90deg,#0076ff 36px,#014cff 110px,#7b2cff 162px,#ff09fd 214px,#ff00db 229px,#ff00b8 249px,#ff0096 277px,#ff0079 310px,#ff005e 357px,#ff005d 360px)"></i>
<i style="background:linear-gradient(90deg,#0075ff 36px,#004bff 110px,#8b27ff 169px,#ff08ff 214px,#ff00db 230px,#f0b 248px,#ff0098 276px,#ff007a 310px,#ff005e 359px)"></i>
<i style="background:linear-gradient(90deg,#0073ff 36px,#024aff 111px,#8a26ff 169px,#ff07ff 215px,#ff00de 229px,#ff00b8 251px,#ff0094 281px,#ff0076 317px,#ff005f 359px)"></i>
<i style="background:linear-gradient(90deg,#0072ff 37px,#0249ff 111px,#8b25ff 170px,#ff06fe 216px,#ff00e2 228px,#f0b 250px,#ff0097 279px,#f07 317px,#ff0060 358px)"></i>
<i style="background:linear-gradient(90deg,#0071ff 37px,#0248ff 111px,#7928ff 163px,#ff05fe 217px,#ff00e6 227px,#ff00c1 247px,#ff009e 274px,#ff0080 306px,#ff0061 357px)"></i>
<i style="background:linear-gradient(90deg,#006fff 38px,#0147ff 111px,#8b22ff 171px,#ff03fd 218px,#ff00dc 233px,#ff00b8 254px,#ff0097 282px,#ff0079 317px,#ff0063 356px)"></i>
<i style="background:linear-gradient(90deg,#006eff 38px,#0146ff 111px,#8523ff 169px,#ff03ff 218px,#ff00e4 230px,#ff00c1 249px,#ff009d 277px,#ff007c 314px,#ff0063 356px)"></i>
<i style="background:linear-gradient(90deg,#006dff 38px,#0145ff 111px,#8422ff 169px,#ff02ff 219px,#ff00d7 237px,#ff00b0 262px,#ff008e 293px,#ff006e 337px,#ff0065 355px)"></i>
<i style="background:linear-gradient(90deg,#006bff 39px,#0144ff 111px,#7725ff 164px,#ff00fe 220px,#ff00d5 239px,#ff00ab 267px,#ff0085 305px,#ff0068 350px,#f06 354px)"></i>
<i style="background:linear-gradient(90deg,#006aff 39px,#0243ff 112px,#8b1eff 173px,#ff00fe 221px,#ff00d3 241px,#ff00ab 268px,#ff0086 305px,#ff0067 353px)"></i>
<i style="background:linear-gradient(90deg,#0068ff 40px,#0242ff 112px,#8c1dff 174px,#fe00ff 221px,#ff00d1 243px,#f0a 270px,#ff0083 310px,#ff0068 353px)"></i>
<i style="background:linear-gradient(90deg,#0067ff 40px,#0241ff 112px,#841eff 171px,#fc00ff 221px,#ff00fa 224px,#ff00ce 246px,#f0a 271px,#ff0084 310px,#ff006a 352px)"></i>
<i style="background:linear-gradient(90deg,#06f 41px,#0240ff 112px,#7c1fff 168px,#f800ff 220px,#f0f 223px,#ff00d8 241px,#ff00ae 269px,#ff0086 309px,#ff006b 351px)"></i>
<i style="background:linear-gradient(90deg,#0065ff 41px,#013fff 112px,#9418ff 179px,#f300ff 219px,#ff00fc 225px,#ff00ce 248px,#ff00ad 271px,#ff0087 309px,#ff006c 350px)"></i>
<i style="background:linear-gradient(90deg,#0064ff 41px,#013eff 112px,#851bff 173px,#f200ff 219px,#ff00fe 225px,#ff00d8 243px,#ff00ae 271px,#f08 309px,#ff006d 350px)"></i>
<i style="background:linear-gradient(90deg,#0062ff 42px,#013dff 112px,#7b1dff 169px,#ed00ff 218px,#ff00fd 226px,#ff00d3 247px,#ff00ae 272px,#ff0089 309px,#ff006f 349px)"></i>
<i style="background:linear-gradient(90deg,#0061ff 42px,#003dff 112px,#8c17ff 177px,#e900ff 217px,#f0f 226px,#ff00d1 249px,#ff00b1 271px,#ff0086 314px,#ff0070 348px)"></i>
<i style="background:linear-gradient(90deg,#0060ff 43px,#023bff 113px,#8d16ff 178px,#e500ff 216px,#f0f 227px,#ff00d1 250px,#ff00b1 272px,#ff0087 314px,#ff0071 347px)"></i>
<i style="background:linear-gradient(90deg,#005fff 43px,#023aff 113px,#8318ff 174px,#e300ff 216px,#ff00fe 228px,#ff00d2 250px,#ff00ac 277px,#f08 314px,#ff0073 346px)"></i>
<i style="background:linear-gradient(90deg,#005eff 43px,#023aff 113px,#771aff 169px,#df00ff 215px,#ff00fe 229px,#ff00d2 251px,#ff00ac 278px,#ff008a 313px,#ff0074 346px)"></i>
<i style="background:linear-gradient(90deg,#005cff 44px,#0139ff 113px,#8e13ff 180px,#db00ff 214px,#ff00fd 230px,#ff00d0 253px,#ff00ab 280px,#ff008b 313px,#ff0075 345px)"></i>
<i style="background:linear-gradient(90deg,#005cff 44px,#0138ff 113px,#8215ff 175px,#d700ff 213px,#f0f 230px,#ff00da 248px,#ff00b5 273px,#ff0095 303px,#f07 343px,#f07 344px)"></i>
<i style="background:linear-gradient(90deg,#005aff 45px,#0137ff 113px,#8115ff 175px,#d300ff 212px,#f0f 231px,#ff00d7 251px,#ff00b5 274px,#ff0092 307px,#ff0078 343px)"></i>
<i style="background:linear-gradient(90deg,#0059ff 45px,#0137ff 113px,#8214ff 176px,#d200ff 212px,#ff00fe 232px,#ff00d1 255px,#ff00a9 285px,#ff0087 322px,#ff0079 343px)"></i>
<i style="background:linear-gradient(90deg,#0058ff 46px,#0235ff 114px,#900fff 183px,#ce00ff 211px,#ff00fe 233px,#ff00d6 253px,#ff00b0 280px,#ff008b 318px,#ff007a 342px)"></i>
<i style="background:linear-gradient(90deg,#0057ff 46px,#0235ff 114px,#8f0eff 183px,#ca00ff 210px,#f0f 233px,#ff00d4 255px,#ff00ae 283px,#ff008c 318px,#ff007c 341px)"></i>
<i style="background:linear-gradient(90deg,#0056ff 47px,#0234ff 114px,#7f12ff 176px,#c700ff 209px,#f0f 234px,#ff00d4 256px,#ff00ae 284px,#ff008d 318px,#ff007e 340px)"></i>
<i style="background:linear-gradient(90deg,#05f 47px,#0233ff 114px,#910cff 185px,#c700ff 210px,#f0f 235px,#ff00db 253px,#ff00b9 276px,#ff009a 304px,#ff007e 340px)"></i>
<i style="background:linear-gradient(90deg,#0054ff 47px,#0132ff 114px,#920bff 186px,#c400ff 209px,#ff00fe 236px,#ff00d7 256px,#ff00b3 282px,#ff008f 318px,#ff0080 339px)"></i>
<i style="background:linear-gradient(90deg,#0053ff 48px,#0132ff 114px,#7c10ff 176px,#c000ff 208px,#ff00fe 237px,#ff00d7 257px,#ff00b3 283px,#ff0090 318px,#ff0082 338px)"></i>
<i style="background:linear-gradient(90deg,#0052ff 48px,#0131ff 114px,#9409ff 188px,#bd00ff 207px,#f0f 237px,#ff00d5 259px,#ff00ad 289px,#ff008a 327px,#ff0083 337px)"></i>
<i style="background:linear-gradient(90deg,#0050ff 49px,#0230ff 115px,#9508ff 189px,#b900ff 206px,#f0f 238px,#ff00da 257px,#ff00b4 284px,#ff008e 323px,#ff0084 337px)"></i>
<i style="background:linear-gradient(90deg,#0050ff 49px,#022fff 115px,#9806ff 191px,#ba00ff 207px,#ff00fe 239px,#ff00d5 261px,#ff00ad 291px,#ff008b 328px,#ff0086 336px)"></i>
<i style="background:linear-gradient(90deg,#004eff 50px,#022fff 115px,#9b05ff 193px,#b700ff 206px,#ff00fe 240px,#ff00d3 263px,#ff00ac 293px,#ff0089 332px,#ff0087 335px)"></i>
<i style="background:linear-gradient(90deg,#004eff 50px,#022eff 115px,#7e0cff 179px,#b100ff 204px,#ff00fe 241px,#ff00db 259px,#ff00b4 287px,#ff0091 323px,#ff0089 334px)"></i>
<i style="background:linear-gradient(90deg,#004cff 51px,#022dff 115px,#790dff 177px,#ae00ff 203px,#f0f 241px,#ff00d6 263px,#ff00b1 291px,#ff0092 323px,#ff008b 333px)"></i>
<i style="background:linear-gradient(90deg,#004bff 51px,#012dff 115px,#9205ff 190px,#b100ff 205px,#f0f 242px,#ff00d9 262px,#ff00b1 292px,#ff0092 324px,#ff008c 333px)"></i>
<i style="background:linear-gradient(90deg,#004bff 51px,#012cff 115px,#8707ff 185px,#ab00ff 203px,#ff00fe 243px,#ff00d4 266px,#ff00ae 296px,#ff008d 332px)"></i>
<i style="background:linear-gradient(90deg,#0049ff 52px,#012bff 115px,#8607ff 185px,#a600ff 201px,#ff00fe 244px,#ff00d4 267px,#ff00af 296px,#ff008f 331px)"></i>
<i style="background:linear-gradient(90deg,#0049ff 52px,#022aff 116px,#9103ff 191px,#af00ff 206px,#ff00fe 245px,#ff00da 264px,#ff00b2 294px,#ff0091 330px)"></i>
<i style="background:linear-gradient(90deg,#0048ff 53px,#022aff 116px,#8c04ff 189px,#a400ff 201px,#f0f 245px,#ff00d7 267px,#ff00b1 296px,#ff0092 330px)"></i>
<i style="background:linear-gradient(90deg,#0047ff 53px,#0229ff 116px,#8904ff 188px,#a500ff 202px,#ff00fd 247px,#ff00d5 269px,#ff00ad 301px,#ff0093 329px)"></i>
<i style="background:linear-gradient(90deg,#0046ff 54px,#0228ff 116px,#8205ff 185px,#a000ff 200px,#ff00fe 247px,#ff00d2 272px,#ff00ad 302px,#ff0095 328px)"></i>
<i style="background:linear-gradient(90deg,#0045ff 54px,#0128ff 116px,#8f01ff 192px,#ff00fe 248px,#ff00d8 269px,#ff00b1 299px,#ff0097 327px)"></i>
<i style="background:linear-gradient(90deg,#04f 55px,#0127ff 116px,#8a01ff 190px,#ff00fd 249px,#ff00d5 272px,#ff00af 302px,#ff0098 327px)"></i>
<i style="background:linear-gradient(90deg,#0043ff 55px,#0127ff 116px,#8702ff 189px,#ff00fd 250px,#ff00d3 274px,#ff00ac 306px,#ff009a 326px)"></i>
<i style="background:linear-gradient(90deg,#0042ff 56px,#0225ff 117px,#9000ff 194px,#ff00fd 251px,#ff00d6 273px,#ff00ae 305px,#ff009c 325px)"></i>
<i style="background:linear-gradient(90deg,#0041ff 56px,#0225ff 117px,#8b00ff 192px,#ff00fe 251px,#ff00d6 274px,#ff00b3 302px,#ff009d 324px)"></i>
<i style="background:linear-gradient(90deg,#0040ff 57px,#0224ff 117px,#80f 191px,#ff00fe 252px,#ff00d7 274px,#ff00b3 303px,#ff009e 324px)"></i>
<i style="background:linear-gradient(90deg,#003fff 57px,#0224ff 117px,#8700ff 191px,#ff00fd 253px,#ff00d0 280px,#ff00a9 313px,#ff00a0 323px)"></i>
<i style="background:linear-gradient(90deg,#003fff 57px,#0223ff 117px,#7b02ff 185px,#ff00fd 254px,#ff00d7 276px,#ff00b3 305px,#ff00a2 322px)"></i>
<i style="background:linear-gradient(90deg,#003eff 58px,#0123ff 117px,#8500ff 191px,#ff00fd 255px,#ff00da 275px,#ff00b5 304px,#ff00a4 321px)"></i>
<i style="background:linear-gradient(90deg,#003dff 58px,#0122ff 117px,#8100ff 189px,#ff00fe 255px,#ff00d4 280px,#ff00b0 310px,#ff00a5 321px)"></i>
<i style="background:linear-gradient(90deg,#003cff 59px,#0122ff 117px,#8000ff 189px,#ff00fe 256px,#ff00d8 278px,#ff00b3 308px,#ff00a7 320px)"></i>
<i style="background:linear-gradient(90deg,#003bff 59px,#0221ff 118px,#7f00ff 189px,#ff00fd 257px,#ff00d5 281px,#ff00b1 311px,#ff00a9 319px)"></i>
<i style="background:linear-gradient(90deg,#003aff 60px,#0220ff 118px,#7c00ff 188px,#ff00fd 258px,#ff00d5 282px,#ff00b1 312px,#ff00ab 318px)"></i>
<i style="background:linear-gradient(90deg,#0039ff 60px,#021fff 118px,#7a00ff 187px,#f200ff 251px,#ff00fd 259px,#ff00d5 283px,#ff00b1 313px,#ff00ad 317px)"></i>
<i style="background:linear-gradient(90deg,#0038ff 61px,#021fff 118px,#70f 186px,#ff00fe 259px,#ff00d6 283px,#ff00b0 315px,#ff00ae 317px)"></i>
<i style="background:linear-gradient(90deg,#0038ff 61px,#011eff 118px,#7400ff 185px,#ff00fe 260px,#ff00d6 284px,#ff00b0 316px)"></i>
<i style="background:linear-gradient(90deg,#0037ff 62px,#011eff 118px,#7400ff 185px,#f500ff 255px,#ff00fd 261px,#ff00d3 287px,#ff00b2 315px)"></i>
<i style="background:linear-gradient(90deg,#0036ff 62px,#011dff 118px,#7100ff 184px,#f200ff 254px,#ff00fd 262px,#ff00d3 288px,#ff00b4 314px)"></i>
<i style="background:linear-gradient(90deg,#0035ff 63px,#021cff 119px,#6f00ff 183px,#e700ff 249px,#f0f 262px,#ff00da 284px,#ff00b5 314px)"></i>
<i style="background:linear-gradient(90deg,#0035ff 63px,#021cff 119px,#6c00ff 182px,#ef00ff 254px,#ff00fe 263px,#ff00d7 287px,#ff00b7 313px)"></i>
<i style="background:linear-gradient(90deg,#0034ff 64px,#021bff 119px,#6a00ff 181px,#e600ff 250px,#ff00fe 264px,#ff00d8 287px,#ff00ba 312px)"></i>
<i style="background:linear-gradient(90deg,#03f 64px,#021bff 119px,#6900ff 181px,#ec00ff 254px,#ff00fd 265px,#ff00d4 291px,#ff00bc 311px)"></i>
<i style="background:linear-gradient(90deg,#0032ff 65px,#021bff 119px,#60f 180px,#f600ff 260px,#ff00fd 266px,#ff00d5 291px,#ff00bd 311px)"></i>
<i style="background:linear-gradient(90deg,#0031ff 65px,#011aff 119px,#6400ff 179px,#ed00ff 256px,#ff00fe 266px,#ff00d5 292px,#ff00bf 310px)"></i>
<i style="background:linear-gradient(90deg,#0031ff 65px,#011aff 119px,#6200ff 178px,#d0f 248px,#ff00fe 267px,#ff00d6 292px,#ff00c1 309px)"></i>
<i style="background:linear-gradient(90deg,#0030ff 66px,#0119ff 119px,#6100ff 178px,#ec00ff 257px,#ff00fe 268px,#ff00d9 291px,#ff00c3 308px)"></i>
<i style="background:linear-gradient(90deg,#002fff 66px,#0218ff 120px,#5f00ff 177px,#de00ff 250px,#ff00fd 269px,#ff00d3 296px,#ff00c5 308px)"></i>
<i style="background:linear-gradient(90deg,#002eff 67px,#0218ff 120px,#5c00ff 176px,#ef00ff 260px,#ff00fd 270px,#ff00d6 295px,#ff00c7 307px)"></i>
<i style="background:linear-gradient(90deg,#002eff 67px,#0217ff 120px,#5a00ff 175px,#df00ff 252px,#ff00fe 270px,#ff00d4 297px,#ff00c9 306px)"></i>
<i style="background:linear-gradient(90deg,#002dff 68px,#0217ff 120px,#5900ff 175px,#e500ff 256px,#ff00fe 271px,#ff00d7 296px,#f0c 305px)"></i>
<i style="background:linear-gradient(90deg,#002cff 68px,#0116ff 120px,#5700ff 174px,#e000ff 254px,#ff00fe 272px,#ff00d7 297px,#ff00cd 305px)"></i>
<i style="background:linear-gradient(90deg,#002bff 69px,#0116ff 120px,#50f 173px,#d600ff 249px,#ff00fd 273px,#ff00d3 301px,#ff00cf 304px)"></i>
<i style="background:linear-gradient(90deg,#002bff 69px,#0116ff 120px,#5300ff 172px,#c0f 244px,#f0f 273px,#ff00d8 298px,#ff00d1 303px)"></i>
<i style="background:linear-gradient(90deg,#002aff 70px,#0215ff 121px,#5100ff 171px,#d000ff 247px,#ff00fe 274px,#ff00d4 302px)"></i>
<i style="background:linear-gradient(90deg,#0029ff 70px,#0214ff 121px,#5000ff 171px,#d400ff 250px,#ff00fe 275px,#ff00d6 301px)"></i>
<i style="background:linear-gradient(90deg,#0029ff 71px,#0214ff 121px,#4f00ff 171px,#df00ff 257px,#ff00fe 276px,#ff00da 299px,#ff00d8 301px)"></i>
<i style="background:linear-gradient(90deg,#0028ff 71px,#0213ff 121px,#4d00ff 170px,#dc00ff 256px,#ff00fd 277px,#ff00da 300px)"></i>
<i style="background:linear-gradient(90deg,#0027ff 72px,#0213ff 121px,#4b00ff 169px,#d900ff 255px,#f0f 277px,#f0d 299px)"></i>
<i style="background:linear-gradient(90deg,#0027ff 72px,#0113ff 121px,#4900ff 168px,#d100ff 251px,#ff00fe 278px,#ff00df 298px)"></i>
<i style="background:linear-gradient(90deg,#0026ff 73px,#0112ff 121px,#4700ff 167px,#ce00ff 250px,#ff00fe 279px,#ff00e0 298px)"></i>
<i style="background:linear-gradient(90deg,#0025ff 73px,#0211ff 122px,#4700ff 167px,#c100ff 243px,#ff00fe 280px,#ff00e3 297px)"></i>
<i style="background:linear-gradient(90deg,#0024ff 74px,#0211ff 122px,#4500ff 166px,#c000ff 243px,#ff00fd 281px,#ff00e6 296px)"></i>
<i style="background:linear-gradient(90deg,#0024ff 74px,#0211ff 122px,#4300ff 165px,#ba00ff 240px,#f0f 281px,#ff00e8 295px)"></i>
<i style="background:linear-gradient(90deg,#0023ff 75px,#0210ff 122px,#4200ff 165px,#c300ff 246px,#ff00fe 282px,#ff00ea 295px)"></i>
<i style="background:linear-gradient(90deg,#0023ff 75px,#0210ff 122px,#3f00ff 163px,#b800ff 240px,#ff00fe 283px,#ff00ec 294px)"></i>
<i style="background:linear-gradient(90deg,#02f 76px,#020fff 122px,#3e00ff 163px,#c400ff 248px,#ff00fe 284px,#ff00ef 293px)"></i>
<i style="background:linear-gradient(90deg,#0021ff 76px,#010fff 122px,#3c00ff 162px,#c300ff 248px,#ff00fd 285px,#ff00f2 292px)"></i>
<i style="background:linear-gradient(90deg,#0020ff 77px,#010fff 122px,#3c00ff 162px,#b500ff 240px,#f0f 285px,#ff00f3 292px)"></i>
<i style="background:linear-gradient(90deg,#0020ff 77px,#020eff 123px,#3a00ff 161px,#bc00ff 245px,#ff00fe 286px,#ff00f6 291px)"></i>
<i style="background:linear-gradient(90deg,#001fff 78px,#020dff 123px,#3800ff 160px,#b0f 245px,#ff00fe 287px,#ff00f9 290px)"></i>
<i style="background:linear-gradient(90deg,#001fff 78px,#020dff 123px,#3600ff 159px,#ba00ff 245px,#ff00fe 288px,#ff00fc 289px)"></i>
<i style="background:linear-gradient(90deg,#001eff 79px,#020dff 123px,#3400ff 158px,#b900ff 245px,#ff00fd 289px)"></i>
<i style="background:linear-gradient(90deg,#001dff 80px,#020cff 123px,#3500ff 159px,#b800ff 245px,#fe00ff 288px)"></i>
<i style="background:linear-gradient(90deg,#001dff 80px,#010cff 123px,#3200ff 157px,#ac00ff 238px,#fb00ff 287px)"></i>
<i style="background:linear-gradient(90deg,#001cff 81px,#010cff 123px,#3000ff 156px,#b600ff 245px,#f800ff 286px)"></i>
<i style="background:linear-gradient(90deg,#001cff 81px,#020bff 124px,#2e00ff 155px,#bd00ff 250px,#f500ff 285px)"></i>
<i style="background:linear-gradient(90deg,#001bff 82px,#020aff 124px,#2e00ff 155px,#bf00ff 252px,#f400ff 285px)"></i>
<i style="background:linear-gradient(90deg,#001aff 82px,#020aff 124px,#2e00ff 155px,#a500ff 236px,#f100ff 284px)"></i>
<i style="background:linear-gradient(90deg,#001aff 83px,#020aff 124px,#2a00ff 153px,#ba00ff 250px,#e0f 283px)"></i>
<i style="background:linear-gradient(90deg,#0019ff 83px,#0209ff 124px,#2a00ff 153px,#ab00ff 241px,#eb00ff 282px)"></i>
<i style="background:linear-gradient(90deg,#0018ff 84px,#0209ff 124px,#2800ff 152px,#b500ff 248px,#ea00ff 282px)"></i>
<i style="background:linear-gradient(90deg,#0018ff 84px,#0109ff 124px,#2800ff 152px,#ae00ff 244px,#e700ff 281px)"></i>
<i style="background:linear-gradient(90deg,#0017ff 85px,#0108ff 124px,#2800ff 152px,#a100ff 236px,#e500ff 280px)"></i>
<i style="background:linear-gradient(90deg,#0017ff 85px,#0208ff 125px,#2400ff 150px,#af00ff 246px,#e200ff 279px)"></i>
<i style="background:linear-gradient(90deg,#0016ff 86px,#0207ff 125px,#2400ff 150px,#ab00ff 244px,#e100ff 279px)"></i>
<i style="background:linear-gradient(90deg,#0016ff 86px,#0207ff 125px,#2100ff 148px,#a0f 244px,#de00ff 278px)"></i>
<i style="background:linear-gradient(90deg,#0015ff 87px,#0207ff 125px,#2100ff 148px,#9c00ff 235px,#dc00ff 277px)"></i>
<i style="background:linear-gradient(90deg,#0015ff 87px,#0206ff 125px,#20f 149px,#a100ff 239px,#d900ff 276px)"></i>
<i style="background:linear-gradient(90deg,#0014ff 88px,#0106ff 125px,#1f00ff 147px,#9c00ff 236px,#d800ff 276px)"></i>
<i style="background:linear-gradient(90deg,#0013ff 89px,#0106ff 125px,#1d00ff 146px,#a100ff 240px,#d500ff 275px)"></i>
<i style="background:linear-gradient(90deg,#0013ff 89px,#0205ff 126px,#1e00ff 147px,#a600ff 244px,#d300ff 274px)"></i>
<i style="background:linear-gradient(90deg,#0012ff 90px,#0205ff 126px,#1d00ff 146px,#9800ff 235px,#d000ff 273px)"></i>
<i style="background:linear-gradient(90deg,#0012ff 90px,#0204ff 126px,#1f00ff 148px,#a000ff 241px,#ce00ff 272px)"></i>
<i style="background:linear-gradient(90deg,#01f 91px,#0204ff 126px,#1c00ff 146px,#a200ff 243px,#cd00ff 272px)"></i>
<i style="background:linear-gradient(90deg,#01f 91px,#0204ff 126px,#1900ff 144px,#9d00ff 240px,#ca00ff 271px)"></i>
<i style="background:linear-gradient(90deg,#0010ff 92px,#0204ff 126px,#1900ff 144px,#9c00ff 240px,#c800ff 270px)"></i>
<i style="background:linear-gradient(90deg,#000fff 93px,#0103ff 126px,#2100ff 150px,#9a00ff 239px,#c500ff 269px)"></i>
<i style="background:linear-gradient(90deg,#000fff 93px,#0203ff 127px,#1a00ff 145px,#90f 239px,#c400ff 269px)"></i>
<i style="background:linear-gradient(90deg,#000eff 94px,#0202ff 127px,#8900ff 228px,#c200ff 268px)"></i>
<i style="background:linear-gradient(90deg,#000eff 94px,#0202ff 127px,#8b00ff 230px,#c000ff 267px)"></i>
<i style="background:linear-gradient(90deg,#000dff 95px,#0202ff 127px,#8200ff 224px,#bd00ff 266px)"></i>
<i style="background:linear-gradient(90deg,#000dff 95px,#0201ff 127px,#8000ff 223px,#bc00ff 266px)"></i>
<i style="background:linear-gradient(90deg,#000cff 96px,#0201ff 127px,#7e00ff 222px,#ba00ff 265px)"></i>
<i style="background:linear-gradient(90deg,#000cff 97px,#0101ff 127px,#8b00ff 232px,#b800ff 264px)"></i>
<i style="background:linear-gradient(90deg,#000bff 97px,#0101ff 127px,#8900ff 231px,#b500ff 263px)"></i>
<i style="background:linear-gradient(90deg,#000bff 98px,#0200ff 128px,#8b00ff 233px,#b500ff 263px)"></i>
<i style="background:linear-gradient(90deg,#000aff 98px,#0200ff 128px,#8a00ff 233px,#b200ff 262px)"></i>
<i style="background:linear-gradient(90deg,#000aff 99px,#0200ff 128px,#80f 232px,#b000ff 261px)"></i>
<i style="background:linear-gradient(90deg,#0009ff 100px,#0200ff 128px,#8200ff 228px,#ae00ff 260px)"></i>
<i style="background:linear-gradient(90deg,#0009ff 100px,#0200ff 128px,#8000ff 227px,#ad00ff 260px)"></i>
<i style="background:linear-gradient(90deg,#0008ff 101px,#0200ff 128px,#7500ff 219px,#ab00ff 259px)"></i>
<i style="background:linear-gradient(90deg,#0008ff 101px,#0100ff 128px,#8c00ff 237px,#a900ff 258px)"></i>
<i style="background:linear-gradient(90deg,#0007ff 102px,#0100ff 128px,#8100ff 229px,#a700ff 257px)"></i>
<i style="background:linear-gradient(90deg,#0006ff 103px,#0200ff 129px,#9000ff 241px,#a500ff 256px)"></i>
<i style="background:linear-gradient(90deg,#0006ff 103px,#0100ff 128px,#7d00ff 227px,#a400ff 256px)"></i>
<i style="background:linear-gradient(90deg,#0006ff 104px,#00f 126px,#3f00ff 179px,#a200ff 255px)"></i>
<i style="background:linear-gradient(90deg,#0005ff 104px,#00f 127px,#7400ff 221px,#a000ff 254px)"></i>
<i style="background:linear-gradient(90deg,#0005ff 105px,#00f 126px,#0c00ff 138px,#9400ff 246px,#9e00ff 253px)"></i>
<i style="background:linear-gradient(90deg,#0004ff 106px,#00f 128px,#8e00ff 242px,#9d00ff 253px)"></i>
<i style="background:linear-gradient(90deg,#0004ff 106px,#00f 126px,#0e00ff 140px,#9400ff 247px,#9b00ff 252px)"></i>
<i style="background:linear-gradient(90deg,#0003ff 107px,#0200ff 130px,#8e00ff 243px,#90f 251px)"></i>
<i style="background:linear-gradient(90deg,#0003ff 107px,#00f 128px,#7e00ff 231px,#9700ff 250px)"></i>
<i style="background:linear-gradient(90deg,#0002ff 108px,#0200ff 130px,#8500ff 237px,#9600ff 250px)"></i>
<i style="background:linear-gradient(90deg,#0002ff 109px,#0200ff 130px,#7e00ff 232px,#9400ff 249px)"></i>
<i style="background:linear-gradient(90deg,#0001ff 109px,#0200ff 130px,#8000ff 234px,#9200ff 248px)"></i>
<i style="background:linear-gradient(90deg,#0001ff 110px,#0200ff 130px,#7900ff 229px,#9000ff 247px)"></i>
<i style="background:linear-gradient(90deg,#00f 111px,#0100ff 130px,#8a00ff 243px,#9000ff 247px)"></i>
<i style="background:linear-gradient(90deg,#00f 111px,#0200ff 131px,#8c00ff 245px,#8e00ff 246px)"></i>
<i style="background:linear-gradient(90deg,#00f 112px,#0200ff 131px,#8a00ff 244px,#8c00ff 245px)"></i>
<i style="background:linear-gradient(90deg,#00f 113px,#0200ff 131px,#8200ff 238px,#8a00ff 244px)"></i>
<i style="background:linear-gradient(90deg,#00f 113px,#0200ff 131px,#8000ff 237px,#8900ff 244px)"></i>
<i style="background:linear-gradient(90deg,#00f 114px,#0200ff 131px,#7d00ff 235px,#8700ff 243px)"></i>
<i style="background:linear-gradient(90deg,#00f 115px,#0200ff 131px,#7a00ff 233px,#8500ff 242px)"></i>
<i style="background:linear-gradient(90deg,#00f 115px,#0200ff 131px,#70f 231px,#8400ff 241px)"></i>
<i style="background:linear-gradient(90deg,#00f 116px,#0100ff 131px,#8200ff 240px)"></i>
<i style="background:linear-gradient(90deg,#00f 117px,#0200ff 132px,#8100ff 240px)"></i>
<i style="background:linear-gradient(90deg,#00f 117px,#0200ff 132px,#7f00ff 239px)"></i>
<i style="background:linear-gradient(90deg,#00f 118px,#0200ff 132px,#7e00ff 238px)"></i>
<i style="background:linear-gradient(90deg,#00f 119px,#0200ff 132px,#7c00ff 237px)"></i>
<i style="background:linear-gradient(90deg,#00f 120px,#0200ff 132px,#7b00ff 237px)"></i>
<i style="background:linear-gradient(90deg,#00f 120px,#0200ff 132px,#7900ff 236px)"></i>
<i style="background:linear-gradient(90deg,#00f 121px,#0100ff 132px,#7800ff 235px)"></i>
<i style="background:linear-gradient(90deg,#00f 122px,#0200ff 133px,#7600ff 234px)"></i>
<i style="background:linear-gradient(90deg,#00f 122px,#0200ff 133px,#7500ff 234px)"></i>
<i style="background:linear-gradient(90deg,#00f 123px,#0200ff 133px,#7400ff 233px)"></i>
<i style="background:linear-gradient(90deg,#00f 124px,#0200ff 133px,#7200ff 232px)"></i>
<i style="background:linear-gradient(90deg,#00f 125px,#0300ff 134px,#7000ff 231px)"></i>
<i style="background:linear-gradient(90deg,#00f 125px,#0300ff 134px,#7000ff 231px)"></i>
<i style="background:linear-gradient(90deg,#00f 126px,#0200ff 133px,#6e00ff 230px)"></i>
<i style="background:linear-gradient(90deg,#00f 127px,#0200ff 134px,#6d00ff 229px)"></i>
<i style="background:linear-gradient(90deg,#00f 128px,#0400ff 136px,#6b00ff 228px)"></i>
<i style="background:linear-gradient(90deg,#00f 128px,#0400ff 136px,#6900ff 227px)"></i>
<i style="background:linear-gradient(90deg,#00f 129px,#0600ff 138px,#6900ff 227px)"></i>
<i style="background:linear-gradient(90deg,#00f 130px,#2500ff 167px,#6700ff 226px)"></i>
<i style="background:linear-gradient(90deg,#00f 131px,#4800ff 199px,#60f 225px)"></i>
<i style="background:linear-gradient(90deg,#00f 132px,#6400ff 224px)"></i>
<i style="background:linear-gradient(90deg,#00f 133px,#6400ff 224px)"></i>
<i style="background:linear-gradient(90deg,#00f 133px,#6200ff 223px)"></i>
<i style="background:linear-gradient(90deg,#0100ff 134px,#6000ff 222px)"></i>
<i style="background:linear-gradient(90deg,#0200ff 135px,#5f00ff 221px)"></i>
<i style="background:linear-gradient(90deg,#0300ff 136px,#5e00ff 221px)"></i>
<i style="background:linear-gradient(90deg,#0400ff 137px,#5d00ff 220px)"></i>
<i style="background:linear-gradient(90deg,#0500ff 138px,#5b00ff 219px)"></i>
<i style="background:linear-gradient(90deg,#0500ff 138px,#5a00ff 218px)"></i>
<i style="background:linear-gradient(90deg,#0600ff 139px,#5900ff 218px)"></i>
<i style="background:linear-gradient(90deg,#0600ff 140px,#5800ff 217px)"></i>
<i style="background:linear-gradient(90deg,#0700ff 141px,#5600ff 216px)"></i>
<i style="background:linear-gradient(90deg,#0800ff 142px,#50f 215px)"></i>
<i style="background:linear-gradient(90deg,#0900ff 143px,#50f 215px)"></i>
<i style="background:linear-gradient(90deg,#0a00ff 144px,#5300ff 214px)"></i>
<i style="background:linear-gradient(90deg,#0b00ff 145px,#5200ff 213px)"></i>
<i style="background:linear-gradient(90deg,#0c00ff 146px,#5000ff 212px)"></i>
<i style="background:linear-gradient(90deg,#0b00ff 146px,#4f00ff 211px)"></i>
<i style="background:linear-gradient(90deg,#0c00ff 147px,#4e00ff 211px)"></i>
<i style="background:linear-gradient(90deg,#0d00ff 148px,#4d00ff 210px)"></i>
<i style="background:linear-gradient(90deg,#0e00ff 149px,#4c00ff 209px)"></i>
<i style="background:linear-gradient(90deg,#0f00ff 150px,#4a00ff 208px)"></i>
<i style="background:linear-gradient(90deg,#1000ff 151px,#4a00ff 208px)"></i>
<i style="background:linear-gradient(90deg,#10f 152px,#4900ff 207px)"></i>
<i style="background:linear-gradient(90deg,#10f 153px,#4700ff 206px)"></i>
<i style="background:linear-gradient(90deg,#1200ff 154px,#4600ff 205px)"></i>
<i style="background:linear-gradient(90deg,#1300ff 155px,#4500ff 205px)"></i>
<i style="background:linear-gradient(90deg,#1400ff 156px,#40f 204px)"></i>
<i style="background:linear-gradient(90deg,#1500ff 157px,#4300ff 203px)"></i>
<i style="background:linear-gradient(90deg,#1500ff 158px,#4100ff 202px)"></i>
<i style="background:linear-gradient(90deg,#1600ff 159px,#4100ff 202px)"></i>
<i style="background:linear-gradient(90deg,#1700ff 160px,#4000ff 201px)"></i>
<i style="background:linear-gradient(90deg,#1800ff 161px,#3e00ff 200px)"></i>
<i style="background:linear-gradient(90deg,#1900ff 162px,#3d00ff 199px)"></i>
<i style="background:linear-gradient(90deg,#1900ff 163px,#3d00ff 199px)"></i>
<i style="background:linear-gradient(90deg,#1a00ff 164px,#3c00ff 198px)"></i>
<i style="background:linear-gradient(90deg,#1b00ff 165px,#3a00ff 197px)"></i>
<i style="background:linear-gradient(90deg,#1c00ff 166px,#3900ff 196px)"></i>
<i style="background:linear-gradient(90deg,#1c00ff 167px,#3800ff 195px)"></i>
<i style="background:linear-gradient(90deg,#1c00ff 167px,#3700ff 195px)"></i>
<i style="background:linear-gradient(90deg,#1d00ff 168px,#3600ff 194px)"></i>
<i style="background:linear-gradient(90deg,#1e00ff 169px,#3500ff 193px)"></i>
<i style="background:linear-gradient(90deg,#1f00ff 170px,#3400ff 192px)"></i>
<i style="background:linear-gradient(90deg,#1f00ff 171px,#30f 192px)"></i>
<i style="background:linear-gradient(90deg,#2000ff 172px,#3200ff 191px)"></i>
<i style="background:linear-gradient(90deg,#2100ff 173px,#3100ff 190px)"></i>
<i style="background:linear-gradient(90deg,#2100ff 174px,#3000ff 189px)"></i>
<i style="background:linear-gradient(90deg,#20f 175px,#3000ff 189px)"></i>
<i style="background:linear-gradient(90deg,#2300ff 176px,#2e00ff 188px)"></i>
<i style="background:linear-gradient(90deg,#2400ff 177px,#2d00ff 187px)"></i>
<i style="background:linear-gradient(90deg,#2500ff 179px,#2c00ff 186px)"></i>
<div class="dk" style="width:433px;height:424px;background:linear-gradient(127.283deg,rgba(0,0,0,.4) 394.1px,rgba(0,0,0,0.25) 395.4px);clip-path:polygon(evenodd,0px 0px,433px 0px,433px 424px,0px 424px,0px 0px,403.3px 58.1px,39.3px 8.1px,114.6px 335.1px,403.3px 58.1px,0px 0px)"></div>

</div>
<svg class="mk" width="10" height="10"><rect x="396.5" y="51.5" width="12" height="12" fill="none" stroke="#fff" stroke-width="1.15"/><rect x="33.5" y="1.5" width="12" height="12" fill="none" stroke="#fff" stroke-width="1.15"/><rect x="108.5" y="327.5" width="12" height="12" fill="none" stroke="#fff" stroke-width="1.15"/><rect x="54.5" y="96.5" width="12" height="12" fill="none" stroke="#fff" stroke-width="1.15"/><rect x="256.5" y="184.5" width="12" height="12" fill="none" stroke="#fff" stroke-width="1.15"/><rect x="143.5" y="16.5" width="12" height="12" fill="none" stroke="#fff" stroke-width="1.15"/><circle cx="343.1" cy="51.5" r="3.6" fill="#f00" stroke="#000" stroke-width="1.1"/><circle cx="65.5" cy="16.3" r="3.6" fill="#0f0" stroke="#000" stroke-width="1.1"/><circle cx="120.3" cy="315.1" r="3.6" fill="#00f" stroke="#000" stroke-width="1.1"/><circle cx="81.5" cy="103.5" r="3.6" fill="#0ff" stroke="#000" stroke-width="1.1"/><circle cx="232.7" cy="182.1" r="3.6" fill="#f0f" stroke="#000" stroke-width="1.1"/><circle cx="147.6" cy="26.3" r="3.6" fill="#ff0" stroke="#000" stroke-width="1.1"/><rect x="136.5" y="86.6" width="11.1" height="11.1" fill="#dcdcdc" stroke="#000" stroke-width="1.5"/><ellipse cx="142.1" cy="92.3" rx="3.8" ry="3.3" fill="#fff" stroke="#000" stroke-width="1"/></svg>
</div>
<span class="abs w" style="left:1142.3px;top:32.9px;font-size:13.2px;letter-spacing:-0.59px;color:#e2e2e2;-webkit-text-stroke:0">CIE</span> <span class="abs w" style="left:1164.0px;top:32.9px;font-size:13.2px;letter-spacing:-0.59px;color:#e2e2e2;-webkit-text-stroke:0">1976</span> <span class="abs w" style="left:1196.9px;top:32.9px;font-size:13.2px;letter-spacing:0.48px;color:#e2e2e2;-webkit-text-stroke:0">u'v'</span>
<div class="abs tk" style="left:973px;top:472.2px;width:5px;height:1.3px"></div>
<div class="abs tl yl" style="left:933.8px;top:467.9px">0</div>
<div class="abs tk" style="left:973px;top:436.9px;width:5px;height:1.3px"></div>
<div class="abs tl yl" style="left:933.8px;top:430.8px">0,05</div>
<div class="abs tk" style="left:973px;top:401.6px;width:5px;height:1.3px"></div>
<div class="abs tl yl" style="left:933.8px;top:395.5px">0,1</div>
<div class="abs tk" style="left:973px;top:366.2px;width:5px;height:1.3px"></div>
<div class="abs tl yl" style="left:933.8px;top:360.1px">0,15</div>
<div class="abs tk" style="left:973px;top:330.9px;width:5px;height:1.3px"></div>
<div class="abs tl yl" style="left:933.8px;top:324.8px">0,2</div>
<div class="abs tk" style="left:973px;top:295.6px;width:5px;height:1.3px"></div>
<div class="abs tl yl" style="left:933.8px;top:289.5px">0,25</div>
<div class="abs tk" style="left:973px;top:260.2px;width:5px;height:1.3px"></div>
<div class="abs tl yl" style="left:933.8px;top:254.2px">0,3</div>
<div class="abs tk" style="left:973px;top:224.9px;width:5px;height:1.3px"></div>
<div class="abs tl yl" style="left:933.8px;top:218.8px">0,35</div>
<div class="abs tk" style="left:973px;top:189.6px;width:5px;height:1.3px"></div>
<div class="abs tl yl" style="left:933.8px;top:183.5px">0,4</div>
<div class="abs tk" style="left:973px;top:154.3px;width:5px;height:1.3px"></div>
<div class="abs tl yl" style="left:933.8px;top:148.2px">0,45</div>
<div class="abs tk" style="left:973px;top:119.0px;width:5px;height:1.3px"></div>
<div class="abs tl yl" style="left:933.8px;top:112.8px">0,5</div>
<div class="abs tk" style="left:973px;top:83.6px;width:5px;height:1.3px"></div>
<div class="abs tl yl" style="left:933.8px;top:77.5px">0,55</div>
<div class="abs tk" style="left:977.5px;top:474px;width:1.3px;height:5px"></div>
<div class="abs tl xl" style="left:958.3px;top:481px">0</div>
<div class="abs tk" style="left:1049.9px;top:474px;width:1.3px;height:5px"></div>
<div class="abs tl xl" style="left:1030.7px;top:481px">0,1</div>
<div class="abs tk" style="left:1122.3px;top:474px;width:1.3px;height:5px"></div>
<div class="abs tl xl" style="left:1103.1px;top:481px">0,2</div>
<div class="abs tk" style="left:1194.7px;top:474px;width:1.3px;height:5px"></div>
<div class="abs tl xl" style="left:1175.5px;top:481px">0,3</div>
<div class="abs tk" style="left:1267.1px;top:474px;width:1.3px;height:5px"></div>
<div class="abs tl xl" style="left:1247.9px;top:481px">0,4</div>
<div class="abs tk" style="left:1339.5px;top:474px;width:1.3px;height:5px"></div>
<div class="abs tl xl" style="left:1320.3px;top:481px">0,5</div>

<div class="abs" id="tbl">
<div class="hd"></div>
<div class="r d" style="top:23.9px;height:22.5px"></div>
<b style="left:10.4px;top:29.5px;letter-spacing:0.47px">Target</b> <b style="left:56.5px;top:29.5px;letter-spacing:0.00px">Y</b> <b style="left:68.7px;top:29.5px;letter-spacing:1.47px">cd/m</b><b style="left:103.9px;top:27.2px;font-size:8.6px">2</b> <span style="left:123.0px;top:29.5px;letter-spacing:0.22px">1421,3246</span> <span style="left:194.0px;top:29.5px;letter-spacing:0.22px">373,3977</span> <span style="left:257.3px;top:29.5px;letter-spacing:0.22px">963,6469</span> <span style="left:320.4px;top:29.5px;letter-spacing:0.22px">84,2800</span> <span style="left:376.0px;top:29.5px;letter-spacing:0.22px">1047,9269</span> <span style="left:446.5px;top:29.5px;letter-spacing:0.22px">457,6776</span> <span style="left:510.6px;top:29.5px;letter-spacing:0.22px">1337,0446</span> <span style="left:581.2px;top:29.5px;letter-spacing:0.22px">1421,3246</span>
<div class="r l" style="top:46.2px;height:22.5px"></div>
<b style="left:10.3px;top:51.9px;letter-spacing:0.00px">Y</b> <b style="left:22.9px;top:51.9px;letter-spacing:1.30px">cd/m</b><b style="left:57.7px;top:49.5px;font-size:8.6px">2</b> <span style="left:123.0px;top:51.9px;letter-spacing:0.22px">1421,3246</span> <span style="left:194.0px;top:51.9px;letter-spacing:0.22px">145,2877</span> <span style="left:257.3px;top:51.9px;letter-spacing:0.22px">403,4676</span> <span style="left:320.4px;top:51.9px;letter-spacing:0.22px">53,5838</span> <span style="left:376.0px;top:51.9px;letter-spacing:0.22px">444,5040</span> <span style="left:446.5px;top:51.9px;letter-spacing:0.22px">186,4267</span> <span style="left:510.6px;top:51.9px;letter-spacing:0.22px">522,8937</span> <span style="left:581.2px;top:51.9px;letter-spacing:0.22px">1421,3246</span>
<div class="r d" style="top:68.6px;height:22.5px"></div>
<b style="left:10.7px;top:74.2px;letter-spacing:0.47px">Target</b> <b style="left:55.8px;top:74.2px;letter-spacing:-0.14px">x:CIE31</b> <span style="left:123.0px;top:74.2px;letter-spacing:0.22px">0,3127</span> <span style="left:194.0px;top:74.2px;letter-spacing:0.22px">0,7080</span> <span style="left:257.3px;top:74.2px;letter-spacing:0.22px">0,1700</span> <span style="left:320.4px;top:74.2px;letter-spacing:0.22px">0,1310</span> <span style="left:376.0px;top:74.2px;letter-spacing:0.22px">0,1465</span> <span style="left:446.5px;top:74.2px;letter-spacing:0.22px">0,3682</span> <span style="left:510.6px;top:74.2px;letter-spacing:0.22px">0,4465</span> <span style="left:581.2px;top:74.2px;letter-spacing:0.22px">0,3127</span>
<div class="r l" style="top:91.0px;height:22.5px"></div>
<b style="left:10.7px;top:96.6px;letter-spacing:0.47px">Target</b> <b style="left:55.8px;top:96.6px;letter-spacing:-0.14px">y:CIE31</b> <span style="left:123.0px;top:96.6px;letter-spacing:0.22px">0,3290</span> <span style="left:194.0px;top:96.6px;letter-spacing:0.22px">0,2920</span> <span style="left:257.3px;top:96.6px;letter-spacing:0.22px">0,7970</span> <span style="left:320.4px;top:96.6px;letter-spacing:0.22px">0,0460</span> <span style="left:376.0px;top:96.6px;letter-spacing:0.22px">0,3446</span> <span style="left:446.5px;top:96.6px;letter-spacing:0.22px">0,1471</span> <span style="left:510.6px;top:96.6px;letter-spacing:0.22px">0,5374</span> <span style="left:581.2px;top:96.6px;letter-spacing:0.22px">0,3290</span>
<div class="r d" style="top:113.3px;height:22.5px"></div>
<b style="left:10.0px;top:118.9px;letter-spacing:1.36px">x:</b> <b style="left:25.6px;top:118.9px;letter-spacing:-0.16px">CIE31</b> <span style="left:123.0px;top:118.9px;letter-spacing:0.22px">0,3126</span> <span style="left:194.0px;top:118.9px;letter-spacing:0.22px">0,6645</span> <span style="left:257.3px;top:118.9px;letter-spacing:0.22px">0,2480</span> <span style="left:320.4px;top:118.9px;letter-spacing:0.22px">0,1430</span> <span style="left:376.0px;top:118.9px;letter-spacing:0.22px">0,1887</span> <span style="left:446.5px;top:118.9px;letter-spacing:0.22px">0,3428</span> <span style="left:510.6px;top:118.9px;letter-spacing:0.22px">0,4354</span> <span style="left:581.2px;top:118.9px;letter-spacing:0.22px">0,3126</span>
<div class="r l" style="top:135.6px;height:22.5px"></div>
<b style="left:10.0px;top:141.3px;letter-spacing:1.36px">y:</b> <b style="left:25.6px;top:141.3px;letter-spacing:-0.16px">CIE31</b> <span style="left:123.0px;top:141.3px;letter-spacing:0.22px">0,3287</span> <span style="left:194.0px;top:141.3px;letter-spacing:0.22px">0,3265</span> <span style="left:257.3px;top:141.3px;letter-spacing:0.22px">0,6890</span> <span style="left:320.4px;top:141.3px;letter-spacing:0.22px">0,0578</span> <span style="left:376.0px;top:141.3px;letter-spacing:0.22px">0,3318</span> <span style="left:446.5px;top:141.3px;letter-spacing:0.22px">0,1608</span> <span style="left:510.6px;top:141.3px;letter-spacing:0.22px">0,5286</span> <span style="left:581.2px;top:141.3px;letter-spacing:0.22px">0,3287</span>
<span style="left:137.8px;top:6.2px;letter-spacing:0.26px">White</span> <span style="left:210.4px;top:6.2px;letter-spacing:-0.60px">Red</span> <span style="left:267.3px;top:6.2px;letter-spacing:-0.21px">Green</span> <span style="left:331.2px;top:6.2px;letter-spacing:0.05px">Blue</span> <span style="left:393.6px;top:6.2px;letter-spacing:-0.60px">Cyan</span> <span style="left:449.0px;top:6.2px;letter-spacing:-0.10px">Magenta</span> <span style="left:524.1px;top:6.2px;letter-spacing:-0.36px">Yellow</span> <span style="left:595.5px;top:6.2px;letter-spacing:-0.23px">100W</span>
<div id="sb"><svg width="15" height="163" style="position:absolute;left:0;top:0">
<rect x="0" y="24" width="15" height="139" fill="#636363"/>
<rect x="1.5" y="25.5" width="11.5" height="11.5" rx="2.5" fill="#7a7a7a" stroke="#8a8a8a" stroke-width=".8"/><path d="M3.8 34 L7.25 29 L10.7 34Z" fill="#353535"/>
<rect x="1.3" y="39" width="12" height="63.5" rx="4.5" fill="#484848"/>
<rect x="1.5" y="150" width="11.5" height="11.5" rx="2.5" fill="#7a7a7a" stroke="#8a8a8a" stroke-width=".8"/><path d="M3.8 153.5 L7.25 158.5 L10.7 153.5Z" fill="#353535"/>
</svg></div>
</div>

<div class="abs" id="bar">
<div class="tab sel" style="left:0.8px"><u style="background:#fff"></u><s>White</s></div>
<div class="tab" style="left:140.3px"><u style="background:#f00"></u><s>Red</s></div>
<div class="tab" style="left:279.8px"><u style="background:#0f0"></u><s>Green</s></div>
<div class="tab" style="left:419.3px"><u style="background:#00f"></u><s>Blue</s></div>
<div class="tab" style="left:558.8px"><u style="background:#0ff"></u><s>Cyan</s></div>
<div class="tab" style="left:698.3px"><u style="background:#f0f"></u><s>Magenta</s></div>
<div class="tab" style="left:837.8px"><u style="background:#ff0"></u><s>Yellow</s></div>
<div class="tab" style="left:977.3px"><u style="background:#fff"></u><s>100W</s></div>

<div class="cb" style="left:1117px;top:1px;width:48px;height:18.4px;border-radius:4px 4px 0 0"><div class="c" style="left:17px;top:2px;width:15px;height:15px;background:linear-gradient(#7c7c7c,#a4a4a4)"></div>
<svg class="abs" style="left:0;top:0" width="48" height="18"><path d="M20.3 10.6L24.5 6.6L28.7 10.6Z" fill="#3e3e3e"/></svg></div>
<div class="cb" style="left:1117px;top:20.4px;width:48px;height:40px;background:linear-gradient(#9a9a9a,#707070)">
<svg class="abs" style="left:0;top:0" width="48" height="40"><defs><linearGradient id="gl" x1="0" y1="0" x2="0" y2="1"><stop offset="0" stop-color="#b4b4b4"/><stop offset=".52" stop-color="#a6a6a6"/><stop offset=".52" stop-color="#8a8a8a"/><stop offset="1" stop-color="#909090"/></linearGradient><linearGradient id="gk" x1="0" y1="0" x2="0" y2="1"><stop offset="0" stop-color="#2e2e2e"/><stop offset=".5" stop-color="#262626"/><stop offset=".5" stop-color="#000"/><stop offset="1" stop-color="#000"/></linearGradient></defs>
<rect x="9.7" y="6.2" width="28.3" height="28.8" rx="4" fill="url(#gl)" stroke="#2c2c2c" stroke-width="2.6"/><rect x="17.2" y="13.8" width="13.5" height="14" fill="url(#gk)"/></svg></div>
<!-- button row -->
<div class="cb" style="left:1166px;top:1px;width:46px;height:30px"><div class="c" style="left:12.7px;top:5px"></div><svg class="abs" style="left:0;top:0" width="46" height="30"><rect x="18.8" y="11" width="8" height="8" fill="#3a3a3a"/></svg></div>
<div class="cb" style="left:1213.5px;top:1px;width:43.5px;height:30px"><div class="c" style="left:11.4px;top:5px"></div><svg class="abs" style="left:0;top:0" width="44" height="30"><path d="M18.4 10.2V19.8L26.4 15Z" fill="#333"/></svg></div>
<div class="cb" style="left:1258.5px;top:1px;width:43.5px;height:30px"><div class="c" style="left:11.5px;top:5px"></div><svg class="abs" style="left:0;top:0" width="44" height="30"><path d="M18.9 10.2H16.5V19.8H18.9M24.1 10.2H26.5V19.8H24.1" fill="none" stroke="#2e2e2e" stroke-width="2"/><rect x="19.3" y="14" width="1.6" height="2" fill="#2e2e2e"/><rect x="22.1" y="14" width="1.6" height="2" fill="#2e2e2e"/></svg></div>
<div class="cb" style="left:1303.2px;top:1px;width:43.8px;height:30px"><div class="c" style="left:11.2px;top:5px"></div><svg class="abs" style="left:0;top:0" width="44" height="30"><path d="M21.2 15C19.6 12.4 15.4 12.2 15.4 15S19.6 17.6 21.2 15S26.9 12.2 26.9 15S22.8 17.6 21.2 15Z" fill="none" stroke="#333" stroke-width="1.5"/></svg></div>
<div class="cb" style="left:1347px;top:1px;width:45.5px;height:30px;background:linear-gradient(#444,#2c2c2c)"><div class="c" style="left:12px;top:5px;background:linear-gradient(#2c2c2c,#3c3c3c)"></div><svg class="abs" style="left:0;top:0" width="46" height="30"><path d="M17.6 14.4A4.6 4.6 0 0 1 25.6 11.8M26.4 15.6A4.6 4.6 0 0 1 18.4 18.2" fill="none" stroke="#1c1c1c" stroke-width="2.3"/><path d="M23 13L28 13.2L27.4 8.6ZM21 17L16 16.8L16.6 21.4Z" fill="#1c1c1c"/></svg></div>
<div class="cb" style="left:1392.5px;top:1px;width:45.5px;height:30px;border-radius:0 4px 0 0"><div class="c" style="left:13.4px;top:4.8px;width:20.6px;height:20.6px;border-radius:11px;background:linear-gradient(#828282,#a0a0a0 50%,#bcbcbc)"></div></div>
<!-- back / next -->
<div class="nav" style="left:1166px;width:136px;border-radius:4px 0 0 0"><div class="c" style="left:21px"></div><svg class="abs" style="left:0;top:0" width="60" height="28"><path d="M30.6 10.2L26.2 14.6L30.6 19M34.8 10.2L30.4 14.6L34.8 19" fill="none" stroke="#303030" stroke-width="1.5"/></svg><span class="abs" style="left:56.5px;top:3px;letter-spacing:.2px">Back</span></div>
<div class="nav" style="left:1303.2px;width:134.8px"><span class="abs" style="left:26px;top:3px;letter-spacing:1.9px">Next</span><div class="c" style="left:96.6px"></div><svg class="abs" style="left:75.6px;top:0" width="60" height="28"><path d="M27 10.2L31.4 14.6L27 19M31.2 10.2L35.6 14.6L31.2 19" fill="none" stroke="#303030" stroke-width="1.5"/></svg></div>
<div class="abs" style="left:1438px;top:0;width:2px;height:60px;background:#2a2a2a"></div>

</div>
</body></html>
